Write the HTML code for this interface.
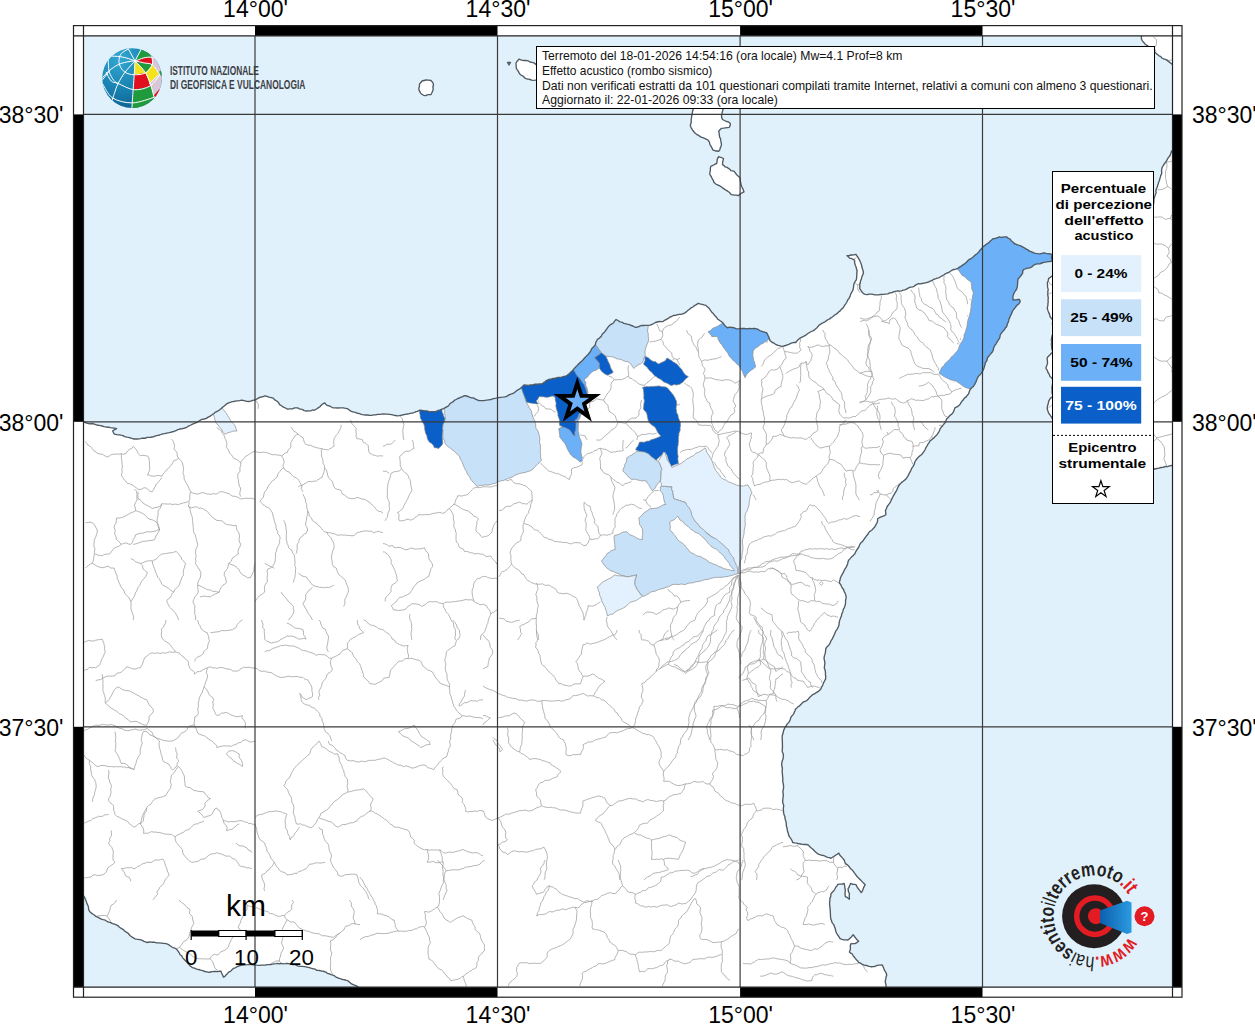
<!DOCTYPE html><html><head><meta charset="utf-8"><style>html,body{margin:0;padding:0;background:#fff;}svg{display:block;}</style></head><body>
<svg width="1255" height="1024" viewBox="0 0 1255 1024" font-family='"Liberation Sans", sans-serif'>
<defs><clipPath id="mc"><rect x="83.5" y="36" width="1089" height="951"/></clipPath><linearGradient id="gb" x1="0" y1="0" x2="0.6" y2="1"><stop offset="0" stop-color="#2fa7cf"/><stop offset="1" stop-color="#0b5d87"/></linearGradient><linearGradient id="cone" x1="0" y1="0" x2="1" y2="0"><stop offset="0" stop-color="#0c5fae"/><stop offset="1" stop-color="#2a9be0"/></linearGradient></defs>
<rect width="1255" height="1024" fill="#fff"/>
<g clip-path="url(#mc)">
<rect x="83.5" y="36" width="1089" height="951" fill="#e0f1fc"/>
<polygon points="83.5,422.0 85.0,422.4 86.5,423.0 88.1,423.3 89.6,423.8 92.0,423.5 94.4,424.1 96.6,425.0 99.0,425.4 100.6,425.7 102.2,426.0 103.8,426.6 105.4,426.8 107.0,427.2 108.7,427.2 110.3,427.6 111.9,427.8 114.3,428.2 116.7,428.6 114.6,429.6 112.7,431.0 113.4,432.6 114.3,434.2 115.6,434.3 116.9,434.6 118.3,434.8 119.6,434.8 120.9,435.1 122.2,435.3 123.5,435.9 124.6,436.6 127.0,437.2 129.5,437.6 131.8,438.4 134.2,439.0 135.8,439.0 137.4,439.0 139.0,438.9 140.6,438.6 142.2,438.2 143.8,438.2 145.5,438.2 146.9,437.4 148.5,437.4 150.2,437.3 151.8,437.0 153.4,436.8 154.9,436.1 156.5,435.6 158.1,435.3 159.7,435.0 162.0,434.0 164.4,433.6 166.8,433.1 169.2,432.6 170.4,432.3 171.7,432.0 172.9,431.6 174.2,431.5 175.3,430.8 176.5,430.4 177.5,429.7 178.8,429.4 180.0,429.0 181.4,428.9 182.6,428.5 183.9,428.4 185.1,427.9 186.4,427.5 187.5,426.8 188.5,426.1 189.7,425.5 190.9,425.0 192.0,424.4 193.2,423.9 194.4,423.4 195.5,422.8 196.8,422.5 197.9,421.8 199.8,420.5 201.8,419.3 204.1,419.0 206.3,418.4 208.2,417.1 210.2,416.1 212.1,414.8 213.9,413.5 215.6,412.1 217.6,411.1 219.5,410.0 221.2,408.5 222.9,407.1 224.6,405.7 226.2,404.2 228.2,403.1 229.5,402.5 230.9,402.1 232.3,401.6 233.7,401.5 235.1,401.2 236.5,400.9 238.0,400.9 239.4,400.7 241.8,400.2 244.2,400.7 246.5,401.3 248.9,401.5 250.5,401.2 252.1,400.6 253.7,400.2 255.3,399.9 256.4,399.2 257.6,398.6 258.7,397.9 259.8,397.3 261.1,397.0 262.4,396.8 263.6,396.3 264.9,395.9 267.0,396.4 269.0,397.2 271.1,397.6 273.2,398.2 274.8,399.9 276.8,401.0 278.5,402.6 279.6,404.6 281.5,405.8 283.4,407.1 285.5,408.0 287.5,409.1 289.9,408.9 292.4,408.9 294.6,407.9 297.1,407.8 298.3,408.2 299.4,408.8 300.7,409.1 301.9,409.4 303.1,409.9 304.2,410.6 305.4,410.8 306.7,411.0 308.7,410.8 310.7,410.8 312.6,410.0 314.6,410.2 315.9,409.3 317.2,408.5 318.5,407.6 319.9,406.7 320.9,405.5 322.1,404.4 323.5,403.5 325.0,403.0 325.7,404.1 326.6,405.1 327.8,405.5 329.1,405.9 330.3,406.3 331.3,407.0 332.5,407.6 333.7,407.8 335.7,407.8 337.7,408.0 339.7,407.8 341.7,407.8 343.2,407.9 344.7,408.2 346.2,408.3 347.6,408.9 349.0,409.6 350.0,410.7 351.5,411.3 352.9,411.8 354.5,412.2 356.0,412.7 357.6,413.3 359.2,413.5 360.7,414.2 362.3,414.7 363.9,414.9 365.6,415.0 367.6,415.0 369.6,415.4 371.6,415.3 373.6,414.9 375.6,414.9 377.6,414.3 379.6,414.4 381.6,414.2 383.6,414.0 385.6,414.1 387.6,414.1 389.6,414.4 391.6,414.7 393.5,415.2 395.5,415.5 397.5,415.8 399.1,415.7 400.7,415.3 402.3,415.0 403.9,414.6 405.4,414.3 407.0,414.0 408.7,413.9 410.2,413.4 411.5,413.2 412.7,413.1 413.9,412.5 415.1,412.0 416.3,411.6 417.5,411.3 418.7,410.7 419.8,410.2 422.2,410.3 424.6,410.8 427.1,410.9 429.4,411.8 431.2,411.6 433.1,411.6 435.0,411.6 436.8,411.2 438.4,410.3 440.3,409.9 441.9,409.2 443.7,408.6 444.8,407.9 445.9,407.4 446.9,406.6 448.1,406.1 449.0,405.1 449.7,404.0 450.6,403.2 451.7,402.5 453.3,401.6 454.5,400.2 456.2,399.5 457.8,398.5 459.5,398.0 461.1,397.1 462.8,396.6 464.4,395.7 466.3,396.0 468.2,396.5 469.9,397.3 471.8,397.8 473.8,398.0 475.4,399.1 477.2,399.8 479.0,400.6 481.5,400.6 484.0,400.5 486.4,400.2 488.9,399.8 490.1,399.6 491.4,399.5 492.5,398.8 493.7,398.6 496.2,398.2 498.6,397.7 500.6,397.3 502.7,397.2 504.7,396.9 506.7,396.3 508.5,395.2 510.3,394.3 512.3,393.6 514.2,392.8 515.4,391.8 516.6,390.7 517.9,389.9 519.3,389.2 520.5,388.2 521.7,387.2 522.9,386.1 524.0,385.0 526.2,385.1 528.4,385.4 530.6,384.9 532.8,385.0 534.9,384.2 537.2,384.2 539.4,384.0 541.6,384.0 542.8,383.3 543.9,382.4 545.1,381.8 546.0,380.8 547.3,380.2 548.6,379.6 549.9,379.2 551.3,379.1 553.0,378.5 554.7,378.3 556.4,377.8 558.1,377.5 559.9,377.4 561.6,377.2 563.3,376.7 565.0,376.2 566.2,375.8 567.3,375.3 568.2,374.4 569.2,373.7 571.0,371.9 572.8,370.3 573.7,369.3 574.4,368.2 575.5,367.4 576.2,366.3 577.3,365.4 578.1,364.4 579.2,363.6 580.0,362.5 581.8,361.1 583.3,359.5 584.8,357.8 586.4,356.1 588.1,354.5 589.5,352.8 590.7,350.9 591.7,348.8 592.5,347.7 593.6,346.9 594.4,345.9 595.3,344.8 595.6,343.5 595.9,342.2 596.6,341.0 597.2,339.8 598.1,338.9 599.2,338.2 600.2,337.2 601.2,336.4 601.7,335.2 602.4,334.0 603.4,333.1 604.4,332.2 605.7,330.5 607.0,328.7 608.2,326.9 609.7,325.3 611.5,324.1 613.4,323.0 614.6,321.1 616.1,319.5 618.0,320.5 619.8,321.8 622.0,322.2 623.9,323.4 625.4,323.7 626.9,324.1 628.5,324.4 629.9,324.9 631.4,325.5 632.9,326.0 634.2,326.8 635.7,327.3 637.3,327.0 638.9,326.6 640.3,325.9 641.9,325.4 643.5,325.5 645.2,325.4 646.8,325.4 648.4,325.4 650.3,325.2 652.1,324.4 653.8,323.5 655.4,322.5 657.3,322.0 659.2,321.5 661.1,321.6 663.0,321.5 664.6,320.3 666.4,319.3 668.3,318.4 669.8,317.1 671.7,316.5 673.3,315.5 675.2,315.4 677.0,314.8 678.9,314.3 680.9,314.4 682.7,313.8 684.5,313.2 686.2,311.9 687.8,310.6 689.4,309.3 691.0,307.9 692.9,307.0 694.5,305.6 696.4,304.6 698.1,303.4 700.0,303.9 702.0,304.3 704.0,304.9 705.9,305.4 707.6,306.9 709.3,308.5 710.5,310.4 711.8,312.2 713.5,313.8 714.8,315.6 716.4,317.2 717.7,319.1 719.1,320.0 720.4,321.0 721.8,321.9 723.0,323.0 724.0,324.3 724.9,325.7 726.3,326.7 727.4,327.9 728.6,327.4 729.8,327.2 731.1,327.3 732.4,327.5 733.6,327.7 734.8,328.1 736.0,328.6 737.2,328.8 739.7,328.7 742.1,328.4 744.5,328.5 747.0,328.8 749.4,328.5 751.8,328.6 754.3,328.3 756.7,328.8 758.0,329.3 759.0,330.0 760.2,330.8 761.4,331.2 762.7,331.7 764.0,331.8 765.2,332.4 766.5,332.7 767.3,333.9 767.9,335.2 768.5,336.5 769.1,337.8 769.6,339.2 770.0,340.6 771.2,341.5 772.3,342.5 773.6,342.9 774.7,343.7 775.8,344.4 777.0,345.0 778.2,345.4 779.6,345.7 780.8,346.1 782.1,346.4 783.8,346.0 785.6,345.5 787.2,344.9 788.9,344.3 790.5,343.4 792.2,342.9 794.0,342.4 795.8,342.5 796.7,341.2 797.7,340.1 798.9,339.1 800.0,338.1 802.0,337.1 804.0,336.2 805.9,335.1 807.6,333.7 809.5,332.5 811.4,331.5 813.4,330.6 815.2,329.2 816.3,328.3 817.3,327.4 818.2,326.3 819.0,325.2 820.2,324.4 821.3,323.7 822.6,323.0 823.8,322.4 825.0,321.8 826.1,320.9 827.2,320.1 828.4,319.5 829.7,318.9 830.7,317.9 831.9,317.3 833.0,316.5 834.7,315.0 836.7,313.9 838.3,312.3 840.1,310.9 841.5,309.1 843.3,307.7 844.4,305.6 845.7,303.8 846.9,302.0 847.7,300.0 849.1,298.4 850.0,296.4 850.6,294.4 851.6,292.5 852.7,290.7 853.3,288.6 853.6,286.3 853.9,284.0 854.9,281.9 856.3,279.9 856.6,277.7 856.8,275.4 856.8,273.1 857.1,270.8 856.7,269.5 856.3,268.3 856.1,267.0 855.5,265.8 855.1,264.5 854.7,263.2 854.6,261.9 854.6,260.6 853.6,259.6 852.3,258.8 850.9,258.4 849.5,258.1 848.4,256.7 847.0,255.6 849.3,255.5 851.5,255.0 853.7,254.8 855.9,254.3 856.6,255.4 857.3,256.4 858.1,257.5 858.7,258.6 859.3,259.7 860.0,260.8 860.3,262.0 860.9,263.2 861.3,264.4 861.7,265.7 861.9,267.0 862.3,268.2 862.7,269.5 863.1,270.7 863.2,272.0 863.5,273.3 862.6,275.1 861.8,276.9 861.4,278.9 860.6,280.7 860.3,282.7 859.7,284.6 859.9,286.6 859.7,288.6 860.6,289.9 861.4,291.2 862.4,292.5 863.5,293.6 865.3,294.3 867.2,294.7 869.1,294.1 871.1,294.2 873.0,294.4 874.9,294.8 876.8,294.8 878.7,294.9 880.9,294.4 883.2,294.3 885.5,294.1 887.8,293.9 889.8,292.8 892.1,292.5 894.3,291.7 896.5,291.1 898.2,291.0 899.9,291.1 901.5,290.8 903.1,290.2 904.8,289.9 906.4,289.2 907.8,288.4 909.3,287.5 910.9,287.2 912.6,286.9 914.2,286.3 915.5,285.1 916.9,284.3 918.5,283.6 920.2,283.8 921.9,283.5 923.3,283.4 924.5,282.9 925.9,282.8 927.2,282.3 928.5,282.0 929.7,281.4 930.9,280.9 932.2,280.4 933.3,279.5 934.6,279.1 935.9,278.7 937.1,278.2 938.4,277.8 939.7,277.3 940.8,276.5 942.0,275.9 943.7,275.0 945.3,273.9 947.0,273.0 948.8,272.4 950.4,271.3 952.0,270.2 953.8,269.5 955.7,269.1 957.7,268.3 959.5,267.2 961.3,266.1 963.0,264.8 964.8,263.7 966.4,262.3 967.8,260.7 969.4,259.3 971.5,258.3 973.4,256.8 975.0,255.1 977.0,253.8 978.6,252.1 980.0,250.2 981.7,248.6 983.0,246.6 984.4,245.9 985.6,244.8 986.9,243.9 988.3,243.2 989.4,242.1 990.4,240.9 991.6,239.9 992.8,238.8 994.5,238.5 996.2,238.1 997.9,237.5 999.5,236.8 1001.2,237.5 1003.0,237.1 1004.7,236.9 1006.5,236.8 1008.1,238.2 1010.0,239.0 1011.2,240.7 1012.8,242.1 1014.3,243.5 1016.3,244.3 1018.2,245.1 1020.2,245.6 1022.1,246.6 1024.0,247.7 1025.9,248.8 1027.8,249.9 1029.6,251.1 1031.7,251.8 1033.7,252.8 1035.8,253.4 1037.9,253.7 1039.9,253.9 1041.9,253.3 1044.0,252.8 1045.9,253.4 1048.0,253.6 1050.0,254.0 1052.0,254.4 1051.7,256.1 1051.4,257.8 1052.0,259.5 1052.0,261.2 1050.0,261.5 1047.9,261.6 1045.9,262.1 1043.8,262.3 1041.9,263.0 1039.9,263.8 1037.9,263.9 1035.8,264.2 1034.3,264.8 1033.0,265.8 1031.8,266.9 1030.4,267.6 1028.8,268.1 1027.2,268.2 1025.7,268.8 1024.1,269.1 1023.2,270.2 1022.6,271.6 1022.7,273.1 1021.8,274.4 1021.1,275.6 1020.1,276.6 1019.3,277.8 1018.2,278.8 1017.8,280.6 1017.6,282.4 1017.6,284.2 1017.3,286.0 1017.1,287.8 1016.4,289.5 1015.3,291.0 1014.3,292.5 1013.6,294.3 1013.0,296.1 1012.9,298.1 1013.0,300.0 1014.6,299.8 1016.3,299.9 1017.9,299.5 1019.5,299.5 1020.2,301.5 1019.5,302.9 1018.6,304.1 1017.2,305.0 1016.2,306.2 1015.3,307.6 1014.2,308.8 1013.2,310.1 1012.3,311.5 1011.8,313.1 1011.1,314.6 1010.3,316.0 1009.8,317.6 1008.9,319.1 1008.7,320.7 1008.2,322.3 1007.4,323.7 1007.1,325.4 1006.4,326.9 1005.2,328.1 1004.5,329.6 1003.4,330.7 1002.5,331.9 1001.4,333.1 1000.5,334.4 1000.0,335.9 999.9,337.5 999.1,338.8 998.3,340.2 997.5,341.5 996.6,342.7 995.9,344.1 994.9,345.3 994.2,346.7 993.5,348.1 993.4,349.6 992.8,351.1 992.1,352.3 991.1,353.3 990.3,354.4 989.4,355.4 988.6,356.6 987.6,357.6 987.2,359.0 986.9,360.4 986.3,361.6 985.3,362.7 985.2,364.1 984.7,365.4 984.4,366.7 984.0,368.0 983.5,369.3 983.0,370.6 982.3,371.7 981.6,372.9 980.8,373.9 979.9,374.9 978.9,375.8 978.1,376.8 977.5,378.0 977.0,379.3 976.4,380.5 976.1,381.8 975.3,382.9 974.8,384.2 974.0,385.3 973.4,386.5 972.3,387.3 971.3,388.2 970.2,389.5 969.5,391.0 969.0,392.5 968.5,394.1 967.3,395.2 966.4,396.6 965.1,397.6 963.9,398.8 963.1,400.1 961.9,401.3 961.0,402.7 960.2,404.1 959.1,405.3 957.8,406.4 956.4,407.2 954.9,407.9 954.2,410.1 953.3,412.3 951.8,414.1 949.8,415.5 948.4,417.3 946.7,418.9 945.8,421.1 944.7,423.1 943.5,424.5 942.5,426.0 941.2,427.3 940.1,428.8 939.6,430.5 938.7,432.1 937.7,433.7 936.7,435.2 935.2,436.3 934.1,437.8 932.6,438.9 931.2,440.1 929.7,441.2 929.0,442.9 927.8,444.4 927.0,446.0 925.8,447.9 924.9,450.0 923.7,451.9 922.4,453.7 920.7,455.3 918.9,456.6 917.4,458.3 916.0,460.0 914.8,462.0 914.2,464.3 913.1,466.3 911.8,468.2 910.9,470.3 909.8,472.3 908.8,474.4 907.7,476.4 906.5,478.3 904.9,479.9 903.2,481.2 901.4,482.6 899.9,484.2 898.6,486.0 897.6,488.0 896.8,490.1 895.6,492.1 894.4,494.2 893.2,496.2 892.1,498.4 891.1,500.5 890.1,502.7 888.6,504.6 887.2,506.5 886.5,508.5 885.5,510.4 885.7,512.6 885.9,514.7 883.9,515.8 881.7,516.7 879.6,517.5 877.6,518.8 877.6,520.4 877.4,522.0 876.7,523.4 875.9,524.8 875.2,526.2 874.3,527.5 873.2,528.6 872.2,529.8 870.9,530.8 869.6,531.6 868.6,532.9 867.8,534.3 866.8,535.5 865.8,536.8 864.9,538.0 864.0,539.3 863.3,540.3 862.6,541.4 861.6,542.2 860.7,543.1 860.0,544.1 859.5,545.3 859.0,546.4 858.5,547.5 857.0,549.6 855.8,551.7 855.2,552.8 854.8,554.0 853.7,554.8 853.0,555.8 851.4,557.1 850.1,558.6 848.7,560.1 848.0,562.0 847.6,564.0 846.8,565.9 845.9,567.7 844.8,569.4 843.9,571.0 843.2,572.7 842.2,574.3 841.3,575.9 840.5,577.7 840.1,579.5 839.6,581.3 839.3,583.1 840.7,584.5 841.4,586.3 842.3,588.0 843.6,589.5 844.1,591.4 845.1,593.1 845.7,594.9 846.2,596.8 845.9,598.9 845.5,601.0 845.6,603.1 845.1,605.2 844.5,607.3 843.4,609.2 842.9,611.2 842.1,613.2 841.6,614.4 841.5,615.7 841.0,616.9 840.5,618.1 840.1,619.3 839.6,620.5 839.4,621.7 839.1,623.0 839.1,624.3 838.8,625.6 838.4,626.8 837.7,627.9 837.3,629.1 836.5,630.2 835.7,631.2 835.2,632.4 834.3,634.6 833.3,636.7 832.3,638.9 830.9,640.9 830.1,643.1 828.8,645.2 827.0,646.8 825.7,648.8 825.6,651.2 825.2,653.6 824.4,655.9 824.0,658.3 824.5,660.7 824.9,663.1 824.6,665.5 824.3,667.9 824.8,669.2 825.2,670.6 825.4,671.9 825.5,673.3 825.4,674.8 825.8,676.1 825.6,677.5 825.7,678.9 824.9,680.2 824.2,681.6 823.5,682.9 823.0,684.4 822.5,685.9 821.5,687.0 821.1,688.5 820.2,689.8 818.5,691.3 816.6,692.4 814.8,693.7 812.8,694.6 811.2,696.1 809.5,697.6 808.1,699.3 806.5,700.8 804.8,701.3 803.3,702.1 802.0,703.3 800.8,704.6 799.6,705.8 798.1,706.6 796.9,707.9 795.6,709.0 795.2,710.5 794.4,711.8 793.9,713.3 793.1,714.6 792.0,715.8 791.1,717.0 790.5,718.5 790.1,720.0 789.0,722.1 787.3,723.9 786.1,725.9 784.8,727.9 783.9,729.8 783.3,731.8 782.9,733.8 782.2,735.8 782.2,738.1 782.3,740.4 782.4,742.7 782.4,745.0 782.5,747.4 782.2,749.7 782.4,752.1 783.3,754.2 783.4,756.6 783.0,758.9 782.2,761.1 781.7,763.4 781.8,765.8 782.4,768.0 782.2,770.4 782.2,772.7 782.5,774.7 782.6,776.6 782.9,778.6 782.7,780.6 783.0,782.6 783.4,784.5 783.6,786.5 783.5,788.5 783.2,790.0 782.8,791.5 783.0,793.0 783.3,794.4 783.3,795.9 783.0,797.4 782.9,798.9 782.7,800.4 782.7,801.9 782.9,803.3 783.5,804.7 783.7,806.2 783.4,807.7 783.3,809.2 783.5,810.7 783.5,812.2 784.0,814.5 784.9,816.7 785.1,819.1 785.9,821.4 786.3,823.7 786.4,826.1 787.1,828.3 787.4,830.7 787.9,832.3 788.4,833.8 788.8,835.4 789.5,836.9 790.5,838.1 791.4,839.5 792.2,841.0 792.7,842.5 794.7,842.9 796.7,843.2 798.6,843.6 800.6,844.0 802.6,844.3 804.5,844.5 806.6,844.5 808.5,845.2 809.6,846.6 810.9,847.8 812.3,848.8 813.6,850.0 814.8,851.3 816.1,852.4 817.4,853.6 819.0,854.4 820.5,854.8 822.0,855.3 823.6,855.5 825.0,856.1 826.4,856.9 827.9,857.3 829.5,857.6 830.9,858.3 832.9,857.0 834.9,855.7 836.9,854.5 838.8,853.1 839.5,854.5 840.4,855.8 841.6,856.9 842.6,858.1 843.6,859.2 844.4,860.6 844.9,862.1 845.4,863.6 847.5,864.9 849.2,866.7 850.6,868.8 852.6,870.3 854.0,872.3 855.5,874.3 856.9,876.3 858.6,878.1 860.3,879.7 861.9,881.4 863.5,883.1 865.2,884.7 864.1,886.6 863.2,888.6 862.5,890.8 861.2,892.6 859.9,890.6 858.3,888.8 857.1,886.8 855.9,884.7 854.6,884.4 853.2,884.4 851.9,884.0 850.7,883.4 850.1,884.7 849.4,886.0 849.0,887.5 848.0,888.6 848.3,890.0 848.3,891.3 848.9,892.6 849.5,893.8 849.2,895.1 849.3,896.5 849.4,897.8 849.4,899.2 847.5,897.7 845.4,896.6 845.1,895.0 845.1,893.3 845.1,891.6 845.4,889.9 844.9,888.3 844.8,886.7 844.5,885.0 844.1,883.4 842.5,884.0 840.8,884.1 839.1,884.2 837.5,884.7 837.0,886.1 835.9,887.0 835.3,888.3 834.6,889.6 833.8,890.7 832.8,891.8 831.8,892.8 830.9,893.9 830.9,895.3 830.7,896.6 830.0,897.8 829.9,899.2 830.0,900.5 829.6,901.8 829.6,903.2 829.6,904.5 829.9,906.8 830.1,909.1 830.3,911.4 830.4,913.8 830.5,916.1 830.7,918.5 831.5,920.7 832.2,922.9 833.7,924.6 834.5,926.7 835.3,928.8 835.7,931.0 836.5,933.1 837.7,935.0 839.0,936.8 840.1,938.7 842.0,939.3 844.0,939.8 846.0,939.8 848.0,940.0 849.4,938.8 850.8,937.6 852.0,936.1 853.3,934.8 854.5,936.5 855.8,938.2 857.1,939.8 858.6,941.3 856.8,942.6 855.0,943.6 852.8,943.6 850.7,944.0 850.3,946.0 850.4,948.0 850.2,950.0 849.4,951.9 850.7,953.2 852.3,954.0 853.1,955.6 854.2,957.0 855.3,958.4 856.4,959.7 857.7,960.9 858.6,962.4 859.9,962.9 861.2,963.6 862.4,964.3 863.6,964.9 865.0,965.3 866.4,965.5 867.8,965.9 869.1,966.4 870.8,966.7 872.4,966.7 874.1,966.5 875.8,966.2 877.2,965.3 878.9,965.1 880.6,965.1 882.3,965.0 883.2,967.0 884.0,969.1 885.0,971.1 886.2,973.0 886.7,975.2 886.0,977.3 885.7,979.4 885.2,981.5 885.7,983.6 886.1,985.7 886.1,987.9 886.2,990.0 360.9,990.0 359.5,988.5 358.0,987.1 356.4,985.8 354.5,985.1 352.6,984.4 350.8,983.3 349.3,981.9 347.7,980.7 346.5,980.4 345.2,980.0 344.0,979.7 342.7,979.5 341.5,979.1 340.3,978.6 339.1,978.4 337.9,977.9 336.7,977.4 335.5,976.9 334.6,975.9 333.4,975.3 332.2,974.9 331.0,974.6 329.8,974.0 328.6,973.6 327.3,973.3 326.4,972.4 325.2,971.9 324.0,971.5 322.8,971.2 321.5,971.1 320.3,970.7 319.1,970.5 317.8,970.4 316.5,970.3 315.6,969.4 314.3,968.9 313.1,968.8 311.9,968.4 310.7,968.1 309.5,967.6 307.1,967.1 304.7,966.7 302.3,966.4 299.8,966.4 297.5,965.8 295.3,964.6 292.8,964.7 290.4,964.0 288.6,963.6 286.8,963.5 285.0,963.7 283.2,963.8 281.4,963.4 279.6,963.9 277.8,963.4 276.0,963.7 274.2,963.8 272.4,964.2 270.7,964.5 268.9,964.6 267.1,964.6 265.3,965.1 263.5,965.1 261.7,965.2 259.3,965.3 256.9,965.2 254.5,965.0 252.1,964.6 249.8,964.3 247.4,964.6 245.0,964.8 242.6,965.2 241.3,965.4 240.1,965.7 238.8,966.0 237.5,966.3 236.5,967.1 235.4,967.8 234.1,968.1 233.0,968.8 231.8,969.9 230.8,971.1 229.3,971.8 228.0,972.8 227.1,974.0 225.9,975.1 224.9,976.4 223.4,977.1 222.9,975.6 222.2,974.2 221.4,972.7 221.0,971.2 219.5,971.2 218.0,971.6 216.5,971.5 215.0,971.3 213.5,971.5 212.0,971.6 210.6,972.0 209.1,972.4 207.0,971.8 204.8,971.5 202.8,970.7 200.7,970.2 198.6,969.5 196.5,969.2 194.5,968.2 192.4,967.6 191.4,966.8 190.3,966.1 189.5,965.1 188.7,964.1 187.8,963.2 187.0,962.2 186.1,961.3 185.2,960.4 183.8,959.1 182.5,957.6 181.7,955.8 180.1,954.7 179.3,952.9 178.2,951.3 177.1,949.8 175.6,948.5 174.4,948.0 173.1,947.6 171.9,947.0 170.8,946.2 169.6,945.5 168.6,944.6 167.4,944.1 166.1,943.7 163.7,943.3 161.3,943.1 158.9,942.9 156.5,942.8 154.2,942.2 151.7,942.2 149.3,942.0 146.9,942.5 145.5,941.8 144.0,941.4 142.6,940.6 141.2,939.9 139.6,939.6 138.1,939.4 136.5,939.2 135.0,938.9 133.4,937.8 131.7,936.8 130.2,935.7 128.9,934.2 127.6,932.8 125.9,931.9 124.3,930.7 123.0,929.3 121.2,928.4 119.5,927.3 118.1,925.8 116.3,924.8 114.4,924.0 112.5,923.7 110.7,922.7 108.7,922.2 106.9,921.3 105.2,920.2 103.2,919.7 101.3,919.1 99.5,918.2 97.7,917.1 95.8,916.4 94.3,915.0 93.0,914.2 91.8,913.4 90.7,912.4 89.6,911.4 88.6,909.5 88.5,907.4 87.9,905.4 86.9,903.6 86.3,901.5 85.5,899.6 84.7,897.7 83.6,895.9 80.0,895.9 80.0,422.0" fill="#fff"/>
<polygon points="1175.0,150.8 1173.3,150.7 1171.7,150.8 1171.3,152.0 1170.9,153.2 1170.5,154.4 1170.0,155.5 1169.3,156.5 1168.4,157.4 1167.8,158.5 1167.2,159.6 1166.0,161.8 1164.4,163.7 1163.1,165.8 1161.9,168.0 1161.8,169.3 1161.5,170.5 1161.7,171.8 1161.7,173.1 1161.4,174.3 1160.7,175.4 1160.5,176.7 1160.1,177.9 1159.7,179.1 1159.5,180.4 1159.0,181.5 1158.4,182.7 1158.2,183.9 1157.7,185.1 1157.5,186.3 1157.0,187.5 1156.4,188.8 1156.0,190.1 1155.9,191.5 1156.2,192.9 1155.5,194.0 1155.1,195.4 1154.7,196.6 1154.3,197.9 1153.9,199.3 1153.9,200.6 1153.8,202.0 1153.7,203.3 1153.3,204.6 1153.2,206.0 1152.7,207.3 1152.4,208.6 1152.5,209.9 1152.7,211.3 1152.4,212.6 1152.1,214.0 1151.9,215.3 1151.6,216.6 1151.2,217.9 1151.0,219.3 1151.0,220.6 1150.8,222.0 1150.9,223.3 1150.8,224.7 1150.8,226.0 1150.4,227.3 1150.3,228.7 1150.0,230.0 1148.6,231.3 1147.0,232.2 1145.2,232.9 1143.5,233.6 1141.7,234.2 1139.9,234.8 1138.5,236.2 1137.2,237.6 1135.7,238.8 1134.6,240.3 1133.1,241.4 1131.5,242.4 1130.0,243.4 1128.4,244.4 1126.7,245.3 1125.6,246.9 1124.1,248.1 1122.5,249.0 1120.9,250.1 1119.4,251.2 1117.5,251.5 1115.7,251.9 1113.9,252.5 1112.2,253.5 1110.7,254.6 1109.2,255.6 1107.6,256.6 1106.0,257.6 1104.4,258.6 1102.6,259.3 1101.8,261.1 1100.0,262.0 1098.9,262.8 1097.6,263.1 1096.5,263.8 1095.3,264.2 1093.9,264.2 1092.6,264.1 1091.4,264.6 1090.1,264.7 1088.8,265.0 1087.5,265.2 1086.3,265.6 1085.0,265.7 1083.7,266.1 1082.5,266.3 1081.2,266.5 1079.9,266.7 1078.8,267.4 1077.4,267.6 1076.1,267.5 1074.8,267.5 1073.7,268.2 1072.6,269.0 1071.3,269.2 1069.9,269.2 1068.7,269.6 1067.4,270.0 1066.3,270.6 1065.1,271.3 1063.8,271.3 1062.5,271.4 1061.2,271.6 1060.0,272.0 1058.1,273.2 1055.9,273.8 1053.8,274.6 1052.0,276.0 1050.4,277.3 1048.7,278.3 1048.4,279.7 1048.1,281.0 1047.6,282.3 1047.3,283.7 1047.6,285.2 1047.5,286.8 1047.9,288.3 1048.3,289.8 1047.8,291.3 1047.9,292.9 1047.7,294.5 1047.9,296.0 1048.3,297.5 1048.1,299.1 1048.1,300.6 1048.2,302.2 1047.9,303.7 1047.9,305.3 1047.5,306.8 1047.3,308.3 1047.9,310.4 1048.6,312.4 1049.6,314.4 1050.0,316.5 1051.4,318.4 1053.0,320.0 1052.6,322.0 1052.4,324.1 1053.1,326.0 1053.5,328.1 1053.6,330.1 1053.4,332.2 1052.8,334.1 1052.0,336.0 1051.7,338.0 1051.3,340.0 1051.7,342.0 1051.4,344.1 1051.6,346.1 1051.7,348.1 1052.2,350.1 1053.0,352.0 1051.4,353.2 1050.1,354.7 1048.7,356.1 1047.3,357.5 1047.1,358.9 1047.4,360.3 1047.4,361.7 1047.6,363.1 1047.2,364.4 1046.7,365.7 1046.2,367.0 1046.0,368.4 1047.3,370.3 1048.0,372.5 1049.3,374.4 1050.0,376.6 1051.8,378.1 1053.0,380.0 1052.9,382.0 1052.5,384.0 1052.2,386.0 1051.9,388.0 1052.2,390.0 1052.0,392.1 1052.4,394.1 1053.0,396.0 1051.9,397.3 1050.4,398.2 1049.6,399.7 1048.7,401.2 1048.3,403.2 1047.7,405.2 1047.3,407.3 1047.3,409.4 1047.9,410.8 1048.3,412.3 1049.0,413.7 1050.0,414.9 1050.8,416.1 1051.7,417.3 1052.3,418.7 1053.0,420.0 1054.7,421.3 1056.1,422.8 1057.9,424.0 1059.2,425.7 1060.4,427.6 1061.8,429.2 1063.9,430.0 1065.8,430.9 1067.6,432.1 1069.2,433.4 1071.2,434.2 1072.9,435.5 1074.8,436.5 1076.3,438.0 1078.0,439.3 1080.0,440.0 1081.3,440.5 1082.6,440.9 1083.9,441.2 1085.3,441.3 1086.4,442.1 1087.6,442.9 1088.6,443.8 1089.7,444.6 1090.9,445.2 1092.1,445.9 1093.4,446.1 1094.7,446.4 1095.8,447.2 1097.1,447.7 1098.5,447.9 1099.9,447.9 1101.2,448.1 1102.3,448.9 1103.6,449.3 1104.8,449.9 1106.0,450.6 1107.2,451.1 1108.5,451.5 1109.7,452.0 1111.0,452.4 1112.2,452.9 1113.5,453.4 1114.7,454.0 1116.0,454.3 1117.4,454.4 1118.7,454.8 1120.0,455.0 1122.3,455.7 1124.6,455.8 1126.9,456.3 1129.2,457.0 1131.5,457.6 1133.6,458.7 1135.7,459.8 1137.7,461.0 1139.7,462.3 1141.9,463.5 1144.2,464.0 1146.6,464.1 1148.7,465.3 1150.6,466.6 1152.7,467.7 1154.6,469.1 1156.7,468.5 1158.9,468.2 1161.0,467.5 1163.2,467.3 1165.3,466.5 1167.5,466.7 1169.5,465.9 1171.7,465.5 1173.3,465.6 1175.0,465.5" fill="#fff"/>
<polygon points="1140.0,33.0 1140.6,35.0 1141.5,36.9 1141.4,39.0 1142.4,40.9 1143.3,42.1 1144.3,43.1 1145.3,44.3 1146.5,45.2 1147.9,45.8 1148.8,47.0 1150.0,47.9 1151.0,49.0 1152.1,50.4 1153.5,51.6 1155.0,52.5 1156.3,53.6 1157.8,54.7 1159.1,55.8 1160.8,56.6 1161.9,58.0 1163.6,58.9 1165.5,59.4 1167.2,60.4 1168.7,61.6 1170.2,62.8 1171.7,64.0 1173.4,64.9 1175.0,66.0 1175.0,33.0" fill="#fff"/>
<polygon points="426.1,80.0 428.6,80.2 431.0,80.5 432.4,82.1 433.5,84.0 433.3,85.5 432.9,87.0 433.2,88.5 433.0,90.0 432.1,92.3 431.0,94.5 429.7,94.6 428.4,94.6 427.1,94.9 426.0,95.6 423.6,95.3 421.5,94.0 420.5,92.9 419.8,91.7 419.2,90.4 418.8,89.0 419.0,87.7 419.4,86.5 419.5,85.3 419.5,84.0 420.9,82.6 422.0,81.0 424.0,80.5" fill="#fff"/>
<polygon points="519.2,59.1 520.8,59.8 522.5,60.3 524.2,60.5 526.0,60.5 528.1,60.8 529.9,62.0 531.9,62.3 533.9,62.9 535.6,64.1 537.0,65.5 537.1,67.3 536.9,69.1 537.1,70.9 537.2,72.8 537.7,74.5 537.6,76.4 537.4,78.2 537.0,80.0 535.2,80.2 533.5,80.3 531.7,80.1 530.0,79.5 528.7,79.2 527.4,79.0 526.1,78.7 524.9,78.2 524.1,77.2 523.2,76.2 522.1,75.7 521.0,75.0 519.5,73.7 518.6,71.9 517.9,70.7 517.1,69.6 516.4,68.4 516.2,67.0 516.1,65.0 516.0,63.0 516.7,61.9 517.4,60.9 518.3,60.0" fill="#fff"/>
<polygon points="693.2,104.0 693.6,105.3 693.3,106.7 693.3,108.0 693.2,109.3 692.8,110.5 692.5,111.8 692.3,113.1 692.0,114.4 691.8,115.6 691.6,116.9 691.4,118.2 691.2,119.5 691.2,121.0 691.2,122.5 690.7,124.0 690.3,125.4 691.1,127.6 692.3,129.6 693.6,131.5 695.2,133.2 696.6,134.3 698.1,135.1 699.6,136.1 701.0,137.1 702.8,137.7 704.5,138.4 706.2,139.1 707.9,140.0 708.9,141.3 709.6,142.8 709.9,144.5 710.8,145.9 711.9,147.8 712.7,149.8 714.1,150.4 715.5,151.0 717.1,151.0 718.6,151.3 719.8,149.9 720.2,148.2 720.9,146.6 721.5,144.9 721.2,142.9 720.8,140.9 720.6,138.9 719.6,137.1 719.4,135.6 719.3,134.1 719.0,132.7 718.6,131.2 720.0,129.7 721.5,128.3 723.5,128.2 725.4,127.9 727.4,127.6 729.3,127.3 730.2,125.4 730.3,123.4 728.6,121.9 726.4,121.5 724.5,120.5 722.5,119.5 721.7,117.6 721.5,115.6 722.0,114.0 722.2,112.4 722.6,110.9 723.0,109.3 723.1,108.0 723.2,106.7 723.3,105.3 723.0,104.0 721.1,103.8 719.3,103.3 717.4,103.6 715.5,103.9 713.8,104.8 711.9,105.2 710.0,105.0 708.1,104.9 706.2,104.7 704.4,104.4 702.6,103.7 700.7,103.4 698.8,103.6 697.0,104.4 695.1,104.5" fill="#fff"/>
<polygon points="718.6,156.6 719.8,157.1 721.2,157.3 722.3,158.0 723.5,158.6 723.2,160.1 722.8,161.5 722.6,163.0 722.5,164.5 723.9,165.6 725.2,166.9 727.0,167.3 728.4,168.4 729.8,169.3 730.9,170.6 732.6,170.8 734.2,171.3 735.5,173.2 736.9,174.9 738.6,176.4 740.1,178.1 740.3,180.1 740.5,182.1 741.0,184.1 741.5,186.0 742.1,187.5 742.9,188.8 743.4,190.3 744.0,191.8 742.5,192.7 740.9,193.5 739.5,194.6 738.1,195.7 736.5,195.1 734.7,195.1 733.0,194.9 731.3,194.7 730.4,193.6 729.5,192.5 728.4,191.7 727.2,190.9 726.0,190.2 724.8,189.4 723.7,188.6 722.5,187.9 721.0,186.6 719.3,185.7 717.5,184.8 715.7,184.0 714.7,182.9 713.7,181.9 713.4,180.5 712.5,179.3 711.9,178.0 711.3,176.6 710.5,175.5 709.8,174.2 709.9,172.2 710.4,170.3 710.3,168.3 710.8,166.4 712.3,165.7 713.7,165.0 715.1,164.1 716.6,163.5 717.0,162.3 717.1,161.0 717.1,159.8 717.6,158.6" fill="#fff"/>
<polygon points="507.5,62.5 510.5,62.5 509.0,65.0" fill="#fff"/>
<polygon points="212.0,410.0 213.7,408.3 215.7,406.9 217.6,405.4 219.7,404.4 220.5,405.6 221.1,406.9 222.0,408.0 223.0,409.1 223.9,410.2 224.8,411.3 225.5,412.5 226.6,413.5 227.5,415.6 228.9,417.5 230.0,419.6 231.4,421.4 232.3,422.5 233.3,423.5 234.2,424.6 235.0,425.8 235.5,427.1 235.9,428.4 236.5,429.7 237.0,431.0 235.6,431.0 234.1,431.0 232.7,431.3 231.4,431.8 229.7,432.3 228.0,432.6 226.6,433.5 225.0,434.2 223.6,432.8 222.4,431.2 221.6,429.3 220.2,427.8 219.1,426.4 218.0,424.9 216.6,423.7 215.5,422.2 215.3,420.6 214.8,419.1 214.4,417.6 213.9,416.1 213.6,414.5 213.1,413.0 212.8,411.4" fill="#e2f1fd" stroke="#8a8a8a" stroke-width="0.7" stroke-linejoin="round"/>
<polygon points="417.5,406.7 419.0,407.0 420.5,407.1 422.0,407.3 423.5,407.4 425.0,407.5 426.4,407.4 428.0,407.4 429.4,407.8 430.9,407.6 432.4,407.1 434.0,407.0 435.5,407.2 436.9,406.5 438.3,405.9 439.7,405.3 441.3,405.1 441.6,406.9 442.0,408.7 441.9,410.5 442.3,412.3 443.2,414.0 443.5,415.8 444.4,417.4 445.3,419.0 444.8,420.6 444.5,422.2 443.6,423.6 443.0,425.1 442.9,426.8 442.6,428.4 443.0,430.0 442.9,431.7 442.6,433.1 442.5,434.5 442.3,435.9 442.3,437.3 442.4,438.7 442.6,440.1 442.6,441.5 442.9,442.9 442.3,444.5 441.2,445.9 440.0,447.1 438.9,448.4 436.5,447.9 434.1,447.6 433.8,446.3 433.2,445.2 432.3,444.2 431.5,443.2 430.3,442.8 429.2,441.9 428.5,440.8 427.8,439.7 427.2,438.1 427.0,436.5 426.6,434.9 425.6,433.5 425.3,431.9 424.9,430.3 424.6,428.7 424.6,427.0 424.2,425.7 423.9,424.4 423.2,423.2 422.6,422.0 421.8,420.9 421.3,419.7 420.6,418.5 420.2,417.2 420.2,415.8 420.0,414.5 419.6,413.2 419.6,411.8 419.3,410.4 418.7,409.2 418.1,408.0" fill="#0a60c8" stroke="#8a8a8a" stroke-width="0.7" stroke-linejoin="round"/>
<polygon points="442.2,404.9 443.3,404.3 444.4,403.7 445.4,402.9 446.5,402.3 447.5,401.6 448.5,400.7 449.3,399.7 450.2,398.8 451.5,397.5 453.0,396.5 454.8,396.1 456.6,395.6 458.3,395.0 459.8,393.8 461.2,392.7 462.9,392.0 465.0,392.3 466.9,393.4 469.0,393.4 471.1,393.6 473.1,394.3 475.2,394.9 477.1,395.8 479.0,396.6 481.3,396.4 483.5,395.9 485.8,396.0 488.1,395.6 490.3,395.2 492.5,394.6 494.8,394.4 497.1,394.0 499.0,393.4 501.0,392.7 502.6,391.3 504.7,391.1 506.8,390.7 508.6,389.7 510.6,389.4 512.7,389.1 513.9,388.2 515.2,387.3 516.5,386.4 517.5,385.1 518.6,383.9 519.9,383.1 521.2,382.3 522.5,381.3 522.4,382.7 522.5,384.2 522.8,385.6 522.4,387.1 523.1,388.3 523.7,389.6 524.1,391.0 524.3,392.5 524.7,393.9 524.8,395.3 524.9,396.7 524.9,398.1 525.3,399.5 525.8,400.9 526.5,402.1 526.9,403.5 528.1,405.3 529.0,407.3 530.2,409.0 531.3,410.9 531.7,413.0 532.4,415.0 532.8,417.2 533.8,419.1 534.9,421.2 535.6,423.4 535.7,425.8 535.9,428.2 537.3,430.1 538.4,432.1 538.9,434.4 539.6,436.7 539.7,438.2 539.9,439.7 539.5,441.1 539.5,442.6 540.0,444.0 540.5,445.5 540.4,447.0 540.6,448.5 540.4,449.9 540.3,451.4 540.5,452.9 540.7,454.4 540.5,455.9 540.7,457.4 541.0,458.8 541.6,460.2 540.4,461.4 539.3,462.7 537.8,463.7 536.6,464.9 535.5,466.3 534.3,467.5 533.2,468.9 531.8,469.9 530.2,470.8 528.5,471.4 526.8,471.9 525.1,472.4 523.4,472.9 521.6,472.9 519.9,473.6 518.1,473.8 517.0,474.5 515.7,474.9 514.4,475.4 513.5,476.4 512.3,477.0 511.1,477.4 509.9,477.9 508.7,478.5 507.4,478.8 506.1,479.2 504.9,479.8 503.8,480.5 502.4,480.5 501.1,480.8 499.9,481.2 498.6,481.6 497.4,482.3 496.1,482.8 494.9,483.5 493.4,483.6 492.1,484.1 490.8,484.5 489.4,484.7 488.1,485.1 486.7,485.0 485.3,484.9 483.9,485.0 482.6,485.5 481.1,485.3 479.7,485.4 478.5,486.1 477.1,486.5 475.7,485.1 474.5,483.4 473.0,482.0 471.7,480.6 470.4,478.9 469.8,477.0 468.4,475.5 467.3,473.8 466.5,471.5 465.2,469.5 464.2,467.3 463.2,465.1 462.5,462.8 461.3,460.7 460.2,458.6 459.5,456.2 457.9,454.7 456.2,453.2 454.6,451.6 452.8,450.3 451.1,448.8 449.3,447.4 447.4,446.1 445.9,444.5 444.9,442.7 444.5,440.6 443.4,438.8 442.9,436.7 442.7,435.4 443.0,434.2 442.8,433.0 442.9,431.7 443.0,430.0 442.6,428.4 442.9,426.8 443.0,425.1 443.6,423.6 444.5,422.2 444.8,420.6 445.3,419.0 445.2,417.2 445.0,415.4 444.7,413.6 444.7,411.7 444.3,409.9 443.3,408.4 442.7,406.7" fill="#c7e1f9" stroke="#8a8a8a" stroke-width="0.7" stroke-linejoin="round"/>
<polygon points="569.9,367.5 570.5,366.3 571.7,365.5 572.6,364.6 573.4,363.4 574.4,362.6 575.5,361.8 576.5,360.8 577.2,359.7 579.0,358.3 580.2,356.3 581.9,354.9 583.5,353.2 584.8,351.4 586.3,349.7 587.9,348.0 588.9,346.0 589.9,344.9 590.7,343.6 591.5,342.4 592.4,341.3 593.6,342.7 594.8,344.1 596.0,345.4 597.3,346.8 598.2,348.3 599.2,349.8 600.4,351.3 601.5,352.7 599.9,354.0 598.2,355.3 596.4,356.4 594.6,357.6 595.8,359.1 597.1,360.5 598.4,362.0 599.5,363.5 599.4,364.8 599.4,366.0 598.9,367.2 598.6,368.4 597.6,369.2 596.4,369.9 595.2,370.5 593.9,370.8 592.8,371.4 591.8,372.3 590.7,373.1 589.8,374.0 588.6,375.5 587.5,377.1 585.9,378.2 584.4,379.3 584.8,381.0 585.8,382.4 585.7,384.1 585.9,385.7 586.6,387.2 587.2,388.8 587.5,390.4 588.0,392.0 587.5,394.3 586.9,396.6 586.7,398.9 586.5,401.3 585.4,403.4 584.5,405.5 584.0,407.8 583.0,410.0 582.4,411.3 582.2,412.7 581.4,413.9 580.8,415.1 580.1,416.4 579.7,417.7 578.9,418.9 578.0,420.0 578.2,421.9 578.4,423.8 578.3,425.7 578.3,427.6 578.1,429.5 578.3,431.5 578.7,433.3 579.1,435.2 579.2,436.9 580.0,438.4 580.7,439.9 581.2,441.4 581.7,443.0 581.9,444.7 581.5,446.3 581.2,448.0 581.1,449.6 580.9,451.3 581.1,452.9 581.3,454.5 581.7,456.1 582.2,457.7 582.2,459.4 582.3,461.0 580.2,462.0 579.0,461.0 577.9,460.0 576.6,459.1 575.4,458.2 574.0,457.4 572.7,456.7 571.8,455.4 570.5,454.5 569.4,452.4 568.1,450.4 567.1,448.2 566.2,446.0 565.6,444.8 564.8,443.6 564.1,442.5 563.1,441.5 562.3,440.4 561.5,439.3 560.7,438.2 559.7,437.3 559.8,435.1 559.4,433.0 559.1,430.8 558.7,428.7 560.3,427.8 562.0,427.0 563.5,426.0 565.0,425.0 565.4,422.9 566.2,421.0 566.9,419.0 567.5,417.0 569.3,415.8 570.6,414.1 571.6,412.1 572.0,410.0 572.1,408.7 572.2,407.4 572.4,406.1 572.9,405.0 573.3,403.7 573.7,402.5 573.9,401.3 574.2,400.0 574.3,398.8 574.4,397.5 574.6,396.2 574.8,395.0 575.5,393.9 575.7,392.6 576.1,391.3 576.0,390.0 575.5,388.6 575.0,387.3 574.5,385.9 573.9,384.5 573.4,383.1 573.1,381.7 573.2,380.2 573.0,378.7 572.6,377.3 571.9,376.1 571.3,374.7 570.9,373.3 570.6,371.8 570.0,370.5 570.0,369.0" fill="#6cb0f7" stroke="#8a8a8a" stroke-width="0.7" stroke-linejoin="round"/>
<polygon points="520.3,382.9 522.1,382.4 524.0,381.9 525.8,381.6 527.5,380.8 529.5,380.8 531.3,380.4 533.1,379.8 535.0,379.4 536.8,379.1 538.7,378.8 540.6,378.3 542.5,378.3 544.0,377.2 545.7,376.2 547.7,376.3 549.5,375.5 550.8,374.9 552.1,374.7 553.4,374.2 554.8,373.9 556.2,373.7 557.3,372.9 558.6,372.4 559.8,371.7 561.2,371.5 562.5,371.2 563.9,371.1 565.2,370.6 566.5,370.0 567.8,369.4 568.8,368.4 569.9,367.5 570.0,367.5 571.6,368.5 573.2,369.7 574.4,371.2 575.4,372.8 576.3,374.6 577.4,376.1 578.8,377.5 580.2,378.8 581.0,380.4 582.1,381.9 583.0,383.5 584.4,384.7 584.9,386.9 585.8,389.0 586.4,391.2 587.1,393.3 586.3,395.0 586.0,396.8 586.0,398.7 586.1,400.5 585.6,402.3 584.8,403.9 584.5,405.8 583.4,407.3 582.4,408.3 581.3,409.3 580.9,410.6 580.5,412.0 579.7,413.1 578.8,414.2 578.4,415.6 578.0,416.9 576.8,419.0 574.8,420.2 575.8,422.2 576.0,424.4 575.9,426.5 575.9,428.7 575.5,430.6 574.7,432.4 575.0,434.3 574.8,436.3 574.0,435.2 572.8,434.5 572.1,433.3 571.3,432.2 570.6,431.1 569.7,430.0 568.6,429.2 567.3,428.7 565.5,427.7 563.5,427.2 561.6,426.3 559.7,425.5 559.3,423.4 559.6,421.4 559.3,419.3 558.6,417.4 557.9,415.4 557.9,413.3 557.3,411.3 556.5,409.4 556.3,407.8 555.8,406.2 556.0,404.5 556.1,402.8 555.5,401.3 555.2,399.7 555.2,398.0 554.4,396.5 552.2,396.0 550.6,396.5 549.1,397.0 547.4,397.3 545.8,397.3 544.2,396.9 542.6,396.7 540.9,396.7 539.3,396.5 538.6,397.7 538.0,398.8 537.2,400.0 536.1,400.8 537.1,402.5 538.3,404.0 536.4,403.9 534.5,403.5 532.6,403.4 530.7,403.0 528.5,402.7 526.4,401.9 525.8,399.5 524.8,397.2 523.8,394.9 522.9,392.6 522.2,390.2 521.2,388.0 520.6,385.5 519.9,383.2" fill="#0a60c8" stroke="#8a8a8a" stroke-width="0.7" stroke-linejoin="round"/>
<polygon points="594.6,357.6 596.4,356.4 598.2,355.3 599.9,354.0 601.5,352.7 603.5,354.2 605.4,355.7 606.4,356.9 606.7,358.3 607.5,359.6 607.9,361.0 608.6,362.3 609.3,363.6 609.9,365.0 610.3,366.4 610.8,368.0 611.5,369.4 612.5,370.8 613.2,372.3 611.9,373.3 610.3,373.9 608.9,374.8 607.3,375.2 606.0,374.6 604.8,374.0 603.7,373.0 602.5,372.3 601.0,370.4 599.5,368.4 599.3,365.9 599.5,363.5 598.4,362.0 597.1,360.5 595.8,359.1" fill="#0a60c8" stroke="#8a8a8a" stroke-width="0.7" stroke-linejoin="round"/>
<polygon points="592.4,341.3 594.0,340.2 595.1,338.6 596.6,337.4 597.6,335.8 598.7,334.2 599.7,332.6 600.6,331.0 601.6,329.4 603.1,327.6 605.0,326.1 606.6,324.4 608.4,322.9 610.3,321.5 612.1,319.8 613.5,318.0 614.6,315.8 616.0,316.1 617.4,316.5 618.8,316.9 620.2,317.2 621.5,317.9 622.8,318.6 624.2,318.9 625.4,319.7 626.7,320.1 628.0,320.6 629.2,321.2 630.4,321.8 631.8,322.2 633.1,322.6 634.4,322.8 635.7,323.3 637.1,323.3 638.5,323.1 639.9,323.1 641.3,322.8 642.7,322.4 644.0,322.0 645.5,321.8 646.9,321.7 647.7,324.0 648.2,326.5 647.9,328.9 647.5,331.4 648.3,333.7 648.2,336.2 648.7,338.6 648.4,341.0 647.8,342.7 647.1,344.3 646.4,345.9 645.9,347.6 645.4,349.4 645.0,351.1 645.0,352.9 645.4,354.7 644.5,356.6 643.7,358.5 643.4,360.6 642.5,362.5 641.4,363.3 640.3,364.0 639.0,364.4 637.8,365.0 636.9,366.0 635.7,366.6 634.7,367.5 633.7,368.4 632.4,366.3 631.1,364.2 630.2,363.3 629.2,362.6 628.1,362.0 626.9,361.5 625.5,361.4 624.1,361.0 622.8,360.4 621.6,359.7 620.2,359.4 618.9,359.1 617.5,358.9 616.1,358.6 615.0,357.7 613.6,357.3 612.3,356.8 610.9,356.5 609.5,356.7 608.1,356.4 606.7,356.2 605.4,355.7 603.5,354.2 601.5,352.7 600.4,351.3 599.2,349.8 598.2,348.3 597.3,346.8 596.0,345.4 594.8,344.1 593.6,342.7" fill="#c7e1f9" stroke="#8a8a8a" stroke-width="0.7" stroke-linejoin="round"/>
<polygon points="645.4,356.2 647.0,357.2 648.7,358.0 650.0,359.4 651.5,360.5 653.2,361.4 655.2,361.5 656.7,362.7 658.1,364.0 659.4,363.5 660.6,363.1 661.7,362.3 663.0,361.9 664.3,361.2 665.4,360.4 666.2,359.3 666.9,358.1 668.6,358.7 670.0,359.8 671.6,360.6 672.9,361.8 674.5,362.6 676.0,363.5 677.4,364.6 678.6,365.9 679.7,367.4 681.0,368.6 682.2,370.1 683.0,371.7 684.1,373.2 685.2,374.8 686.8,375.7 688.4,376.7 686.8,378.0 685.2,379.3 683.9,381.0 682.5,382.5 681.1,383.3 680.0,384.3 678.4,384.4 676.9,385.1 675.4,384.8 673.8,384.6 672.4,385.3 670.8,385.5 669.0,384.2 667.1,383.2 665.0,382.5 663.0,381.6 661.7,380.1 660.1,379.1 658.3,378.3 656.8,377.1 655.1,376.1 653.7,374.8 652.6,373.2 651.2,371.8 650.0,371.1 649.2,369.9 648.2,369.0 647.5,367.8 646.5,366.8 645.4,365.9 644.4,364.9 643.4,364.0 644.3,362.2 645.1,360.3 644.8,358.2" fill="#0a60c8" stroke="#8a8a8a" stroke-width="0.7" stroke-linejoin="round"/>
<polygon points="642.5,387.4 644.0,387.1 645.5,386.8 647.1,386.6 648.6,386.8 650.1,386.5 651.6,386.4 653.2,386.5 654.7,386.3 656.2,386.2 657.8,386.0 659.3,386.0 660.8,386.4 662.4,386.7 663.9,386.7 665.4,386.9 666.9,387.4 668.0,388.5 669.0,389.7 669.9,391.0 671.1,392.1 671.9,393.4 673.0,394.5 673.8,395.9 674.7,397.2 675.4,399.1 676.4,400.9 676.7,402.9 676.7,404.9 676.2,406.8 676.1,408.8 676.6,410.8 676.6,412.8 677.5,414.1 678.1,415.5 678.2,417.1 678.8,418.6 679.3,420.1 680.1,421.4 680.4,422.9 680.5,424.5 680.6,426.0 680.1,427.5 680.2,429.0 680.1,430.5 679.6,431.9 678.9,433.2 679.0,434.8 678.6,436.2 678.5,438.0 678.4,439.7 678.5,441.4 678.2,443.1 678.2,444.8 677.8,446.5 677.6,448.2 677.5,449.9 677.7,451.6 677.6,453.4 677.9,455.1 678.2,456.7 677.8,458.5 678.0,460.2 678.1,461.9 678.6,463.6 676.6,464.0 674.6,464.7 672.7,465.5 670.8,466.5 670.3,464.6 669.5,462.8 668.8,460.9 668.1,459.1 667.7,457.1 667.0,455.3 665.9,453.6 664.9,451.9 664.0,452.9 663.1,454.0 661.9,454.8 661.0,455.8 659.3,457.0 657.8,458.4 656.4,460.0 655.2,461.6 654.1,460.7 653.4,459.5 652.6,458.4 651.5,457.4 650.7,456.3 649.6,455.4 648.3,454.8 647.3,453.8 645.9,453.1 644.5,452.4 642.9,452.4 641.4,452.1 640.0,451.4 638.4,451.1 637.1,450.2 635.6,449.9 636.4,447.8 637.9,446.2 638.7,444.2 639.5,442.1 642.0,442.1 644.5,442.2 645.6,441.6 646.8,441.2 648.0,441.0 649.3,441.1 650.5,440.0 652.0,439.4 653.6,439.0 655.1,438.5 656.6,437.9 658.0,437.4 659.5,436.6 661.0,436.2 659.4,434.6 658.0,432.8 656.9,430.8 656.0,428.7 654.6,426.8 652.7,425.6 650.8,424.3 649.3,422.6 648.4,420.9 647.9,419.1 647.4,417.3 647.2,415.4 646.7,413.5 645.9,411.8 644.4,410.6 643.4,408.9 643.5,407.5 643.7,406.2 643.8,404.9 643.9,403.5 644.2,402.2 644.4,400.8 644.1,399.5 643.8,398.1 643.8,396.8 643.9,395.4 643.8,394.0 643.7,392.7 643.5,391.3 643.5,390.0 643.0,388.7" fill="#0a60c8" stroke="#8a8a8a" stroke-width="0.7" stroke-linejoin="round"/>
<polygon points="707.9,331.8 709.1,331.2 710.4,330.6 711.5,329.8 712.3,328.6 713.4,327.9 714.7,327.5 716.0,327.0 717.2,326.5 718.4,325.7 719.5,325.0 720.6,324.3 721.9,323.7 723.2,323.3 724.5,323.2 725.8,322.7 727.0,322.2 728.1,323.1 728.9,324.2 731.0,324.7 733.0,325.3 735.1,325.1 737.2,324.8 739.6,324.9 742.1,324.9 744.5,324.8 747.0,324.9 749.4,325.1 751.8,325.3 754.3,325.1 756.7,324.8 758.1,325.3 759.6,325.7 760.9,326.4 762.3,327.0 763.8,327.2 765.3,327.8 766.7,328.3 768.0,329.0 769.7,330.8 770.9,332.9 772.3,334.9 773.6,336.9 772.3,337.4 771.1,338.0 769.8,338.6 768.7,339.5 767.5,340.2 766.5,341.1 765.2,341.7 764.1,342.5 763.0,343.4 761.7,343.9 760.6,344.6 759.4,345.4 758.3,346.2 757.3,347.3 756.1,347.8 754.8,348.4 754.1,349.8 753.1,351.1 753.1,352.6 752.8,354.2 752.9,355.8 753.2,357.4 753.4,359.1 753.8,360.7 754.6,362.1 754.8,363.7 755.4,365.3 755.7,366.9 754.2,368.1 752.7,369.3 751.0,370.3 749.6,371.5 748.1,372.9 746.8,374.2 745.9,376.0 745.0,377.7 744.4,376.2 743.6,374.7 743.1,373.1 742.5,371.6 741.7,370.1 740.7,368.8 739.9,367.3 739.1,365.9 737.9,364.7 736.4,363.7 735.4,362.3 734.2,361.1 732.7,360.2 731.8,358.6 730.5,357.6 729.4,356.2 728.5,354.7 727.8,353.1 726.6,351.8 725.6,350.3 724.6,348.8 723.4,347.5 722.6,346.0 721.6,344.5 720.1,342.8 719.0,340.9 718.0,338.8 717.7,336.6 716.2,336.6 714.8,336.4 713.3,336.7 711.8,336.6 711.3,335.0 710.0,334.1 709.1,332.8" fill="#6cb0f7" stroke="#8a8a8a" stroke-width="0.7" stroke-linejoin="round"/>
<polygon points="626.9,457.6 628.2,457.0 629.3,456.1 630.6,455.5 632.0,455.1 632.9,454.0 634.3,453.3 635.3,452.4 636.6,451.7 638.1,451.3 639.5,451.5 641.0,451.6 642.5,451.7 644.1,451.9 645.6,452.4 646.9,453.1 648.4,453.7 649.5,454.8 650.5,456.0 651.7,457.0 653.1,457.8 654.3,458.8 655.5,459.8 656.8,460.6 658.1,461.5 659.6,463.1 660.4,465.2 661.1,467.3 662.0,469.3 661.3,470.6 661.1,472.1 661.1,473.6 661.0,475.1 660.9,476.6 660.9,478.1 660.6,479.6 660.1,481.0 659.2,482.3 658.2,483.5 657.0,484.5 656.1,485.9 655.7,487.4 654.7,488.7 653.6,489.8 652.3,490.8 651.5,489.6 650.8,488.4 650.1,487.1 649.4,485.9 648.7,484.6 647.7,483.6 646.9,482.4 646.4,481.0 644.4,480.7 642.4,481.0 640.5,480.6 638.6,480.2 636.7,479.7 634.8,479.1 632.8,479.4 630.8,479.1 629.8,478.2 628.8,477.2 627.9,476.1 626.9,475.2 626.0,474.1 625.0,473.2 624.1,472.1 623.0,471.2 623.1,469.5 623.8,467.8 624.6,466.2 624.8,464.4 625.8,462.9 626.6,461.2 626.6,459.4" fill="#c7e1f9" stroke="#8a8a8a" stroke-width="0.7" stroke-linejoin="round"/>
<polygon points="658.1,461.5 658.9,460.3 659.7,459.1 660.4,457.9 661.1,456.7 661.8,455.4 662.5,454.1 663.0,452.8 664.0,451.7 665.3,453.5 665.9,455.7 666.8,457.7 667.1,459.9 668.5,461.6 669.8,463.4 670.9,465.3 671.8,467.3 673.1,467.0 674.3,466.6 675.5,465.8 676.7,465.4 678.0,465.0 679.1,464.3 680.3,463.8 681.6,463.4 682.7,461.9 684.3,461.1 685.7,460.0 687.0,458.7 688.7,458.3 690.2,457.2 691.8,456.4 693.4,455.8 694.6,454.4 696.0,453.2 697.7,452.6 699.3,451.9 700.8,451.0 702.2,450.0 703.7,448.9 705.0,447.8 706.2,449.7 706.7,451.9 707.7,453.8 709.1,455.5 710.1,457.4 711.4,459.2 712.1,461.3 712.8,463.4 713.6,465.2 714.1,467.2 715.0,468.9 715.9,470.7 717.3,472.1 718.4,473.8 719.7,475.3 720.6,477.1 722.3,478.6 724.2,479.6 726.4,480.2 728.1,481.7 730.2,482.4 732.2,483.2 734.2,484.1 736.2,484.9 737.7,485.4 739.1,485.7 740.6,486.0 742.1,485.8 743.6,486.0 745.1,485.5 746.5,485.0 748.0,484.9 748.9,486.9 750.2,488.7 751.0,490.7 751.9,492.7 751.0,494.5 750.1,496.4 750.0,498.4 749.5,500.4 749.2,502.5 749.2,504.5 748.5,506.4 748.0,508.4 747.4,509.9 746.8,511.4 745.9,512.8 745.4,514.4 745.0,516.0 745.0,517.6 745.2,519.3 744.9,520.9 745.2,522.5 745.3,524.1 745.1,525.7 744.8,527.4 744.5,528.9 744.2,530.5 744.2,532.1 744.0,533.8 743.7,535.2 743.5,536.7 743.0,538.1 742.5,539.5 742.4,541.0 742.4,542.5 742.5,544.0 742.8,545.5 742.9,546.9 742.9,548.4 742.6,549.9 742.7,551.3 742.4,552.8 742.1,554.2 741.8,555.7 742.1,557.2 741.3,559.2 740.1,561.1 739.8,563.2 739.3,565.3 738.7,567.4 738.6,569.5 738.3,571.7 738.2,573.8 737.8,572.4 737.4,571.1 736.9,569.7 736.5,568.4 736.0,567.0 735.2,565.8 734.5,564.5 734.3,563.1 733.9,561.7 733.2,560.4 732.6,559.1 732.1,557.7 731.1,556.7 730.3,555.5 729.3,554.4 728.4,553.3 727.1,551.8 726.1,550.0 724.5,548.8 722.9,547.6 721.6,546.0 720.4,544.5 718.9,543.1 717.4,541.7 716.0,540.3 714.6,538.9 713.2,537.4 711.3,536.6 710.0,535.1 708.5,533.8 706.7,532.9 705.0,531.8 703.8,530.9 702.7,530.0 701.6,529.0 700.6,527.9 699.7,526.6 698.6,525.7 697.7,524.6 696.7,523.5 695.8,522.3 694.8,521.2 693.9,520.0 693.2,518.7 692.3,517.5 691.2,516.5 690.1,515.5 689.4,514.2 689.1,512.7 688.8,511.1 688.8,509.5 688.5,508.0 687.6,506.7 686.5,505.5 686.1,504.0 685.5,502.5 684.0,501.9 682.5,501.8 681.1,501.0 679.6,500.5 678.2,500.1 676.7,499.7 675.2,499.2 673.8,498.6 673.5,497.1 673.3,495.7 672.8,494.2 672.7,492.8 672.6,491.2 671.6,489.9 671.6,488.4 671.8,486.9 669.4,486.8 666.9,486.8 664.4,486.8 662.0,486.9 661.5,485.4 661.3,483.9 660.9,482.4 660.1,481.0 660.6,479.6 660.9,478.1 660.9,476.6 661.0,475.1 661.1,473.6 661.1,472.1 661.3,470.6 662.0,469.3 661.1,467.3 660.4,465.2 659.6,463.1" fill="#e2f1fd" stroke="#8a8a8a" stroke-width="0.7" stroke-linejoin="round"/>
<polygon points="660.1,486.9 661.5,486.4 663.0,486.3 664.5,486.3 666.0,486.4 667.4,486.7 668.9,486.9 670.3,487.0 671.8,486.9 671.6,488.4 671.6,489.9 672.6,491.2 672.7,492.8 672.8,494.2 673.3,495.7 673.5,497.1 673.8,498.6 675.2,499.2 676.7,499.7 678.2,500.1 679.6,500.5 681.1,501.0 682.5,501.8 684.0,501.9 685.5,502.5 686.5,504.5 687.7,506.3 689.2,507.9 690.4,509.8 691.1,511.9 691.5,514.1 692.2,516.2 693.3,518.1 694.1,519.5 694.9,520.8 695.8,522.2 697.1,523.1 698.1,524.3 698.8,525.7 699.9,526.8 701.1,527.9 702.9,529.2 704.5,530.6 705.8,532.4 707.5,533.8 709.2,535.2 711.1,536.4 712.9,537.6 715.0,538.3 716.9,539.4 718.5,540.9 720.2,542.3 721.9,543.7 723.6,545.0 724.9,546.8 726.6,548.1 728.4,549.4 728.9,551.0 729.6,552.5 730.4,553.9 731.3,555.3 732.5,556.5 733.5,557.9 734.0,559.5 734.3,561.2 735.3,562.6 735.9,564.1 736.4,565.7 737.2,567.2 737.7,568.8 737.9,570.5 737.8,572.2 738.2,573.8 736.3,574.1 734.4,574.5 732.6,575.2 730.7,575.7 728.9,576.1 727.0,576.7 725.1,576.7 723.2,577.0 721.3,577.4 719.3,577.3 717.4,577.4 715.4,577.3 713.6,577.8 711.7,578.2 709.8,578.6 708.0,579.4 706.1,579.5 704.1,579.8 702.4,580.6 700.5,581.1 698.6,581.5 696.7,581.7 694.8,582.1 693.0,582.8 691.0,583.0 689.1,583.0 687.2,583.7 685.4,584.4 683.4,584.5 681.6,583.9 679.7,584.4 677.7,584.5 675.3,584.3 672.9,584.5 670.7,585.4 668.7,586.7 666.4,587.2 664.3,588.2 662.0,588.7 659.8,589.3 657.5,590.0 655.4,591.1 653.1,591.4 650.8,592.1 649.0,593.6 646.8,594.5 644.9,595.9 642.5,596.2 641.2,595.0 640.0,593.7 639.3,592.1 638.0,590.8 637.0,589.3 636.2,587.7 635.6,586.1 634.7,584.5 634.8,582.0 635.0,579.5 635.9,577.2 636.6,574.8 634.2,575.6 631.8,576.0 629.4,576.6 626.9,576.7 624.9,576.1 622.8,575.7 620.8,575.0 619.1,573.9 617.0,573.3 615.1,572.4 613.3,571.5 611.2,570.9 609.7,570.1 608.3,569.0 606.9,568.0 605.6,566.8 604.6,565.3 603.5,564.0 602.5,562.5 601.5,561.1 603.0,559.2 604.5,557.3 606.1,555.4 607.3,553.3 609.3,552.3 611.0,550.7 613.0,550.0 615.2,549.4 615.1,547.7 614.9,546.0 614.7,544.3 614.6,542.6 614.3,540.9 614.2,539.1 614.1,537.4 614.2,535.7 615.8,535.2 617.4,534.8 619.0,534.2 620.5,533.4 621.9,532.5 623.5,532.1 625.2,531.8 626.9,531.8 628.5,533.4 630.2,534.8 632.2,535.6 634.3,536.5 636.2,537.7 638.1,538.7 640.3,539.4 642.5,539.6 642.1,537.1 642.6,534.7 642.6,532.2 642.5,529.8 642.0,528.3 641.2,527.0 640.4,525.6 639.5,524.3 639.5,522.7 639.3,521.2 639.1,519.6 638.6,518.1 640.1,516.9 641.5,515.7 642.7,514.1 644.0,512.7 645.6,511.7 647.3,510.8 648.8,509.6 650.3,508.4 652.3,508.6 654.4,508.4 656.4,508.1 658.4,507.5 660.2,506.6 661.9,505.5 663.8,504.6 665.9,504.5 664.8,502.9 664.3,501.1 663.8,499.3 663.6,497.4 663.3,495.5 662.6,493.7 661.6,492.1 660.1,490.8 660.5,488.9" fill="#c7e1f9" stroke="#8a8a8a" stroke-width="0.7" stroke-linejoin="round"/>
<polygon points="597.6,586.5 598.7,585.8 599.8,585.0 600.7,583.9 601.5,582.9 602.6,582.2 603.8,581.5 605.0,580.9 606.1,580.2 607.3,579.6 608.4,578.9 609.6,578.4 610.9,577.8 612.0,577.1 612.9,576.2 614.0,575.5 615.2,574.8 616.6,575.5 618.0,575.7 619.5,575.8 621.0,575.9 622.5,575.9 624.0,576.2 625.4,576.5 626.9,576.7 629.4,576.6 631.8,576.0 634.2,575.6 636.6,574.8 635.9,577.2 635.0,579.5 634.8,582.0 634.7,584.5 635.6,586.1 636.2,587.7 637.0,589.3 638.0,590.8 639.3,592.1 640.0,593.7 641.2,595.0 642.5,596.2 641.1,597.2 639.6,598.2 638.2,599.1 636.8,600.2 635.2,600.8 633.6,601.3 631.9,601.9 630.2,602.1 629.0,603.3 627.8,604.7 626.6,605.8 625.2,606.9 623.7,607.8 622.2,608.6 620.6,609.3 619.0,609.9 617.5,610.7 615.9,611.3 614.6,612.4 613.6,613.8 612.0,614.2 610.4,614.4 608.9,615.3 607.3,615.8 607.0,613.7 606.6,611.7 605.7,609.7 605.3,607.7 604.2,605.9 603.3,604.0 602.3,602.1 601.5,600.2 601.1,598.5 600.4,596.8 599.6,595.2 599.5,593.4 599.0,591.7 598.2,590.0 597.8,588.3" fill="#e2f1fd" stroke="#8a8a8a" stroke-width="0.7" stroke-linejoin="round"/>
<polygon points="954.2,265.4 955.6,264.1 957.0,262.8 958.6,261.6 959.7,260.1 961.5,259.2 963.3,258.5 965.0,257.5 966.6,256.5 968.7,255.5 970.5,253.9 972.4,252.5 974.1,250.9 975.6,249.1 977.1,247.3 978.9,245.7 980.2,243.8 981.4,242.5 982.6,241.1 984.1,240.3 985.6,239.3 987.0,238.2 988.2,236.9 989.8,236.1 991.3,235.1 993.4,235.2 995.5,235.1 997.6,235.1 999.7,234.7 1001.8,234.5 1003.9,234.0 1005.9,233.4 1008.0,233.1 1009.8,234.2 1011.9,234.6 1013.6,235.7 1015.1,237.1 1017.2,237.7 1018.8,239.0 1020.4,240.3 1021.7,241.9 1023.5,243.2 1025.4,244.2 1027.5,244.9 1029.6,245.6 1031.4,247.0 1033.3,248.0 1035.3,248.8 1037.3,249.7 1039.6,250.2 1041.9,250.7 1044.2,250.9 1046.5,251.2 1048.8,251.6 1051.1,252.0 1053.3,253.0 1055.7,252.9 1055.9,254.1 1056.5,255.3 1056.6,256.6 1056.7,257.8 1056.5,259.1 1056.3,260.3 1056.0,261.6 1055.7,262.8 1053.3,262.8 1051.0,263.5 1048.6,264.1 1046.4,265.1 1044.3,266.2 1042.1,267.1 1039.7,267.3 1037.3,267.9 1036.2,268.8 1035.0,269.4 1033.7,270.1 1032.3,270.5 1031.1,271.1 1029.7,271.3 1028.3,271.6 1026.9,271.9 1025.6,274.0 1024.6,276.2 1023.1,278.2 1021.9,280.3 1021.3,282.1 1020.9,283.8 1019.6,285.2 1019.0,286.9 1018.7,288.7 1018.9,290.5 1018.5,292.3 1018.0,294.0 1017.0,295.7 1015.8,297.2 1017.1,296.8 1018.5,296.6 1019.8,296.4 1021.0,295.8 1021.7,297.3 1022.6,298.6 1023.3,300.1 1024.2,301.5 1023.1,303.0 1022.3,304.8 1021.1,306.3 1019.9,307.7 1019.0,309.1 1018.2,310.5 1017.9,312.2 1017.3,313.7 1016.5,315.2 1016.0,316.7 1015.4,318.3 1014.8,319.8 1013.9,321.2 1013.1,322.6 1012.2,324.0 1011.5,325.4 1010.8,327.0 1009.6,328.1 1008.8,329.6 1008.2,331.1 1007.4,332.4 1006.7,333.8 1005.9,335.1 1005.2,336.5 1004.6,337.9 1003.5,339.0 1003.2,340.6 1002.4,341.9 1001.5,343.2 1000.5,344.4 999.5,345.5 998.5,346.7 998.0,348.2 997.5,349.7 996.9,351.1 996.5,352.6 996.2,354.0 995.6,355.2 994.8,356.4 993.9,357.4 993.6,358.8 992.8,359.9 991.9,361.1 991.8,362.5 991.2,363.7 990.6,364.9 989.9,366.1 989.5,367.4 988.7,368.6 988.0,369.7 987.5,371.0 986.7,372.1 986.0,373.3 985.1,374.5 984.5,375.7 983.6,376.9 983.1,378.3 982.4,379.5 981.4,380.5 980.3,381.5 979.6,382.8 978.8,383.9 977.9,385.0 977.4,386.4 976.5,387.5 975.7,388.6 974.9,389.8 974.1,391.0 972.0,390.1 969.9,388.9 967.7,388.2 965.5,387.5 963.4,386.4 961.6,384.9 959.7,383.5 957.7,382.3 956.7,381.4 955.4,381.0 954.1,380.7 952.8,380.2 951.5,380.0 950.2,379.7 949.1,379.0 947.9,378.4 946.7,377.9 945.5,377.5 944.5,376.8 943.4,376.3 942.4,375.4 941.3,374.8 940.3,374.1 939.1,373.6 939.6,372.0 940.3,370.6 941.0,369.1 941.6,367.6 942.8,366.5 944.1,365.5 944.7,363.9 945.9,362.8 946.9,361.8 948.0,360.9 949.0,360.0 950.0,359.1 950.7,357.9 951.5,356.7 952.7,355.9 953.8,355.0 954.7,353.9 955.5,352.7 956.5,351.7 957.5,350.6 958.3,349.4 958.8,348.0 959.2,346.6 959.6,345.2 960.6,343.6 961.6,342.1 962.6,340.4 963.4,338.8 964.1,337.0 964.0,335.1 964.8,333.3 965.5,331.6 966.0,329.6 966.7,327.7 967.1,325.7 967.3,323.7 967.6,321.7 968.0,319.7 968.7,317.8 969.4,315.9 969.9,313.5 970.6,311.1 970.8,308.6 971.3,306.2 971.1,304.4 971.5,302.7 971.7,301.0 972.2,299.3 972.4,297.6 972.6,295.9 973.0,294.2 973.3,292.5 972.8,291.3 972.3,290.2 971.9,289.0 971.5,287.8 971.5,286.5 971.6,285.2 971.4,284.0 971.3,282.7 970.3,281.5 969.0,280.6 967.7,279.7 966.5,278.8 965.4,277.6 964.3,276.5 962.9,275.8 961.6,274.9 960.8,273.6 960.0,272.4 959.2,271.1 958.2,269.9 957.1,268.8 956.3,267.6 955.3,266.4" fill="#6cb0f7" stroke="#8a8a8a" stroke-width="0.7" stroke-linejoin="round"/>
<polygon points="669.8,522.0 670.9,521.3 671.9,520.6 673.1,520.2 674.2,519.8 675.9,517.9 677.7,516.2 678.9,518.0 679.9,519.9 681.7,520.9 683.5,522.1 684.5,524.0 686.2,525.2 688.0,526.3 689.4,527.9 690.7,529.1 692.2,530.0 693.7,531.0 695.0,532.2 696.7,532.8 698.3,533.4 699.8,534.5 701.1,535.7 702.0,536.6 703.0,537.5 704.0,538.4 705.0,539.2 705.9,540.2 706.7,541.2 707.3,542.4 708.2,543.4 709.1,544.3 710.0,545.3 711.0,546.1 712.0,547.0 713.2,547.7 714.2,548.5 715.6,548.7 716.7,549.4 718.0,550.6 719.2,551.9 720.4,553.1 721.7,554.2 723.0,555.4 724.3,556.6 725.0,558.3 726.1,559.6 727.4,560.9 728.3,562.3 729.6,563.7 730.0,565.4 731.2,566.7 732.4,568.0 733.4,569.4 734.3,570.9 732.0,570.5 729.7,569.9 727.5,569.4 725.2,569.0 723.0,568.2 720.9,567.0 718.6,566.5 716.7,565.0 714.8,564.5 713.0,563.9 711.3,562.9 709.4,562.6 708.1,561.1 706.5,559.9 704.8,558.9 703.0,558.2 701.4,557.1 699.6,556.3 697.7,556.1 695.9,555.4 694.4,554.1 692.6,553.3 690.9,552.5 689.4,551.3 688.2,549.6 686.8,548.0 685.5,546.4 684.3,544.7 682.7,543.4 680.9,542.3 679.2,541.1 677.7,539.6 676.7,538.3 676.0,536.9 675.0,535.7 674.0,534.5 673.0,533.2 672.0,532.0 670.8,531.0 669.8,529.8 670.2,527.9 670.3,525.9 669.9,524.0" fill="#fff" stroke="#8a8a8a" stroke-width="0.7"/>
<path d="M258.3,408.7 L258.2,408.7 M258.2,408.7 L258.2,408.7 M798.0,844.2 L797.3,845.8 M797.3,845.8 L793.7,846.3 L790.1,845.5 L786.6,846.4 L783.0,846.8 M339.8,933.1 L337.2,934.9 L335.6,937.6 L333.2,939.6 L330.4,940.8 L330.8,943.8 L330.5,946.9 L330.4,950.1 L331.8,952.9 L331.3,955.5 L330.4,958.1 L330.6,960.8 L330.7,963.5 L330.4,966.3 L330.4,969.0 L331.2,971.7 L332.4,974.1 M339.8,933.1 L336.5,935.1 L333.4,937.4 L329.6,936.7 L325.8,935.8 L322.2,935.7 L319.0,933.8 L315.5,933.4 L311.9,932.8 L308.7,931.3 L305.2,930.7 L302.0,929.3 L298.9,927.7 L296.7,924.8 L294.2,922.0 L290.4,921.9 L287.3,919.8 M281.5,963.6 L279.5,961.3 M279.5,961.3 L279.5,958.6 L280.6,956.1 L280.9,953.4 L282.2,951.0 L283.6,948.4 L282.7,945.7 L281.5,943.1 L282.2,940.3 L282.9,937.6 L282.1,934.9 L283.1,932.2 L282.3,929.5 L283.3,926.9 L284.6,924.5 L285.8,922.1 L287.3,919.8 M279.5,961.3 L277.0,960.7 L274.6,961.8 L272.4,962.8 L270.3,964.0 M218.0,970.7 L215.1,968.4 L213.8,964.9 L212.7,961.4 L210.0,958.8 M210.0,958.8 L205.8,959.0 L201.6,958.8 L197.3,958.6 L193.3,956.9 L190.2,954.1 L186.4,952.1 L182.8,950.0 L179.5,947.4 M176.6,948.5 L179.5,947.4 M339.8,933.1 L341.6,931.5 L343.7,930.1 L344.7,927.9 L346.1,925.9 L348.8,926.0 L350.6,923.9 L353.0,923.6 L355.4,924.0 M355.4,924.0 L357.7,924.5 L360.0,924.7 M355.4,924.0 L354.3,920.9 L353.1,917.9 L353.8,914.7 L354.3,911.5 L353.1,908.6 L351.3,906.0 L351.3,902.7 L349.3,900.0 M643.0,615.3 L644.6,613.4 L646.7,612.1 L649.1,612.1 L651.5,612.4 L654.0,613.0 L656.0,614.5 L658.3,613.3 L660.5,612.3 L662.1,610.5 L664.2,609.5 L666.5,609.1 L668.5,607.9 L670.9,608.5 L673.2,609.2 L675.4,608.2 L677.6,607.2 M664.9,640.0 L668.8,638.9 L671.8,636.2 M677.6,607.2 L677.2,611.0 L676.1,614.6 L673.3,617.4 L672.5,621.2 L670.6,624.7 L670.4,628.6 L671.1,632.4 L671.8,636.2 M681.0,602.3 L680.0,600.0 L678.7,597.9 L676.9,595.7 L674.1,596.1 L673.1,593.9 L671.4,592.3 L669.3,591.2 L668.0,589.1 M681.0,602.3 L678.8,604.4 L677.6,607.2 M674.4,640.0 L672.6,638.4 L671.8,636.2 M681.0,602.3 L683.1,601.3 L685.4,600.8 L687.7,600.6 L690.0,600.3 M797.3,845.8 L800.8,848.5 L803.6,852.0 L803.0,854.2 L803.3,856.5 L804.6,858.4 L805.2,860.6 M805.2,860.6 L803.1,862.9 L803.1,866.0 L803.5,868.9 L804.1,871.8 L802.2,874.0 L801.1,876.7 L799.1,878.8 L796.4,880.0 M106.9,916.0 L108.2,914.0 L109.1,911.8 L110.0,909.6 L110.4,907.2 L111.5,905.0 L113.7,903.9 L115.4,902.2 L116.4,900.0 M106.9,916.0 L104.6,915.4 L102.1,915.5 L99.8,915.7 L97.4,915.6 M179.5,947.4 L181.7,944.6 L183.7,941.6 L186.9,939.8 L189.0,936.8 L189.7,933.3 L190.8,929.9 L192.0,926.5 L193.9,923.5 L192.8,920.0 L192.2,916.4 L189.5,913.4 L190.1,909.4 L186.9,907.5 L184.6,904.6 L181.6,902.5 L178.9,900.0 M110.9,922.4 L109.3,919.0 L106.9,916.0 M258.2,408.7 L258.3,404.2 L255.9,400.5 M400.0,416.1 L402.2,418.5 L402.9,421.7 L404.0,424.7 L403.1,427.9 L402.8,430.9 L403.1,434.0 L403.1,437.0 L403.9,440.0 M645.7,500.2 L643.0,499.8 M645.7,500.2 L647.4,504.2 L650.9,506.9 M658.8,490.4 L654.3,490.7 L650.9,493.5 L648.1,496.7 L645.7,500.2 M679.9,441.6 L680.0,441.6 M292.0,900.0 L293.5,902.4 L291.8,904.7 L291.7,907.0 L291.7,909.3 L290.0,911.0 L287.9,912.0 L286.1,913.6 L284.5,915.3 M284.5,915.3 L282.0,915.6 L279.6,916.4 L277.1,916.0 L274.7,914.8 L272.5,913.7 L270.0,913.6 L268.1,911.8 L265.7,911.1 L263.3,910.6 L261.1,909.4 L258.8,908.8 L256.7,907.5 L254.1,908.0 L251.9,906.5 L249.5,906.3 L247.2,905.3 M247.2,905.3 L246.0,902.4 L244.1,900.0 M287.3,919.8 L285.1,918.0 L284.5,915.3 M210.0,958.8 L211.2,956.7 L212.9,955.0 L215.4,954.3 L217.8,955.1 L220.7,951.8 L224.9,950.3 L228.2,947.3 L229.6,943.1 L231.6,939.3 L233.6,935.5 L234.3,933.2 L235.8,931.2 L238.1,930.5 L240.3,929.5 L238.0,927.6 L239.1,924.9 L240.4,922.9 L240.8,920.6 L242.8,916.9 L244.5,913.1 L246.9,909.5 L247.2,905.3 M1171.7,60.1 L1168.8,60.4 L1166.1,59.6 M1171.7,161.2 L1169.2,161.8 L1166.6,162.0 M1166.6,162.0 L1166.3,161.8 M1167.7,186.5 L1169.9,187.7 L1171.7,189.4 M1167.7,186.5 L1166.7,183.5 L1166.1,180.5 L1165.5,177.4 L1165.5,174.3 L1165.6,171.2 L1166.8,168.3 L1166.9,165.1 L1166.6,162.0 M1157.4,189.8 L1160.2,189.7 L1162.9,189.2 L1165.3,187.9 L1167.7,186.5 M656.6,433.1 L654.3,433.9 L651.8,434.0 L649.4,433.5 L647.0,434.1 L644.5,434.7 L642.0,434.3 L639.9,435.6 L637.5,436.4 M637.5,436.4 L636.9,440.0 M580.4,434.8 L582.7,435.4 L585.1,435.8 L585.9,438.1 L587.4,440.0 M834.1,857.1 L833.5,859.7 L833.4,862.3 M846.8,866.3 L844.3,866.2 L842.3,867.8 L839.9,867.1 L837.6,867.8 M833.4,862.3 L835.0,865.4 L837.6,867.8 M805.2,860.6 L808.8,860.1 L812.3,860.5 L815.9,860.4 L819.4,861.1 L822.9,860.6 L826.5,860.6 L829.8,862.3 L833.4,862.3 M836.7,880.0 L837.7,876.9 L836.7,873.8 L837.5,870.9 L837.6,867.8 M1171.7,214.8 L1170.4,218.2 M1152.9,217.2 L1157.3,217.1 L1161.7,216.9 L1163.7,218.3 L1165.8,219.4 L1168.1,218.6 L1170.4,218.2 M1171.7,220.2 L1170.4,218.2 M1171.7,244.1 L1169.8,246.1 L1168.6,248.5 M1136.3,239.7 L1138.6,240.2 L1140.9,240.6 L1142.5,242.4 L1143.8,244.4 L1148.2,243.8 L1152.6,243.4 L1156.9,244.1 L1161.2,244.0 L1165.3,245.6 L1168.6,248.5 M1171.7,262.6 L1171.4,262.4 M1171.4,262.4 L1170.0,258.7 L1167.0,256.1 L1169.2,252.6 L1168.6,248.5 M870.0,521.5 L872.0,518.3 L874.0,515.2 L874.4,511.4 L875.4,507.7 L875.8,504.0 L877.2,500.5 L878.9,497.2 L880.4,493.8 M880.4,493.8 L883.3,494.8 L886.3,494.9 M886.3,494.9 L888.4,497.1 L890.6,499.2 M886.3,494.9 L888.6,493.8 L891.1,493.3 L892.8,491.4 L893.2,488.8 L894.8,487.1 L896.8,485.8 L898.5,484.3 L900.9,483.7 M1171.7,372.3 L1172.4,369.0 L1170.5,366.2 L1168.7,363.7 L1166.8,361.2 M1166.8,361.2 L1169.5,359.0 L1171.7,356.4 M555.7,412.3 L553.3,411.2 L551.3,409.4 L548.6,408.9 L545.9,409.0 L544.3,406.8 L542.0,405.6 L540.1,403.8 L538.4,401.8 M579.6,419.6 L580.0,416.7 L581.0,413.9 L583.8,413.0 L586.4,411.7 L587.6,409.1 L589.8,407.4 L589.6,404.7 L590.1,402.0 M590.1,402.0 L587.3,399.2 M538.1,400.4 L538.3,401.7 M534.1,416.6 L535.9,413.9 L538.1,411.6 L538.6,408.3 L537.4,405.2 M614.3,379.9 L618.1,379.7 L621.8,379.6 L625.3,378.0 L628.4,375.9 M614.3,379.9 L612.0,381.9 L610.9,384.7 L611.2,387.7 L610.1,390.6 L608.0,392.6 L606.5,395.1 L604.9,397.5 L603.7,400.1 M603.7,400.1 L605.3,403.1 L608.0,405.3 L608.4,408.7 L609.7,411.9 L612.7,413.6 L615.3,415.9 L616.3,419.2 L618.0,422.3 M628.4,375.9 L629.5,378.2 L632.1,378.7 L633.8,380.4 L635.9,381.3 L637.7,383.0 L639.7,384.4 L642.0,385.0 L644.4,385.2 M618.0,422.3 L621.9,422.7 L625.9,423.2 M625.9,423.2 L628.4,420.3 L631.7,418.1 L636.0,418.1 L639.0,415.1 L638.9,411.1 L640.9,407.7 L640.5,403.7 L641.7,400.0 M644.4,385.2 L644.7,386.1 M608.6,376.0 L612.0,377.2 L614.3,379.9 M590.1,402.0 L593.8,401.2 L596.6,398.8 L600.1,399.6 L603.7,400.1 M596.4,440.0 L600.2,440.1 L603.3,437.8 L605.7,435.1 L608.8,433.1 L611.0,430.1 L614.4,428.5 L616.7,425.7 L618.0,422.3 M637.5,436.4 L635.2,432.6 L632.1,429.5 L628.8,426.6 L625.9,423.2 M901.3,432.7 L898.4,429.8 L894.3,429.5 L891.4,432.0 L888.4,434.3 M901.3,432.7 L903.0,434.4 L903.5,436.7 L905.5,438.0 L906.8,440.0 L909.3,440.8 L912.0,441.4 L913.1,443.9 L913.0,446.7 M913.0,446.7 L913.1,449.6 L912.0,452.3 L911.8,455.2 L910.1,457.6 M910.1,457.6 L906.5,457.4 L903.0,458.1 L900.8,455.0 L897.0,454.4 L893.5,454.1 L890.1,453.1 L886.7,454.0 L883.5,455.3 M888.4,434.3 L886.2,435.3 L884.2,436.8 L882.4,438.9 L883.4,441.6 L882.1,445.8 L880.0,449.7 M880.0,450.0 L881.1,453.1 L883.5,455.3 M880.4,493.8 L878.4,492.2 M878.4,492.2 L878.2,491.7 M878.2,491.7 L878.4,490.0 M880.0,479.1 L878.3,476.2 L879.0,472.9 L880.6,470.1 L881.9,467.3 L883.0,464.4 L882.9,461.3 L883.5,458.4 L883.5,455.3 M912.9,464.4 L911.5,461.0 L910.1,457.6 M901.5,432.0 L901.3,432.7 M888.4,434.3 L886.9,432.0 M677.0,405.3 L680.0,404.0 M680.0,365.2 L678.3,362.5 L677.2,359.5 M644.4,385.2 L646.9,383.0 L649.6,380.9 L652.1,378.6 L654.5,376.2 M672.3,360.2 L674.0,358.7 M674.0,358.7 L677.2,359.5 M954.3,382.7 L954.2,382.3 M878.4,492.2 L876.2,492.7 L873.9,492.6 L872.4,494.5 L870.0,494.9 M878.2,491.7 L876.2,490.0 M942.0,425.3 L939.0,425.4 M913.0,446.7 L915.7,445.7 L918.6,446.0 L919.6,442.7 L923.0,442.6 L925.4,441.3 L928.0,440.4 L930.2,438.7 L931.7,436.2 M932.4,437.7 L931.7,436.2 M931.7,436.2 L932.9,434.2 L933.7,431.9 L934.8,429.7 L935.1,427.2 M1156.0,52.1 L1154.5,47.9 L1156.5,44.0 L1156.5,39.5 L1153.0,36.8 M1125.7,456.5 L1125.9,455.0 M1125.9,455.0 L1126.9,452.8 L1128.8,451.4 L1131.3,451.6 L1133.5,450.6 L1137.7,449.5 L1141.7,447.6 L1143.8,446.3 L1144.6,444.1 L1147.3,444.9 L1148.9,442.5 L1151.1,441.9 L1153.4,441.8 L1155.2,440.3 L1156.6,438.4 M1156.6,438.4 L1159.7,440.7 L1162.2,443.7 L1164.2,447.1 L1164.6,451.0 L1164.9,454.9 L1163.9,458.6 L1165.3,462.2 L1166.7,465.7 M1171.4,262.4 L1168.9,264.3 L1167.6,267.1 L1165.6,269.4 L1163.2,271.2 L1160.3,272.5 L1158.7,275.2 L1156.1,276.8 L1153.6,278.4 M1153.6,278.4 L1151.1,277.0 L1148.8,275.3 L1146.7,273.4 L1145.5,270.7 L1144.7,267.7 L1141.9,266.2 L1139.3,265.1 L1136.7,263.8 L1134.3,262.3 L1131.4,261.6 L1129.2,259.9 L1127.4,257.6 L1125.3,255.7 L1122.7,254.7 L1120.6,252.7 L1118.2,251.3 M1171.7,298.9 L1169.3,297.6 L1167.0,296.0 L1164.4,295.0 L1162.2,293.3 L1158.9,292.8 L1158.1,289.6 L1155.8,287.9 L1153.5,286.5 M1153.6,278.4 L1153.7,282.5 L1153.5,286.5 M1171.7,315.7 L1169.3,316.4 L1166.8,316.9 L1164.9,318.7 L1163.7,321.0 L1161.3,320.8 L1158.9,320.4 L1156.8,318.9 L1154.3,319.0 L1152.7,321.0 L1150.7,322.4 L1148.2,321.8 L1145.7,321.8 L1144.0,323.3 L1142.4,324.8 L1140.3,325.7 L1138.4,327.0 M1153.5,286.5 L1151.6,288.5 L1149.5,290.2 L1147.3,292.9 L1144.2,291.5 L1141.9,293.1 L1140.3,295.3 L1138.7,297.4 L1137.7,299.9 L1134.5,301.4 L1131.5,299.7 L1129.2,301.8 L1127.4,304.4 L1126.7,307.2 L1124.9,309.4 L1124.2,312.1 L1123.1,314.7 M1123.1,314.7 L1124.4,317.0 L1126.6,318.4 L1127.8,320.7 L1129.2,322.8 L1131.8,323.0 L1134.4,323.7 L1136.5,325.2 L1138.4,327.0 M1166.8,361.2 L1164.4,361.0 L1162.1,361.3 L1159.8,360.7 L1157.7,359.7 L1155.9,358.3 L1154.0,357.0 L1151.9,355.9 L1149.5,355.5 M1149.5,355.5 L1150.4,351.2 L1152.1,347.2 L1150.8,343.1 L1150.4,338.7 L1147.5,335.7 L1144.4,332.9 L1141.0,330.4 L1138.4,327.0 M680.0,316.9 L678.1,319.1 L676.3,321.4 L673.7,322.7 L671.8,325.0 L668.7,325.3 L666.0,326.7 L663.5,328.7 L662.4,331.6 M680.0,358.2 L677.2,359.5 M674.0,358.7 L672.1,356.2 L671.8,353.1 L669.5,351.2 L667.3,349.2 L665.5,346.8 L663.5,344.7 L663.0,341.7 L661.0,339.4 M661.0,339.4 L662.8,335.7 L662.4,331.6 M628.4,375.9 L628.8,373.2 L628.1,370.6 L627.9,367.9 L628.9,365.3 M661.0,339.4 L658.2,340.2 L655.4,341.2 L652.5,341.6 L649.6,341.8 M1171.7,434.1 L1168.0,435.1 L1164.3,435.9 L1160.6,436.9 L1156.9,437.9 M1156.9,437.9 L1155.2,436.3 L1153.9,434.4 L1153.3,432.1 L1151.8,430.2 L1149.2,430.1 L1146.5,430.3 L1145.4,427.9 L1143.9,425.7 L1143.3,421.3 L1143.4,416.8 L1143.2,412.3 L1143.7,407.9 M1143.7,407.9 L1147.8,406.1 L1152.1,405.8 L1154.5,402.1 L1157.9,399.4 L1161.4,397.2 L1165.2,395.5 L1168.6,393.1 L1171.7,390.4 M1156.6,438.4 L1156.9,437.9 M1125.9,455.0 L1123.3,451.3 L1121.4,447.3 L1119.2,443.4 L1116.6,439.7 L1114.9,438.1 L1114.0,435.9 L1111.7,435.3 L1109.5,434.3 L1105.7,432.1 L1101.8,429.8 M1101.8,429.8 L1103.7,428.3 L1105.3,426.5 L1107.8,426.2 L1109.5,424.3 L1111.1,422.4 L1112.3,420.2 L1114.5,419.0 L1116.9,418.3 L1119.0,416.3 L1120.7,413.9 L1123.2,412.6 L1125.8,411.4 L1125.1,408.6 L1124.7,405.8 L1123.9,403.1 L1123.1,400.4 M1123.1,400.4 L1125.1,402.8 L1127.2,405.1 L1130.3,404.7 L1133.4,404.3 L1135.8,405.7 L1138.6,405.9 L1141.4,406.3 L1143.7,407.9 M1149.5,355.5 L1146.8,353.9 L1143.6,353.5 L1140.4,354.5 L1138.6,357.3 L1137.1,359.6 L1135.5,361.9 L1134.2,364.6 L1131.5,365.8 L1129.2,367.5 L1128.3,370.1 L1126.1,371.6 L1123.7,372.8 L1121.4,374.1 L1120.0,376.4 L1118.0,378.3 L1117.0,380.8 M1123.1,400.4 L1122.7,397.7 L1121.4,395.3 L1122.2,392.7 L1122.0,390.0 L1120.5,387.7 L1118.6,385.9 L1118.3,383.2 L1117.0,380.8 M970.9,299.8 L969.6,299.2 M859.8,292.6 L857.6,289.0 L857.9,284.8 M857.9,284.8 L855.2,283.6 M854.0,259.4 L856.6,257.2 M860.3,282.7 L857.9,284.8 M1123.1,314.7 L1119.1,313.4 L1115.0,313.2 M1115.0,313.2 L1114.2,309.6 L1113.8,305.8 L1114.9,302.2 L1115.4,298.5 L1118.2,295.8 L1119.4,292.1 L1119.0,288.2 L1119.8,284.5 L1116.4,282.7 L1114.5,279.4 L1111.4,277.0 L1110.7,273.1 L1107.5,271.1 L1104.3,269.1 L1102.0,266.1 L1100.4,262.7 M1048.8,281.2 L1049.6,283.7 L1052.1,284.9 L1054.6,285.4 L1057.1,284.9 M1048.1,294.4 L1052.0,292.5 L1056.2,291.1 M1057.1,284.9 L1056.8,288.0 L1056.2,291.1 M1057.1,284.9 L1057.8,282.4 L1059.3,280.3 L1059.9,277.8 L1061.3,275.5 L1064.0,275.2 L1065.9,273.2 L1068.6,272.6 L1070.1,270.3 M662.4,331.6 L659.8,330.9 L658.8,328.4 L657.9,326.1 L656.6,324.0 M1101.8,429.8 L1098.2,431.9 L1094.0,431.5 L1090.1,432.4 L1086.1,431.9 M1081.2,439.6 L1082.3,437.6 L1083.3,435.6 L1084.9,433.8 L1086.1,431.9 M968.1,315.5 L967.0,316.3 M960.3,338.2 L960.5,339.9 M957.0,343.7 L958.8,343.7 M1086.1,431.9 L1084.3,429.0 L1086.6,426.6 L1085.0,424.3 L1083.0,422.6 L1082.2,420.3 L1081.4,417.9 L1079.5,416.2 L1078.3,414.0 L1075.7,413.2 L1074.6,410.8 L1073.0,408.8 L1071.6,406.8 L1069.2,405.8 L1066.7,405.5 L1064.7,403.9 L1062.8,402.2 M1062.8,402.2 L1059.0,403.3 L1055.8,405.7 L1051.7,405.3 L1048.4,407.9 M1115.0,313.2 L1111.7,314.8 L1108.4,315.8 L1104.9,317.1 L1102.8,320.2 L1100.4,322.9 L1097.4,324.8 L1095.0,327.3 L1092.8,330.1 M1056.2,291.1 L1056.2,293.8 L1057.1,296.3 L1057.4,298.9 L1057.5,301.6 L1059.5,303.6 L1059.6,306.5 L1061.6,308.3 L1062.6,310.8 M1062.6,310.8 L1064.3,312.4 L1065.4,314.4 L1066.9,316.2 L1069.1,317.2 L1071.2,318.1 L1073.3,319.1 L1075.2,320.5 L1076.3,322.6 L1078.2,323.9 L1080.1,325.3 L1081.9,326.7 L1083.9,327.7 L1086.2,328.3 L1088.5,328.4 L1090.6,329.4 L1092.8,330.1 M1062.6,310.8 L1059.6,311.9 L1057.2,314.0 L1055.4,316.7 L1053.0,318.8 M1117.0,380.8 L1115.0,379.5 L1112.9,378.7 L1111.1,377.0 L1108.7,376.6 L1106.5,375.5 L1104.1,375.3 L1101.7,375.7 L1099.5,374.4 L1097.5,373.0 L1095.4,371.9 L1093.1,370.9 L1090.6,370.7 L1088.8,369.0 L1087.9,366.6 L1086.0,365.0 L1085.1,362.7 M1092.8,330.1 L1090.8,334.0 L1090.9,338.4 L1089.6,340.3 L1087.4,341.3 L1087.3,343.6 L1087.0,345.9 L1087.3,350.2 L1088.2,354.5 L1087.2,358.8 L1085.1,362.7 M1051.8,377.4 L1056.1,377.4 L1060.3,378.0 L1064.5,379.1 L1068.4,380.6 M1053.8,351.0 L1057.1,352.8 L1060.0,355.3 L1063.2,357.4 L1065.6,360.3 L1067.9,363.8 L1071.7,365.5 L1075.7,365.1 L1079.7,365.5 M1068.4,380.6 L1069.5,378.5 L1071.0,376.6 L1072.3,374.7 L1073.7,372.8 L1074.3,370.4 L1075.8,368.4 L1077.6,366.7 L1079.7,365.5 M1062.8,402.2 L1064.6,399.8 L1064.5,396.7 L1065.0,393.8 L1064.0,391.0 L1064.3,388.1 L1064.9,385.3 L1067.2,383.3 L1068.4,380.6 M1085.1,362.7 L1082.3,363.8 L1079.7,365.5 M881.4,295.1 L881.3,296.8 L881.4,298.5 L880.6,300.0 L880.1,301.6 L880.0,303.2 L880.0,304.9 L879.7,306.5 L879.5,308.1 L879.7,309.9 L878.7,311.3 L877.1,312.0 L876.3,313.6 L875.1,314.6 L873.9,315.6 L872.5,316.4 L871.7,317.9 L870.4,318.8 L869.1,319.6 L867.6,320.2 L866.2,320.8 L864.6,320.6 L863.0,320.6 L861.4,321.0 L860.0,321.8 M895.2,292.5 L896.1,294.3 L896.7,296.2 L896.3,298.2 L896.3,300.3 L897.1,302.2 L897.3,304.2 L897.1,306.1 L897.1,308.1 L896.3,309.6 L894.9,310.4 L894.0,311.7 L892.7,312.6 L891.8,314.0 L891.4,315.5 L890.4,316.8 L889.3,317.9 L887.5,319.2 L885.7,320.5 L883.6,321.0 L881.5,321.8 M899.1,292.5 L900.2,293.8 L901.1,295.3 L901.2,297.0 L901.0,298.7 L901.2,300.4 L901.7,301.9 L901.3,303.7 L902.5,305.1 L903.1,306.7 L904.4,307.9 L904.8,309.6 L905.5,311.2 L905.6,312.9 L905.8,314.6 L905.3,316.2 L904.9,317.9 L905.7,319.3 L906.1,320.9 L907.0,322.2 L907.6,323.7 L907.8,325.4 L908.5,326.9 L909.7,328.0 L911.0,329.1 L912.3,330.1 L913.2,331.5 L914.2,332.8 L914.6,334.4 L915.8,335.5 L916.9,336.6 L917.8,338.0 L918.6,339.4 L920.3,341.4 L922.7,342.7 L924.2,344.8 L926.0,346.7 L928.2,348.3 L930.4,349.9 L931.2,352.5 L932.3,355.0 L932.4,357.1 L933.2,359.1 L934.0,361.0 L935.0,362.9 L936.2,364.6 L937.0,366.6 L938.5,368.3 L938.1,370.6 M910.8,289.6 L912.0,291.8 L913.8,293.6 L914.9,295.9 L915.0,298.4 L914.6,300.9 L915.3,303.4 L916.1,305.7 L916.6,308.1 L918.0,309.1 L919.2,310.1 L920.9,310.1 L922.3,311.0 L923.3,312.4 L924.8,313.1 L925.5,314.6 L926.4,315.9 L928.1,318.2 L929.2,320.8 L932.2,321.0 L934.4,322.9 L936.6,324.5 L939.2,325.3 L941.6,326.4 L944.0,327.7 L945.3,329.7 L946.9,331.5 L947.9,333.8 L947.5,336.3 L948.7,338.4 L950.6,339.8 L952.3,341.4 L953.8,343.3 M918.6,287.6 L918.9,289.8 L919.1,292.1 L919.6,294.3 L919.8,296.5 L921.4,298.3 L921.5,300.8 L922.8,302.6 L924.5,304.2 L927.1,305.3 L929.4,307.1 L932.0,308.2 L934.2,310.1 L935.1,312.0 L936.1,313.9 L938.1,314.9 L939.1,316.9 L940.9,318.0 L942.5,319.4 L944.2,320.7 L945.9,321.8 M932.3,280.8 L933.5,282.8 L934.2,285.1 L935.4,287.1 L936.7,289.1 L936.8,291.5 L937.7,293.7 L938.0,296.0 L938.1,298.4 L939.3,300.1 L940.3,302.0 L940.7,304.1 L941.4,306.0 L941.8,308.1 L942.1,310.2 L942.7,312.3 L944.0,314.0 L945.7,315.7 L947.0,317.8 L948.4,319.9 L949.6,322.0 L950.5,324.3 L951.1,326.7 L950.7,329.2 L951.8,331.6 L953.3,332.4 L954.4,333.8 L955.2,335.3 L956.2,336.7 L956.8,338.3 L957.7,339.8 L958.5,341.2 L959.2,342.7 M944.1,275.7 L944.0,277.4 L943.8,279.0 L944.2,280.7 L943.8,282.3 L944.5,283.9 L945.3,285.3 L945.8,286.9 L945.9,288.6 L945.6,291.4 L946.0,294.1 L946.2,296.9 L946.7,299.6 L948.5,301.8 L949.4,304.5 L951.3,306.6 L953.8,308.1 L954.8,310.7 L956.4,312.8 L956.6,315.5 L956.8,318.3 L958.6,320.3 L959.3,322.9 L960.4,325.3 L961.6,327.7 M949.8,273.0 L951.3,274.6 L952.7,276.4 L953.7,278.3 L954.6,280.4 L955.4,282.4 L956.1,284.5 L956.7,286.6 L957.7,288.6 L959.5,290.2 L961.5,291.5 L963.0,293.4 L964.8,295.0 L966.3,297.0 L966.8,299.4 L967.4,301.8 L967.4,304.2 M865.9,323.8 L867.3,325.4 L868.0,327.4 L868.5,329.5 L868.9,331.5 L869.5,333.5 L869.8,335.6 L871.1,337.3 L871.7,339.4 L870.5,341.1 L870.4,343.2 L869.5,345.0 L869.1,347.0 L869.3,349.1 L868.3,351.0 L868.1,353.0 L867.8,355.0 L868.3,357.7 L869.7,360.2 L869.8,362.9 L870.2,365.7 L870.3,368.5 L871.6,371.0 L872.3,373.7 L871.7,376.5 L871.0,377.8 L870.2,379.2 L869.1,380.3 L868.6,381.8 L868.0,383.3 L867.4,384.8 L867.7,386.3 L867.7,387.9 L867.1,389.4 L867.4,391.0 L867.2,392.5 L866.5,393.9 L865.9,395.4 L865.1,396.8 L866.0,398.2 L865.9,399.9 M893.2,317.9 L894.6,318.5 L895.9,319.5 L896.7,320.8 L897.4,322.2 L897.8,323.7 L898.8,324.9 L899.5,326.2 L900.2,327.5 L900.0,330.5 L899.4,333.4 L898.9,336.4 L899.1,339.4 L900.3,341.1 L901.1,343.1 L902.0,345.1 L903.9,346.2 L905.8,347.2 L907.9,347.9 L909.5,349.4 L910.8,351.1 L911.1,353.3 L911.8,355.4 L912.6,357.5 L913.3,359.6 L914.1,361.7 L915.0,363.8 L916.5,365.7 L918.6,366.7 L920.7,367.3 L922.6,368.3 L924.7,368.6 L926.9,368.5 L929.0,368.7 L931.0,369.7 L932.8,370.9 L934.2,372.6 M899.1,378.4 L900.4,377.8 L901.8,377.1 L903.2,376.5 L904.6,375.8 L906.0,375.2 L907.4,374.5 L908.9,374.2 L910.5,374.4 L912.0,374.0 L913.5,374.1 L914.9,373.5 L916.5,373.4 L918.1,373.6 L919.6,374.0 L921.2,373.5 L922.5,372.6 L924.5,372.8 L926.5,372.6 L928.5,372.8 L930.5,372.4 L932.2,373.5 L934.0,374.4 L936.1,374.3 L938.1,374.5 M918.6,386.2 L921.2,385.8 L923.8,385.2 L926.2,383.9 L928.4,382.3 L930.4,383.8 L932.3,385.4 L933.6,387.5 L935.0,389.5 L936.2,391.8 L936.8,394.2 L938.1,396.4 L940.1,398.0 L941.8,400.2 L941.9,403.0 L941.8,405.7 L941.7,408.4 L942.8,410.9 L943.6,413.6 L945.0,416.1 L947.7,417.1 M860.0,401.9 L861.9,401.8 L863.7,401.4 L865.6,401.1 L867.5,401.4 L869.3,401.9 L871.2,402.2 L873.1,401.7 L875.0,402.3 L876.3,400.9 L878.1,400.0 L880.0,399.5 L881.9,399.2 L883.8,399.1 L885.6,398.9 L887.5,398.4 L889.3,398.0 L890.9,398.8 L892.6,399.3 L894.2,398.8 L896.0,398.7 L897.2,400.0 L898.6,401.0 L900.1,402.0 L901.7,402.5 L903.5,403.0 L905.2,402.4 L906.8,401.6 L908.0,400.4 L909.7,399.7 L911.3,398.8 L913.0,399.2 L914.7,399.9 L916.2,400.4 L917.7,400.1 L919.2,400.3 L920.7,400.4 L922.3,400.5 L923.8,400.5 L925.2,399.8 L926.6,399.1 L928.2,399.1 L929.6,398.4 L930.6,397.2 L932.1,396.6 L933.6,396.8 L935.1,396.4 L936.7,396.4 L938.1,396.0 L939.9,395.7 L941.6,395.1 L943.4,395.5 L945.2,394.9 L947.0,394.4 L948.8,394.3 L950.6,393.6 L951.8,392.1 M877.6,405.8 L877.6,407.4 L877.5,408.9 L877.1,410.4 L876.8,412.0 L876.7,413.6 L877.0,415.1 L877.5,416.6 L877.7,418.2 L878.8,419.4 L879.4,420.9 L879.8,422.5 L879.7,424.1 L880.1,425.6 L880.8,427.0 L880.7,428.6 L881.5,430.0 M891.2,401.9 L892.2,403.5 L892.9,405.3 L894.2,406.7 L894.9,408.6 L895.1,410.5 L895.3,412.4 L894.8,414.3 L894.4,416.2 L895.7,417.5 L896.4,419.3 L897.3,421.0 L898.3,422.5 L898.1,424.4 L898.1,426.3 L899.3,428.0 L899.1,430.0 M906.9,399.9 L907.8,401.7 L908.3,403.6 L909.2,405.3 L910.2,407.0 L911.3,408.7 L911.7,410.7 L912.0,412.6 L912.2,414.6 L913.2,416.4 L913.8,418.3 L913.4,420.3 L913.1,422.4 L913.1,424.3 L913.7,426.2 L914.1,428.1 L914.7,430.0 M920.5,421.4 L922.4,423.7 L923.9,426.2 L926.1,428.2 L928.4,430.0 M860.0,317.9 L862.2,318.8 L864.4,319.2 L866.8,319.0 L868.9,318.1 L871.1,317.5 L873.2,316.7 L875.4,316.3 L877.6,315.9 L879.1,316.9 L880.6,318.0 L881.8,319.4 L882.6,321.1 L884.2,322.1 L885.9,322.5 L887.8,322.6 L889.3,323.8 L889.5,321.8 L889.9,320.0 L891.5,318.8 L893.2,317.9 M860.0,372.6 L861.2,373.7 L862.7,374.1 L864.1,374.9 L865.6,375.4 L867.0,376.0 L868.6,376.4 L870.1,376.6 L871.7,376.5 M938.1,374.5 L940.2,376.5 L941.4,379.1 L943.5,381.0 L945.7,382.7 L947.9,384.8 L948.4,387.6 L950.2,389.8 L951.8,392.1 L953.9,390.5 L956.5,389.6 L959.0,388.8 L961.6,388.2 M171.5,439.1 L173.2,441.1 L174.0,443.6 L174.7,446.2 L173.8,448.7 L175.6,450.8 L177.2,453.0 L177.2,455.8 L178.6,458.3 L180.5,460.3 L182.2,462.4 L182.9,465.1 L183.4,467.8 L183.7,469.7 L183.2,471.5 L183.0,473.4 L183.8,475.1 L184.2,477.0 L184.0,478.9 L184.9,480.5 L185.8,482.2 L187.2,484.4 L188.3,486.9 L189.5,489.3 L190.6,491.7 L190.0,493.5 L189.8,495.3 L189.7,497.2 L190.0,499.0 L189.2,500.7 L188.9,502.5 L189.0,504.4 L188.2,506.1 L190.0,508.0 L190.2,510.6 L190.8,513.0 L191.6,515.4 L192.4,517.7 L192.4,520.3 L192.8,522.7 L193.0,525.2 L193.3,527.7 L193.4,530.2 L193.8,532.7 L195.3,534.8 L195.8,537.2 L196.5,539.6 L196.9,542.0 L197.8,544.3 L197.1,546.7 L196.1,548.9 L195.6,551.3 L195.6,553.8 L196.3,556.2 L195.3,558.6 L196.1,561.0 L195.4,563.4 L196.8,565.7 L198.3,567.8 L199.6,570.1 L200.9,572.5 L200.7,575.1 L200.3,577.8 L198.9,580.1 L197.8,582.6 L197.7,585.1 L197.7,587.7 L198.2,590.2 L198.1,592.8 L196.6,594.9 L194.9,596.9 L193.8,599.3 L193.0,601.7 L193.8,603.9 L195.0,606.0 L194.6,608.4 L194.8,610.8 L194.7,613.2 L195.2,615.4 L195.8,617.8 L195.4,620.1 M85.4,441.5 L86.7,443.3 L87.8,445.1 L89.8,446.0 L91.4,447.4 L92.6,449.2 L93.9,450.9 L95.9,451.8 L97.3,453.5 L99.9,453.9 L102.5,454.3 L104.7,455.7 L106.9,457.1 L109.2,456.1 L111.3,454.6 L113.7,454.2 L116.2,454.0 L118.7,454.2 L121.1,453.7 L123.6,454.3 L126.0,453.5 L127.3,451.3 L129.3,449.5 L131.7,448.5 L133.2,446.3 L134.2,447.4 L135.3,448.4 L136.2,449.7 L137.0,450.9 L137.6,452.3 L138.3,453.6 L139.4,454.7 L140.4,455.9 L142.1,455.3 L144.0,455.4 L145.7,455.8 L147.5,455.9 L148.9,458.0 L149.2,460.5 L149.6,462.9 L149.4,465.4 L149.7,467.9 L149.6,470.4 L148.5,472.7 L147.5,475.0 L149.4,475.2 L151.1,476.0 L152.9,476.1 L154.7,476.2 L156.5,475.7 L158.3,475.4 L160.1,475.7 L161.9,476.2 L163.1,474.0 L164.8,472.2 L166.2,470.2 L168.2,468.6 L169.7,466.7 L171.4,464.9 L172.7,462.8 L173.8,460.6 L176.4,459.9 L178.6,458.3 M121.3,453.5 L121.3,456.2 L121.5,458.9 L121.9,461.5 L122.0,464.2 L122.4,466.9 L121.8,469.6 L122.2,472.4 L121.3,475.0 L122.1,476.5 L123.0,477.9 L124.0,479.4 L125.2,480.6 L126.1,482.1 L127.4,483.4 L129.3,483.5 L130.8,484.5 L132.9,485.2 L134.7,486.6 L136.3,487.9 L138.0,489.3 L140.0,489.5 L141.9,489.0 L143.6,487.9 L145.6,487.8 L147.4,488.8 L148.7,490.3 L150.3,491.4 L152.3,491.7 L153.5,489.9 L154.3,487.9 L155.4,486.0 L156.3,484.0 L158.0,482.6 L159.3,480.9 L160.7,479.2 L161.9,477.4 M134.4,489.3 L135.7,490.1 L136.7,491.3 L136.6,492.8 L137.0,494.3 L136.8,497.1 L137.0,500.0 L135.6,502.5 L134.4,505.2 L135.3,507.9 L135.6,510.8 L133.2,512.0 L130.7,513.0 L128.3,514.3 L126.0,515.6 L123.8,516.8 L121.4,517.6 L119.0,518.1 L116.5,518.0 L116.3,520.5 L116.1,523.0 L114.6,525.1 L114.1,527.6 L114.8,529.0 L115.2,530.6 L115.1,532.2 L114.5,533.7 L115.2,535.1 L115.9,536.5 L116.2,538.0 L116.5,539.5 L117.8,540.6 L118.9,541.8 L120.2,543.0 L121.3,544.3 L123.6,543.4 L126.0,542.9 L128.3,544.0 L130.8,544.3 L132.5,542.2 L133.2,539.5 L134.8,537.3 L135.6,534.8 L137.9,534.0 L140.3,533.3 L142.8,533.2 L145.2,532.4 L146.9,531.7 L148.8,531.9 L150.6,531.8 L152.4,531.7 L154.2,531.3 L156.0,530.9 L157.6,530.0 L159.5,530.0 M135.6,510.8 L137.4,511.1 L139.0,511.8 L140.7,512.5 L142.2,513.3 L143.8,514.2 L145.2,515.3 L146.5,516.5 L147.5,518.0 L149.9,519.4 L152.6,519.9 L155.0,521.1 L157.1,522.8 L157.7,524.6 L158.3,526.4 L158.8,528.2 L159.5,530.0 L158.3,532.3 L156.8,534.6 L155.5,537.0 L154.7,539.5 L152.1,540.4 L149.3,540.5 L146.6,541.2 L143.8,541.2 L141.2,542.0 L138.6,542.9 L135.9,543.9 L133.2,544.3 M138.0,491.7 L138.2,493.5 L137.8,495.3 L138.2,497.1 L138.0,498.9 L140.0,499.7 L141.6,501.2 L142.9,503.0 L144.8,504.2 L146.7,505.3 L148.7,506.1 L150.5,507.3 L152.3,508.5 L155.0,507.6 L157.7,507.2 L160.4,506.1 L161.9,503.7 L163.5,503.9 L165.2,503.9 L166.9,504.0 L168.5,504.1 L170.2,503.8 L171.9,504.5 L173.5,504.4 L175.2,504.1 L176.9,504.3 L178.6,504.7 L180.1,503.8 L181.9,503.5 L183.5,502.9 L185.1,502.7 L186.7,502.1 L188.2,501.3 M161.9,503.7 L161.0,505.8 L160.5,507.9 L159.0,509.6 L157.9,511.6 L158.2,513.8 L157.9,516.0 L157.2,518.2 L157.1,520.4 L157.4,522.9 L158.2,525.2 L159.1,527.5 L159.5,530.0 M188.2,506.1 L189.8,507.1 L191.7,507.7 L193.5,507.2 L195.4,506.8 L197.3,507.1 L198.8,508.3 L200.7,508.0 L202.5,508.5 L204.5,509.8 L206.6,510.9 L208.3,512.5 L209.7,514.4 L211.3,516.1 L213.0,517.8 L214.9,519.1 L216.9,520.4 L219.5,520.6 L222.1,520.9 L223.9,522.8 L226.1,524.2 L228.5,524.9 L231.0,524.9 L233.5,525.7 L236.0,525.2 L236.5,527.6 L236.9,530.1 L238.5,532.1 L239.3,534.5 L239.5,537.1 L239.0,539.6 L239.5,542.1 L240.8,544.3 L239.9,546.7 L238.6,548.9 L238.0,551.3 L238.4,553.9 L236.9,554.8 L235.6,555.8 L234.2,556.9 L232.6,557.7 L231.9,559.3 L231.4,561.0 L230.0,562.1 L228.8,563.4 L228.2,565.9 L227.5,568.4 L225.9,570.5 L224.4,572.6 L224.2,575.3 L225.5,577.6 L226.0,580.1 L226.4,582.6 L225.4,583.7 L224.1,584.5 L222.9,585.4 L221.8,586.6 L220.9,587.8 L220.2,589.2 L219.4,590.6 L219.3,592.1 L217.0,593.3 L214.6,594.2 L212.4,595.4 L210.3,596.8 L207.7,596.6 L205.2,596.2 L202.6,596.3 L200.1,596.9 M190.6,491.7 L192.4,493.0 L194.5,493.4 L196.6,494.0 L198.8,493.9 L200.9,493.0 L203.1,492.6 L205.2,493.3 L207.3,494.1 L209.2,494.1 L211.0,494.4 L212.8,493.6 L214.7,494.1 L216.6,493.9 L218.2,493.0 L219.7,491.9 L221.7,491.7 L223.6,491.9 L225.3,492.6 L227.1,493.2 L229.0,493.7 L230.5,494.9 L232.1,496.1 L234.1,496.2 L236.0,496.5 L238.4,497.6 L240.8,498.9 L242.6,498.7 L244.4,498.4 L246.1,498.2 L248.0,498.3 L249.8,498.4 L251.6,498.3 L253.3,498.9 L255.1,498.9 M216.9,427.2 L217.9,428.6 L219.4,429.4 L220.9,430.5 L221.7,432.1 L222.4,433.7 L223.9,434.8 L224.4,436.4 L224.9,438.1 L225.7,439.6 L226.2,441.2 L226.7,442.9 L226.9,444.6 L226.2,446.4 L227.0,448.1 L228.1,449.4 L228.8,451.1 L229.7,453.1 L231.2,454.7 L232.6,456.4 L233.6,458.3 L235.6,459.0 L237.6,460.1 L239.2,461.5 L240.8,463.0 L240.8,465.2 L240.0,467.2 L239.9,469.3 L240.1,471.5 L238.2,473.0 L237.8,475.3 L237.7,477.6 L238.4,479.8 L238.5,481.9 L239.0,484.0 L239.3,486.2 L240.6,488.0 L240.4,490.1 L239.9,492.3 L239.8,494.5 L240.8,496.5 M240.8,463.0 L241.1,461.3 L242.3,459.9 L243.7,458.8 L244.6,457.3 L245.9,456.1 L247.6,455.5 L248.9,454.4 L250.3,453.5 L252.6,452.1 L255.1,451.1 M85.4,522.8 L87.2,522.5 L89.0,522.2 L90.8,522.3 L92.6,522.8 L94.0,524.4 L95.2,526.2 L96.2,528.1 L97.3,530.0 L97.2,532.5 L96.4,534.8 L95.7,537.2 L94.4,539.3 L94.3,541.8 L93.8,544.3 L94.1,546.7 L95.0,549.1 L94.5,550.9 L94.4,552.7 L94.2,554.5 L94.1,556.3 L93.6,558.1 L93.5,559.9 L92.9,561.6 L92.6,563.4 L90.4,564.0 L88.6,565.3 L86.9,566.6 L85.4,568.2 M95.0,553.9 L96.8,554.5 L98.4,555.4 L100.3,555.4 L102.1,555.9 L103.7,554.8 L105.5,554.2 L107.4,554.1 L109.3,553.9 L110.9,552.7 L111.9,551.0 L113.1,549.5 L114.4,548.0 L116.2,547.1 L118.1,546.6 L119.7,545.6 L121.3,544.3 M92.6,563.4 L95.0,564.8 L97.4,566.4 L100.1,567.3 L102.9,567.8 L105.7,566.8 L108.6,566.2 L109.7,567.2 L111.0,568.1 L112.5,568.0 L114.1,568.2 L114.7,570.0 L115.5,571.7 L116.0,573.6 L117.0,575.2 L117.2,577.1 L117.3,579.0 L118.5,580.6 L118.9,582.6 L120.0,584.5 L120.7,586.5 L121.9,588.4 L123.6,589.7 L124.3,591.9 L125.2,593.9 L126.7,595.5 L128.4,596.9 L129.8,599.2 L130.8,601.7 L131.2,604.0 L130.9,606.3 L130.9,608.7 L131.7,610.9 L132.4,613.2 L133.3,615.4 L133.7,617.7 L133.2,620.1 M130.8,558.7 L133.3,559.7 L135.3,561.6 L137.8,562.5 L140.4,563.4 L141.9,563.0 L143.4,562.6 L144.7,561.9 L146.2,561.3 L147.7,561.0 L149.2,560.8 L150.8,560.7 L152.3,561.0 L153.6,560.2 L155.1,559.8 L156.5,559.1 L157.4,557.8 L158.4,556.7 L159.4,555.6 L160.8,554.9 L161.9,553.9 L163.7,553.9 L165.5,553.5 L167.3,553.3 L169.1,552.9 L170.9,552.8 L172.7,552.5 L174.4,551.9 L176.2,551.5 L177.6,552.8 L179.0,554.2 L179.9,555.9 L181.2,557.3 L181.7,559.2 L183.1,560.7 L184.3,562.2 L185.8,563.4 L185.0,564.8 L184.7,566.3 L184.4,567.9 L183.6,569.2 L183.6,570.8 L183.2,572.3 L183.3,573.8 L183.4,575.4 L181.8,577.3 L181.1,579.7 L180.2,581.9 L179.6,584.3 L178.2,586.4 L176.5,588.1 L174.6,589.7 L173.8,592.1 L172.6,593.0 L171.7,594.3 L171.5,595.8 L170.4,597.0 L169.4,598.2 L168.1,599.0 L167.1,600.2 L166.7,601.7 L167.5,603.0 L168.2,604.3 L168.9,605.6 L169.5,607.1 L170.6,608.1 L171.6,609.2 L172.8,610.1 L173.8,611.3 L175.5,613.1 L176.7,615.4 L177.8,617.7 L178.6,620.1 M140.4,563.4 L141.5,564.6 L142.5,565.8 L142.8,567.3 L143.0,568.9 L144.2,569.9 L145.3,570.9 L146.6,571.8 L147.5,573.0 L146.3,574.8 L145.5,576.8 L144.1,578.4 L142.6,580.1 L141.3,581.8 L140.5,583.8 L139.5,585.8 L138.0,587.3 L137.4,589.3 L136.6,591.1 L135.5,592.8 L134.9,594.8 L134.2,596.7 L133.0,598.3 L131.9,600.0 L130.8,601.7 M152.3,561.0 L152.5,562.9 L153.0,564.8 L153.6,566.6 L154.4,568.3 L155.0,570.1 L155.5,572.0 L156.4,573.6 L157.1,575.4 L157.8,577.3 L159.2,578.7 L160.1,580.4 L161.0,582.1 L161.7,584.0 L163.1,585.5 L165.1,586.1 L166.7,587.3 L168.6,588.4 L170.2,589.8 L172.0,591.0 L173.8,592.1 M228.8,563.4 L230.6,564.3 L232.5,564.9 L234.3,565.7 L236.0,566.7 L237.5,568.0 L238.9,569.5 L239.6,571.3 L240.8,573.0 L242.7,575.0 L245.2,576.2 L247.5,577.7 L250.3,577.8 L251.1,576.0 L252.4,574.5 L252.9,572.6 L254.0,571.0 L253.8,569.1 L254.1,567.2 L254.5,565.3 L255.1,563.4 M197.8,585.0 L200.2,586.0 L202.6,587.3 L205.0,588.3 L207.3,589.7 L208.9,589.8 L210.5,590.0 L211.8,590.8 L213.1,591.7 L214.7,591.1 L216.2,591.7 L217.7,592.0 L219.3,592.1 M255.1,451.1 L256.8,452.0 L258.6,452.4 L260.5,452.6 L262.3,452.2 L264.1,452.3 L266.0,452.3 L267.7,453.1 L269.5,453.5 L270.9,454.2 L272.4,454.7 L273.9,454.7 L275.5,454.5 L276.9,455.1 L278.5,455.1 L280.0,455.2 L281.4,455.9 L283.0,455.0 L284.2,453.6 L285.8,452.9 L287.5,452.4 L287.9,450.6 L288.9,449.2 L290.3,448.0 L291.0,446.3 L290.7,444.4 L290.9,442.5 L291.9,440.9 L292.8,439.3 L293.8,437.7 L294.9,436.1 L296.3,434.9 L298.2,434.3 L299.4,435.2 L300.7,436.2 L302.0,437.1 L303.3,438.0 L303.5,439.5 L304.0,441.0 L304.5,442.6 L305.3,443.9 L307.0,444.8 L308.9,445.3 L310.8,445.3 L312.5,446.3 L314.8,447.1 L317.2,447.9 L319.6,448.3 L322.1,448.7 L323.6,449.3 L325.2,449.5 L326.9,449.7 L328.5,449.8 L329.7,448.7 L331.3,448.1 L332.6,447.1 L334.0,446.3 M281.4,455.9 L282.4,457.1 L283.2,458.5 L283.5,460.1 L284.1,461.5 L283.9,463.2 L283.1,464.6 L283.1,466.3 L283.8,467.8 L282.1,468.8 L280.7,470.2 L279.7,471.8 L278.3,473.2 L277.7,475.1 L277.1,477.0 L275.5,478.2 L274.3,479.8 L272.5,480.6 L271.2,482.2 L270.1,483.7 L268.8,485.2 L267.7,486.9 L267.2,488.7 L266.2,490.4 L264.7,491.7 L263.9,494.3 L263.4,497.1 L261.6,499.1 L259.9,501.3 M283.8,467.8 L285.0,469.9 L286.9,471.3 L289.3,472.0 L290.7,474.1 L292.6,475.6 L294.4,477.0 L296.5,478.0 L298.2,479.8 L299.4,480.9 L299.9,482.5 L300.7,484.0 L301.8,485.2 L301.9,487.0 L301.3,488.7 L302.1,490.2 L302.9,491.7 M291.0,427.2 L292.5,429.3 L294.0,431.4 L296.4,432.4 L298.2,434.3 M334.0,446.3 L333.9,444.3 L333.6,442.3 L333.9,440.4 L334.2,438.4 L335.2,436.7 L336.3,435.1 L337.8,433.7 L338.8,432.0 L339.4,430.1 L340.6,428.6 L341.0,426.7 L341.2,424.8 M322.1,448.7 L321.3,451.1 L321.5,453.6 L321.4,456.1 L322.5,458.3 L322.9,460.7 L323.0,463.2 L324.4,465.3 L324.5,467.8 L326.3,469.8 L327.2,472.5 L327.6,475.2 L328.7,477.7 L330.4,479.8 L332.5,481.6 L333.1,484.3 L334.0,486.9 L335.3,488.5 L337.2,489.4 L339.2,489.7 L341.1,490.4 L341.6,492.4 L342.8,494.1 L344.6,495.0 L346.0,496.5 L347.4,497.1 L348.4,498.3 L349.9,498.3 L351.4,498.8 L354.3,498.6 L357.1,497.4 L359.7,498.2 L362.4,499.1 L365.2,499.5 L367.5,501.3 L369.8,502.3 L371.3,504.3 L373.3,505.8 L374.9,507.7 L376.5,509.7 L378.4,511.2 L381.0,511.7 L383.0,513.2 M298.2,486.9 L299.5,486.0 L301.1,485.6 L302.6,485.0 L304.0,484.1 L305.4,483.4 L306.8,482.5 L308.2,481.5 L309.9,481.5 L311.5,481.6 L313.2,481.3 L314.8,481.1 L316.5,481.0 L317.7,479.9 L319.3,479.2 L320.4,477.9 L322.1,477.4 L322.8,475.0 L323.9,472.7 L324.3,470.3 L324.5,467.8 M302.9,494.1 L303.9,496.1 L304.9,498.0 L305.5,500.2 L305.6,502.4 L306.8,504.3 L306.7,506.6 L307.0,508.8 L307.7,510.8 L308.9,513.3 L309.3,516.0 L311.4,517.9 L312.5,520.4 L314.4,521.8 L316.4,523.0 L317.7,525.0 L319.7,526.3 L321.2,528.2 L322.7,530.0 L324.5,531.7 L326.8,532.4 L327.6,534.0 L328.5,535.5 L329.9,536.6 L331.1,537.9 L331.7,539.6 L332.7,541.1 L333.4,542.7 L334.0,544.3 L334.0,546.2 L334.0,548.0 L333.3,549.7 L332.6,551.4 L332.2,553.2 L331.7,555.0 L331.3,556.8 L331.6,558.7 L332.2,561.4 L332.3,564.3 L333.8,566.8 L336.4,568.2 M326.8,532.4 L328.6,532.7 L330.5,532.7 L332.1,533.6 L334.0,533.6 L335.7,534.5 L337.4,535.2 L339.3,535.1 L341.2,534.8 L343.3,535.2 L345.5,535.0 L347.6,535.5 L349.8,535.4 L352.1,535.9 L354.4,535.3 L355.9,533.5 L357.9,532.4 L359.5,532.1 L361.0,531.6 L362.6,531.5 L364.1,531.0 L365.7,530.9 L367.3,531.0 L368.9,531.3 L370.5,531.1 L372.1,531.7 L373.5,532.8 L375.1,532.2 L376.7,531.8 L378.3,531.3 L379.9,531.7 L381.4,532.4 L383.0,532.4 M259.9,501.3 L260.9,502.4 L262.0,503.5 L262.9,504.7 L264.4,505.3 L265.7,506.1 L266.6,507.3 L268.2,507.5 L269.5,508.5 L270.4,509.8 L271.2,511.2 L272.2,512.5 L272.7,514.1 L273.0,515.7 L273.3,517.3 L273.9,518.8 L274.3,520.4 L274.8,522.8 L275.9,525.1 L276.1,527.5 L276.6,530.0 L277.8,531.7 L277.5,533.7 L279.0,535.0 L279.9,536.8 L280.1,538.7 L279.5,540.6 L279.7,542.5 L279.0,544.3 L277.8,546.5 L276.8,548.8 L276.4,551.3 L275.4,553.6 L275.6,556.1 L275.3,558.6 L275.2,561.1 L274.3,563.4 L273.2,565.4 L271.7,567.1 L269.8,568.4 L267.7,569.1 L267.1,571.3 L267.5,573.5 L267.3,575.6 L267.1,577.8 L267.2,579.8 L267.6,581.7 L266.1,583.0 L265.2,584.8 L264.5,586.6 L264.4,588.4 L264.6,590.3 L264.7,592.1 L263.3,593.1 L262.0,594.3 L260.5,595.0 L259.1,596.1 L258.0,597.4 L256.9,598.7 L255.9,600.1 L255.1,601.7 M283.8,520.4 L284.8,522.6 L285.6,525.0 L286.0,527.4 L286.1,529.8 L286.6,532.2 L286.3,534.7 L286.3,537.1 L286.2,539.5 L286.9,541.5 L287.1,543.5 L288.2,545.3 L288.4,547.4 L289.8,549.0 L291.7,550.0 L292.3,552.1 L293.4,553.9 L294.4,555.5 L294.5,557.4 L294.8,559.2 L294.9,561.0 L295.2,562.9 L294.5,564.7 L295.4,566.4 L295.8,568.2 L295.5,570.0 L295.5,571.9 L295.3,573.7 L295.1,575.5 L295.0,577.4 L294.0,579.0 L293.8,580.8 L293.4,582.6 M307.7,510.8 L307.6,513.3 L307.1,515.6 L306.7,518.0 L306.4,520.4 L305.7,522.9 L305.6,525.4 L307.1,527.5 L307.7,530.0 L306.9,531.6 L306.2,533.3 L304.5,533.9 L303.1,535.0 L302.2,536.6 L300.5,537.4 L299.5,538.9 L299.1,540.6 L298.7,542.3 L297.6,543.7 L297.0,545.4 L297.1,547.2 L297.4,548.9 L296.7,550.6 L296.8,552.4 L295.8,553.9 M264.7,563.4 L267.1,564.6 L269.4,565.9 L271.8,567.1 L274.3,568.2 M336.4,568.2 L336.9,570.4 L337.7,572.4 L338.6,574.5 L340.5,575.9 L342.1,577.3 L343.7,578.8 L345.4,580.3 L346.0,582.6 L346.9,584.9 L348.0,587.1 L348.3,589.6 L348.4,592.1 L347.3,593.7 L346.8,595.6 L345.9,597.3 L345.0,599.0 L344.8,600.9 L345.0,602.9 L344.4,604.7 L343.6,606.5 M298.2,573.0 L300.1,574.5 L302.0,576.0 L304.4,576.5 L306.8,577.3 L307.9,579.4 L309.5,581.2 L310.9,583.2 L312.5,585.0 L314.7,586.1 L317.2,586.6 L319.6,587.4 L322.1,587.3 L323.6,587.9 L325.2,587.5 L326.8,587.3 L328.3,587.6 L329.9,587.3 L331.3,586.5 L332.7,585.9 L334.0,585.0 M350.8,420.0 L351.1,422.6 L352.8,424.7 L354.6,426.5 L356.1,428.6 L355.9,431.2 L356.3,433.7 L356.0,436.3 L356.8,438.7 L359.6,438.9 L362.3,439.7 L362.8,441.1 L363.4,442.4 L364.9,442.8 L366.2,443.6 L368.2,445.6 L368.5,448.3 L368.6,451.1 L369.9,453.5 L371.5,454.1 L372.9,455.0 L374.6,455.3 L376.2,455.9 L377.9,456.1 L379.6,455.8 L381.3,455.9 L383.0,455.9 M281.4,592.1 L282.4,594.3 L284.0,596.0 L285.7,597.7 L287.1,599.5 L288.4,601.6 L290.3,602.9 L291.7,604.8 L293.4,606.5 L293.3,608.4 L293.9,610.3 L293.6,612.2 L293.0,614.0 L292.0,615.6 L291.1,617.3 L289.5,618.4 L288.6,620.1 M312.5,587.3 L310.7,589.1 L308.6,590.5 L307.3,592.6 L305.7,594.5 L305.8,597.1 L305.5,599.7 L304.1,601.8 L302.9,604.1 L304.2,606.0 L305.4,608.1 L306.7,610.0 L307.5,612.2 L308.8,614.2 L310.3,616.0 L311.4,618.0 L312.5,620.1 M84.3,642.1 L86.5,641.3 L88.7,640.4 L91.0,640.9 L93.3,641.1 L95.4,640.3 L97.6,639.8 L99.9,639.6 L102.1,639.1 L102.8,640.6 L103.3,642.2 L104.0,643.7 L104.2,645.4 L104.9,647.0 L104.5,648.7 L104.8,650.3 L105.3,651.9 L104.2,653.9 L103.5,656.2 L102.3,658.2 L101.4,660.3 L100.6,662.6 L99.7,664.9 L97.7,666.3 L95.7,667.8 L94.2,667.4 L92.6,667.8 L91.0,667.6 L89.5,667.2 L88.4,668.3 L87.3,669.6 L85.6,669.6 L84.3,670.7 M95.7,680.6 L98.2,679.9 L100.6,679.5 L102.8,678.2 L105.0,677.1 L107.4,676.1 L109.9,676.1 L112.4,676.0 L114.9,675.8 L115.9,674.2 L117.5,673.1 L119.3,672.8 L121.1,672.2 L122.6,671.1 L123.9,669.9 L125.2,668.6 L126.1,667.1 L128.0,667.0 L129.7,667.7 L131.4,668.5 L133.2,668.9 L135.0,669.1 L136.8,668.5 L138.5,667.9 L140.4,667.8 L141.5,665.9 L142.4,663.9 L143.2,661.9 L143.9,659.8 L144.7,657.6 L146.6,656.3 L148.4,655.0 L149.9,653.5 L151.5,653.1 L153.1,653.1 L154.7,653.3 L156.3,653.1 L158.0,652.7 L159.6,653.5 L161.2,653.2 L162.7,652.6 L164.2,653.3 L165.9,652.9 L167.6,652.6 L169.0,651.8 L170.6,652.1 L172.2,652.2 L173.9,652.3 L175.4,651.9 L177.4,652.5 L179.4,653.0 L180.6,654.7 L182.2,656.1 L184.0,657.2 L185.1,658.9 L186.8,660.0 L188.2,661.4 L188.4,663.2 L188.7,665.1 L189.3,666.8 L189.9,668.5 L191.3,669.9 L192.9,670.8 L194.3,672.2 L194.6,674.2 L195.8,672.8 L197.3,671.7 L199.2,671.7 L201.0,671.2 L202.5,670.2 L204.0,669.3 L205.6,668.4 L207.3,667.8 L209.2,667.1 L211.3,667.1 L213.2,668.0 L215.3,667.8 L217.3,668.4 L219.3,667.5 L221.3,667.5 L223.2,667.8 L225.6,668.6 L228.1,669.1 L230.7,669.4 L232.8,671.0 L234.3,670.9 L235.8,671.2 L237.3,670.9 L238.8,670.8 L239.7,669.5 L241.1,668.8 L242.4,668.1 L243.6,667.2 L246.5,667.5 L249.4,667.2 L252.2,668.1 L255.1,667.8 M165.9,620.0 L165.7,622.6 L164.5,625.0 L163.2,627.2 L161.4,629.1 L161.7,631.6 L161.3,634.2 L161.5,636.8 L162.7,639.1 L164.4,640.7 L166.3,641.9 L168.3,643.0 L170.1,644.5 L171.3,646.4 L172.7,648.2 L174.3,649.9 L175.4,651.9 M197.7,620.0 L198.2,622.0 L198.6,624.1 L200.0,625.7 L200.7,627.7 L201.8,629.6 L203.5,630.9 L205.3,632.0 L207.3,632.7 L207.9,634.7 L208.7,636.6 L208.8,638.7 L209.4,640.7 L208.7,642.7 L207.9,644.6 L207.7,646.7 L207.3,648.7 L205.4,650.0 L203.8,651.6 L203.0,653.8 L201.3,655.5 L199.2,656.4 L197.0,657.4 L195.4,659.2 L194.6,661.4 M210.5,632.7 L213.3,632.4 L216.1,631.9 L219.0,631.8 L221.6,630.5 L224.4,630.7 L227.2,630.5 L230.0,630.1 L232.8,629.6 L234.2,628.5 L235.8,627.7 L236.7,626.1 L237.2,624.4 L238.4,623.2 L239.7,622.1 L240.8,620.7 L242.4,620.0 M207.3,667.8 L206.8,670.3 L206.2,672.8 L207.5,675.0 L207.4,677.7 L206.5,679.9 L205.6,682.2 L204.9,684.6 L204.1,686.9 L203.0,689.7 L202.2,692.5 L200.7,695.0 L199.4,697.7 L198.9,700.6 L198.2,703.4 L198.5,706.4 L197.7,709.2 L198.2,711.5 L198.2,713.8 L196.9,715.8 L194.8,716.9 L194.6,719.0 L194.6,721.1 L194.0,723.1 L194.6,725.2 M204.1,686.9 L205.5,688.4 L206.9,689.8 L207.9,691.6 L208.6,693.6 L209.6,695.3 L211.3,696.5 L212.9,697.8 L213.7,699.7 L212.8,701.7 L213.2,703.9 L213.2,706.1 L212.7,708.2 L213.9,709.9 L214.7,711.9 L215.6,713.9 L216.9,715.6 L219.3,714.8 L221.4,713.2 L223.9,713.0 L226.4,712.4 L228.3,713.3 L230.1,714.5 L232.0,715.3 L234.0,715.9 L236.0,716.8 L238.2,716.5 L240.4,716.4 L242.4,715.6 L241.9,717.4 L242.8,719.0 L244.0,720.3 L244.9,721.8 L245.5,723.4 L245.3,725.1 L245.0,726.7 L245.5,728.4 M102.1,674.2 L102.5,676.0 L102.5,677.8 L102.8,679.6 L103.1,681.4 L102.8,683.2 L102.9,685.0 L103.1,686.8 L102.9,688.6 L102.8,690.5 L103.6,692.2 L104.0,694.0 L104.7,695.6 L105.1,697.4 L105.3,699.2 L105.2,701.0 L105.3,702.9 M105.3,702.9 L106.6,704.4 L108.2,705.6 L109.8,706.8 L111.3,708.2 L113.1,709.1 L114.7,710.2 L116.5,711.2 L118.1,712.4 L119.5,713.9 L121.5,714.4 L123.2,715.5 L124.7,716.9 L126.0,718.4 L127.9,719.3 L129.2,720.8 L130.8,722.0 L132.9,721.6 L135.0,721.3 L137.2,721.5 L138.9,722.9 L141.0,723.4 L142.7,724.6 L144.7,725.1 L146.7,725.2 L147.7,723.2 L148.6,721.2 L149.2,719.0 L149.0,716.8 L150.3,715.0 L152.1,713.6 L153.2,711.6 L153.1,709.2 L151.2,707.1 L149.2,705.0 L148.0,702.3 L146.7,699.7 L145.0,699.3 L143.4,698.5 L141.8,697.6 L140.1,697.1 L138.9,695.7 L137.2,695.0 L135.5,694.3 L134.0,693.3 L131.7,692.2 L129.5,690.8 L126.9,690.7 L124.4,690.1 L122.7,689.7 L121.1,688.8 L119.7,687.6 L118.1,686.9 L115.8,688.3 L114.0,690.2 L112.9,692.6 L111.7,694.9 L110.5,697.2 L109.3,699.5 L107.4,701.3 L105.3,702.9 M84.3,730.9 L85.6,729.8 L87.2,729.5 L88.5,728.6 L89.9,727.8 L91.4,727.2 L92.8,726.4 L94.3,725.8 L95.7,725.2 L97.4,725.2 L99.1,725.5 L100.7,725.0 L102.2,724.2 L103.8,724.7 L105.5,724.7 L107.1,725.2 L108.7,724.9 L110.4,724.5 L112.0,724.8 L113.6,725.3 L115.2,725.7 L116.5,726.9 L118.0,727.6 L119.6,728.3 L121.2,728.4 L122.8,729.0 L124.2,730.0 L125.8,730.5 L127.5,730.6 L129.2,730.5 L130.7,729.9 L132.4,729.8 L134.0,729.3 L135.7,729.1 L137.2,729.9 L138.8,730.1 L140.5,730.1 L142.1,729.9 L143.8,729.9 L145.3,729.3 L146.7,728.4 L148.3,729.2 L149.5,730.4 L150.9,731.4 L152.2,732.5 L152.7,734.2 L153.7,735.6 L154.9,736.9 L156.3,737.9 L158.2,738.6 L160.2,739.2 L162.1,739.9 L164.1,740.6 L166.1,740.7 L168.1,741.3 L170.2,741.1 L172.2,741.1 L174.0,740.2 L175.7,739.2 L177.4,738.1 L179.0,736.8 L179.9,734.9 L181.2,733.3 L183.1,732.4 L185.0,731.6 L186.1,730.6 L187.1,729.4 L187.7,728.0 L188.7,726.8 L190.0,725.8 L191.5,725.5 L193.0,725.2 L194.6,725.2 L195.3,727.2 L196.3,729.1 L197.0,731.1 L197.8,733.1 L199.6,734.3 L201.6,735.0 L203.7,735.6 L205.6,736.4 L207.0,737.9 L208.6,739.2 L210.3,740.2 L212.2,741.0 L213.5,742.6 L215.0,743.9 L216.6,745.3 L216.9,747.5 L219.2,746.8 L221.6,746.3 L224.0,745.8 L226.4,746.0 L228.9,745.9 L231.4,746.2 L233.6,745.1 L236.0,744.3 L238.2,742.9 L240.7,742.4 L242.7,740.8 L245.1,739.7 L247.6,740.6 L249.9,742.0 L252.5,741.8 L255.1,741.1 M114.9,731.6 L115.5,733.9 L115.7,736.3 L115.7,738.7 L115.2,741.1 L115.9,743.5 L115.7,745.9 L115.7,748.4 L114.9,750.7 L116.0,752.1 L116.8,753.7 L117.9,755.1 L118.6,756.8 L119.4,758.4 L120.1,760.0 L120.4,761.8 L121.2,763.4 L123.1,763.3 L125.0,763.5 L126.5,764.6 L128.1,765.7 L129.0,767.4 L131.0,767.9 L132.5,768.7 L134.0,769.8 L134.5,767.7 L135.0,765.6 L135.9,763.6 L136.4,761.5 L137.0,759.4 L138.1,757.5 L139.1,755.6 L140.4,753.9 L140.1,751.0 L140.5,748.2 L141.4,745.5 L142.4,742.8 L141.6,741.5 L141.1,740.0 L141.5,738.5 L141.8,737.0 L142.2,734.1 L143.6,731.6 M143.6,731.6 L146.1,731.3 L148.2,732.7 L149.6,734.8 L152.0,735.5 L154.0,736.8 L156.2,737.7 L157.7,739.6 L159.5,741.1 L159.1,743.6 L159.1,746.0 L159.6,748.5 L160.5,750.8 L160.8,753.2 L161.7,755.5 L162.3,757.8 L162.7,760.2 L163.7,761.8 L165.4,762.4 L166.9,763.3 L168.5,763.9 L169.4,765.5 L170.7,766.6 L171.0,768.5 L172.2,769.8 L173.7,769.2 L174.8,768.1 L175.7,766.8 L177.2,766.2 L177.0,764.6 L177.4,763.1 L178.2,761.7 L178.6,760.2 L177.4,759.0 L176.6,757.3 L176.9,755.6 L177.1,753.8 L176.5,752.3 L175.8,750.8 L175.9,749.1 L175.4,747.5 M84.3,755.2 L85.1,756.8 L86.2,758.3 L87.8,759.3 L89.4,760.2 L91.5,761.8 L93.6,763.5 L95.4,765.5 L97.9,766.7 L100.4,765.6 L103.2,765.4 L105.9,765.9 L108.5,766.6 L110.1,766.6 L111.7,766.5 L113.3,766.9 L114.9,766.9 L116.5,766.5 L118.1,766.8 L119.7,766.7 L121.2,766.6 L122.9,767.2 L124.6,766.8 L126.1,767.9 L127.8,767.4 L129.4,767.9 L130.9,768.6 L132.6,768.7 L134.0,769.8 M89.4,760.2 L89.4,761.8 L89.3,763.3 L89.7,764.8 L90.8,765.9 L90.5,768.9 L91.2,771.8 L91.5,774.8 L92.8,777.5 L93.9,778.4 L94.8,779.7 L95.1,781.2 L95.7,782.5 L96.1,785.0 L96.1,787.5 L95.5,789.9 L94.7,792.2 L94.5,794.7 L93.3,796.9 L92.7,799.2 L92.6,801.7 M108.5,769.8 L108.9,771.9 L108.8,774.0 L108.5,776.0 L108.4,778.1 L109.4,780.0 L109.7,782.1 L110.6,784.0 L111.7,785.7 L111.0,787.3 L110.7,789.0 L110.9,790.7 L111.1,792.4 L110.6,794.0 L110.4,795.7 L109.6,797.2 L108.5,798.5 L108.7,800.8 L110.1,802.7 L112.0,804.1 L113.6,805.7 L113.6,807.9 L113.6,810.2 L114.6,812.2 L114.9,814.4 L117.0,816.5 L119.8,817.4 L122.2,819.0 L124.9,820.1 L127.6,821.4 L129.4,823.7 L131.7,825.4 L134.0,827.2 L136.5,825.7 L138.7,823.8 L141.4,822.8 L143.6,820.8 L143.4,819.1 L143.7,817.5 L144.1,815.8 L144.0,814.1 L145.1,812.7 L146.3,811.5 L146.5,809.8 L146.7,808.0 L147.3,806.6 L148.5,805.5 L149.9,804.9 L151.1,804.0 L151.8,802.6 L152.6,801.4 L153.5,800.2 L154.6,799.2 L157.4,798.0 L160.3,797.4 L163.2,796.7 L165.9,795.3 L166.9,793.5 L168.0,791.7 L169.1,789.9 L170.6,788.5 L170.8,786.3 L171.3,784.3 L170.3,782.3 L170.4,780.1 L171.2,778.2 L171.1,776.1 L172.4,774.4 L173.8,772.9 L174.9,771.3 L176.0,769.6 L177.1,768.0 L178.6,766.6 M178.6,766.6 L180.3,768.6 L181.8,770.7 L182.9,773.1 L184.1,775.4 L184.6,778.0 L184.5,780.6 L185.1,783.1 L185.0,785.7 L187.2,787.3 L189.8,787.5 L191.9,789.0 L194.0,790.5 L196.6,790.8 L199.1,791.5 L201.6,791.5 L204.1,792.1 L205.3,794.1 L206.9,795.7 L208.2,797.7 L210.5,798.5 L208.5,799.8 L206.6,801.3 L204.8,803.3 L205.2,806.0 L203.8,807.9 L202.3,809.7 L200.0,810.4 L197.7,811.2 L199.6,812.6 L201.4,814.0 L202.7,815.9 L204.1,817.6 L206.0,816.8 L207.9,816.0 L210.0,815.7 L211.8,814.5 L212.8,812.7 L213.8,810.9 L214.8,808.9 L216.9,808.0 L217.8,809.7 L219.5,810.6 L220.3,812.2 L221.1,813.9 L221.5,815.7 L221.7,817.5 L223.1,818.9 L223.2,820.8 L224.1,823.3 L225.9,825.2 L227.3,827.7 L226.4,830.4 L228.3,830.3 L230.0,829.6 L231.8,829.3 L233.4,828.4 L234.6,826.9 L236.1,826.0 L237.4,824.6 L239.2,824.0 M146.7,808.0 L145.5,809.8 L144.4,811.7 L143.5,813.6 L142.6,815.6 L141.9,817.7 L141.5,819.8 L141.0,821.9 L140.4,824.0 L141.9,826.1 L143.3,828.3 L143.8,830.9 L143.6,833.5 L145.6,833.1 L147.7,833.4 L149.6,832.4 L151.6,831.7 L153.6,832.1 L155.7,832.0 L157.7,832.5 L159.8,832.4 L161.7,833.1 L163.6,833.7 L165.7,834.1 L167.7,834.2 L169.8,834.4 L171.9,834.4 L173.4,835.9 L175.4,836.7 L177.1,835.1 L179.4,834.3 L181.4,833.1 L183.5,832.2 L185.3,830.6 L187.6,829.9 L189.7,828.8 L191.4,827.2 L192.5,825.7 L194.0,824.5 L195.8,824.0 L197.7,823.8 L199.2,822.8 L200.9,822.3 L202.6,821.8 L204.1,820.8 M84.3,823.3 L85.6,822.4 L87.2,821.9 L88.5,821.0 L90.2,820.8 L91.5,819.8 L92.7,818.7 L94.2,818.2 L95.7,817.6 L97.3,817.0 L98.8,816.2 L100.5,816.6 L102.2,816.3 L103.7,815.6 L105.1,814.6 L106.8,814.8 L108.5,814.4 M111.7,830.4 L111.2,832.0 L111.6,833.7 L111.5,835.4 L110.8,836.9 L109.6,838.3 L109.9,840.1 L109.4,841.7 L108.5,843.1 L109.9,845.3 L111.7,847.2 L112.7,849.6 L113.5,852.1 L113.0,854.7 L112.9,857.3 L113.1,860.1 L114.9,862.2 L113.4,864.0 L111.4,865.2 L109.6,866.5 L107.7,867.8 L107.1,870.1 L106.0,872.2 L104.3,874.0 L102.1,875.0 L99.8,875.3 L97.5,875.6 L95.3,874.8 L93.0,874.9 L91.4,876.9 L88.9,877.3 L86.6,877.7 L84.3,878.0 M130.8,881.4 L130.3,879.2 L129.3,877.3 L127.2,876.6 L125.3,875.5 L124.8,873.5 L123.8,871.7 L122.7,870.0 L121.2,868.6 L123.0,868.6 L124.6,868.2 L126.3,867.8 L128.0,867.6 L129.8,867.9 L131.5,867.2 L132.9,868.5 L134.8,868.5 L136.3,867.7 L137.5,866.5 L139.2,866.0 L140.7,865.2 L141.9,864.0 L143.6,863.5 L145.3,863.2 L146.7,862.2 L148.9,862.4 L151.0,862.5 L152.9,861.4 L154.6,860.2 L156.7,859.8 L158.7,860.2 L160.7,859.6 L162.7,859.0 L164.0,860.8 L164.8,862.8 L165.2,864.9 L166.1,866.9 L166.9,868.9 L167.3,871.0 L168.3,873.0 L169.1,875.0 L168.0,876.7 L166.5,878.0 L165.3,879.6 L164.4,881.5 L163.7,883.4 L162.5,885.0 L160.9,886.2 L159.5,887.7 L158.9,889.6 L157.3,890.7 L157.1,892.6 L157.6,894.5 L156.3,895.6 L155.3,897.1 L154.1,898.4 L153.1,899.8 M175.4,836.7 L175.1,838.7 L175.5,840.7 L176.4,842.5 L177.7,844.1 L178.7,845.7 L180.3,846.9 L181.3,848.6 L182.7,849.9 L182.6,852.0 L183.1,853.9 L184.4,855.5 L185.6,857.1 L186.9,858.5 L188.3,859.9 L189.7,861.2 L191.4,862.2 L193.0,862.3 L194.6,861.8 L196.3,861.6 L197.9,861.3 L199.4,860.4 L200.7,859.3 L202.4,859.1 L204.1,859.0 L205.7,858.1 L207.0,856.8 L208.3,855.6 L209.9,854.7 L211.6,853.9 L213.4,853.8 L215.2,853.5 L216.9,852.7 L218.4,853.3 L220.0,853.7 L221.6,854.1 L223.1,854.8 L224.7,855.4 L226.2,856.1 L227.9,856.2 L229.6,855.9 L230.8,857.1 L232.1,858.3 L233.8,858.9 L235.3,859.7 L236.5,861.0 L237.7,862.3 L238.5,863.8 L239.2,865.4 L240.6,866.3 L242.3,866.3 L243.9,866.9 L245.5,867.3 L247.0,867.9 L248.7,867.8 L250.3,868.2 L251.9,868.6 M223.2,820.8 L225.3,820.8 L227.2,821.6 L229.2,822.0 L231.2,821.3 L233.2,821.8 L235.2,821.4 L237.2,821.2 L239.2,820.8 L241.2,820.6 L243.2,821.1 L245.1,822.1 L247.2,822.2 L248.9,823.6 L251.1,823.5 L253.0,824.4 L255.1,824.0 M236.0,843.1 L237.8,844.7 L239.9,845.9 L242.3,845.9 L244.6,846.8 L246.9,847.8 L248.1,849.9 L250.5,850.7 L251.9,852.7 M226.4,753.9 L227.8,755.6 L229.5,757.2 L231.4,758.4 L232.8,760.2 L235.1,761.9 L237.6,763.5 L240.2,764.6 L242.4,766.6 L242.6,764.9 L242.4,763.3 L242.0,761.6 L241.4,760.1 L240.2,758.8 L239.2,757.3 L239.3,755.6 L239.2,753.9 L237.5,753.2 L236.1,752.0 L234.5,751.3 L232.8,750.7 L230.9,750.8 L229.0,751.0 L227.7,752.5 L226.4,753.9 M255.1,667.8 L257.5,669.0 L259.5,670.7 L262.0,671.4 L264.7,671.0 L266.6,672.0 L268.8,672.3 L271.0,672.5 L272.9,673.6 L274.7,674.8 L276.5,675.9 L278.6,676.7 L280.6,677.4 L283.4,677.4 L286.2,676.7 L289.0,676.2 L291.8,676.9 L294.6,676.5 L297.4,676.5 L300.1,677.3 L302.9,677.4 L304.0,678.5 L305.2,679.3 L306.7,679.7 L308.1,680.2 L309.4,682.8 L311.1,685.3 L312.0,688.0 L311.9,690.9 L312.6,693.6 L312.5,696.5 L311.0,697.4 L309.3,698.1 L307.7,698.9 L306.1,699.7 L304.2,698.4 L302.2,697.2 L301.2,695.1 L299.7,693.3 L300.4,695.7 L301.1,698.2 L301.3,700.8 L302.9,702.9 L304.4,703.9 L306.0,704.9 L307.8,705.1 L309.7,705.3 L310.8,706.8 L312.4,707.6 L314.3,708.0 L315.7,709.2 L317.6,711.4 L319.7,713.5 L319.8,715.0 L320.0,716.5 L321.4,717.4 L322.0,718.8 L322.1,720.5 L322.6,722.0 L323.5,723.5 L323.4,725.2 L324.3,726.7 L324.0,728.5 L324.9,729.9 L325.2,731.6 L326.4,732.6 L327.7,733.2 L328.6,734.4 L329.7,735.5 L330.7,738.3 L331.6,741.1 M261.5,620.0 L262.3,622.3 L263.0,624.7 L262.6,627.4 L264.4,629.3 L264.2,631.8 L264.5,634.2 L264.7,636.7 L264.7,639.1 L266.5,641.0 L269.0,642.1 L271.6,643.0 L274.2,642.3 L276.0,642.0 L277.8,641.4 L279.5,640.7 L280.7,639.2 L282.4,638.8 L283.9,637.8 L285.6,637.0 L287.0,635.9 L289.4,636.3 L291.9,636.0 L294.2,636.9 L296.5,637.8 L298.7,639.1 L301.2,639.0 L303.7,638.3 L306.1,639.1 L305.0,636.8 L303.4,634.7 L303.6,632.1 L302.9,629.6 L300.8,628.9 L298.7,628.4 L296.5,628.3 L294.4,627.8 L292.7,626.4 L291.0,625.0 L289.1,623.9 L287.0,623.2 M264.7,651.9 L266.6,650.8 L268.8,650.7 L270.9,649.9 L272.5,648.4 L274.6,648.0 L276.6,647.0 L278.8,646.7 L280.6,645.5 L283.1,645.6 L285.5,645.0 L287.9,645.6 L290.4,646.0 L292.9,645.8 L295.2,646.7 L297.6,647.5 L299.7,648.7 L301.5,650.0 L303.6,650.5 L305.8,650.9 L307.9,651.4 L309.8,652.4 L312.0,652.8 L314.0,653.7 L315.7,655.1 L317.8,654.8 L319.8,654.2 L321.9,654.9 L324.1,654.6 L326.0,655.5 L327.7,656.6 L329.3,658.2 L331.6,658.2 L331.1,659.8 L330.4,661.3 L330.4,663.0 L330.7,664.6 L331.1,666.2 L331.9,667.7 L332.3,669.4 L331.6,671.0 L330.1,672.5 L328.1,673.3 L326.9,675.0 L326.4,677.0 L325.5,678.8 L324.2,680.4 L322.7,681.8 L322.0,683.7 L321.6,685.8 L320.8,687.7 L319.8,689.5 L318.9,691.4 L319.4,693.5 L319.7,695.6 L318.5,697.5 L318.9,699.7 M318.9,620.0 L320.4,621.8 L320.9,624.2 L321.9,626.3 L323.1,628.3 L325.5,629.3 L326.2,631.8 L327.1,634.0 L328.4,635.9 L328.5,637.9 L328.2,639.9 L327.8,641.9 L327.7,643.9 L327.1,645.9 L326.7,648.0 L327.4,650.0 L328.4,651.9 M331.6,658.2 L333.7,657.1 L335.8,656.3 L337.8,655.0 L340.0,654.1 L341.1,652.0 L343.0,650.3 L345.2,649.4 L347.5,648.7 L348.9,650.3 L350.8,651.2 L352.1,652.7 L353.0,654.5 L353.6,656.5 L355.1,658.0 L356.4,659.5 L357.1,661.4 L358.4,662.7 L359.8,664.0 L360.4,665.7 L361.1,667.4 L361.5,669.2 L362.3,670.8 L362.7,672.5 L363.5,674.2 L363.4,675.8 L363.8,677.3 L365.0,678.2 L366.2,679.3 L368.4,681.2 L369.9,683.7 L372.5,683.9 L375.1,684.3 L377.5,683.0 L379.9,682.0 L382.2,680.5 L383.7,678.3 L386.3,677.7 L389.0,677.4 L389.9,675.1 L390.0,672.7 L390.5,670.3 L392.1,668.4 L393.7,666.7 L395.3,664.9 L397.0,663.2 L398.5,661.4 L400.3,661.0 L402.0,661.2 L403.4,660.1 L404.7,658.9 L406.3,658.5 L408.0,658.7 L409.7,658.5 L411.3,658.2 L413.7,658.9 L416.1,659.8 L418.7,660.1 L420.8,661.4 M357.1,620.0 L357.6,621.8 L357.5,623.7 L358.2,625.4 L359.4,626.8 L359.7,628.7 L361.0,630.1 L362.4,631.3 L363.5,632.7 L361.8,633.4 L360.1,634.0 L358.4,634.5 L357.0,635.8 L355.5,636.8 L353.9,637.5 L352.3,638.4 L350.7,639.1 L349.1,641.3 L347.4,643.3 L347.6,646.0 L347.5,648.7 M363.5,620.0 L365.7,620.6 L367.1,622.4 L368.8,623.8 L370.5,625.1 L372.7,625.4 L374.8,626.2 L376.8,627.1 L378.5,628.6 L380.7,629.1 L382.8,629.7 L384.7,631.0 L386.3,632.6 L388.4,633.5 L389.9,635.3 L391.5,636.9 L392.2,639.1 L394.4,640.0 L395.4,642.1 L397.3,643.4 L399.3,644.3 L401.4,645.2 L403.6,646.0 L405.8,645.7 L408.1,645.5 L407.6,647.1 L407.3,648.6 L407.6,650.2 L407.6,651.9 L407.9,653.5 L408.5,655.0 L408.5,656.6 L408.1,658.2 M420.8,661.4 L421.8,663.6 L422.6,665.8 L424.6,667.1 L426.2,668.8 L428.1,670.2 L430.3,670.9 L432.5,672.0 L433.6,674.2 L434.8,676.5 L436.4,678.7 L438.3,680.6 L439.7,682.8 L442.1,684.1 L444.6,684.9 L447.1,685.8 L449.5,686.9 L449.3,689.0 L449.9,691.0 L449.7,693.1 L450.4,695.0 L451.3,696.9 L451.6,698.9 L452.4,700.9 L452.7,702.9 L453.4,704.8 L454.1,706.7 L455.4,708.3 L456.3,710.1 L457.7,711.6 L459.0,713.2 L460.7,714.4 L462.3,715.6 L464.9,716.1 L467.5,716.3 L470.1,716.0 L472.7,716.9 L475.3,717.4 L477.9,717.6 L480.6,717.7 L483.0,718.8 M452.7,620.0 L453.8,621.2 L454.9,622.3 L455.6,623.7 L456.6,624.9 L456.8,626.5 L457.5,628.0 L458.6,629.2 L459.6,630.4 L459.5,632.0 L459.8,633.7 L460.0,635.3 L459.6,636.9 L458.8,638.5 L457.4,639.4 L456.4,640.7 L455.9,642.3 L455.5,644.1 L454.9,645.9 L453.2,646.6 L451.6,647.6 L450.3,648.7 L448.9,649.6 L447.5,650.6 L446.3,651.9 L446.2,654.1 L446.0,656.4 L445.1,658.5 L444.8,660.7 L445.6,662.8 L445.9,665.1 L445.2,667.3 L445.4,669.6 L446.0,671.8 L446.9,673.9 L447.1,676.1 L447.0,678.4 L447.7,680.5 L448.7,682.5 L449.7,684.6 L449.5,686.9 M465.5,690.1 L464.8,692.2 L464.6,694.4 L464.2,696.6 L462.7,698.3 L461.9,700.2 L461.1,702.2 L459.3,703.7 L459.1,706.1 L460.6,705.6 L461.9,704.6 L463.2,703.6 L464.5,702.7 L466.1,702.8 L467.6,702.2 L469.1,701.6 L470.5,700.7 L472.1,700.7 L473.6,701.1 L475.3,700.7 L476.8,701.4 L478.3,700.7 L479.7,699.8 L481.4,700.0 L483.0,699.7 M328.4,741.1 L328.8,742.9 L329.7,744.6 L331.5,745.0 L333.1,746.0 L334.3,747.2 L335.4,748.5 L336.1,750.1 L337.8,750.8 L339.3,751.8 L340.4,753.1 L342.2,753.5 L343.4,754.8 L345.1,755.7 L345.4,757.6 L346.2,759.2 L347.5,760.2 L350.4,760.9 L353.2,760.6 L355.9,761.6 L358.7,762.1 L361.5,761.1 L364.4,761.8 L367.1,761.0 L369.9,760.2 L371.5,760.5 L373.2,760.2 L375.0,760.4 L376.6,759.8 L378.2,759.3 L379.9,759.0 L381.6,758.9 L383.1,758.0 L384.8,758.1 L386.4,758.7 L387.9,759.5 L389.4,760.3 L390.8,761.2 L392.4,761.9 L393.7,763.0 L395.4,763.4 L397.8,765.0 L400.7,765.2 L403.5,766.5 L406.4,765.9 L409.2,766.8 L411.9,768.1 L414.9,767.6 L417.7,766.6 L419.6,765.6 L421.8,765.2 L424.0,765.0 L426.1,765.7 L427.5,767.5 L429.6,768.2 L431.8,768.6 L433.6,769.8 L434.8,767.9 L436.3,766.2 L437.9,764.5 L439.2,762.6 L440.7,760.9 L442.3,759.3 L444.2,757.8 L446.3,757.1 L447.2,755.2 L447.6,753.2 L448.4,751.3 L448.4,749.2 L449.7,747.4 L450.3,745.3 L450.0,743.2 L449.5,741.1 L450.6,739.3 L450.8,737.2 L450.6,735.2 L451.1,733.2 L451.6,731.1 L451.5,729.1 L452.6,727.3 L452.7,725.2 L453.9,723.9 L455.0,722.5 L455.5,720.7 L456.2,719.1 L458.0,718.7 L459.7,718.2 L461.3,717.2 L462.3,715.6 M398.5,731.6 L400.6,731.0 L402.5,729.8 L404.4,728.8 L406.6,728.6 L408.8,728.2 L410.7,727.3 L412.4,726.0 L414.5,725.2 L415.1,726.7 L416.1,727.9 L417.0,729.2 L418.1,730.4 L418.5,731.9 L419.3,733.3 L420.3,734.5 L421.0,735.9 L422.2,737.0 L423.7,737.7 L424.9,738.6 L426.3,739.5 L427.6,740.5 L429.0,741.3 L429.6,742.9 L430.4,744.3 L427.9,744.7 L425.4,745.2 L423.2,746.5 L420.8,747.5 L419.4,746.2 L417.8,744.9 L416.0,743.9 L414.5,742.7 L412.7,741.8 L410.9,740.8 L409.8,739.1 L408.1,737.9 L405.4,736.9 L402.6,735.8 L400.5,733.7 L398.5,731.6 M318.9,741.1 L320.0,742.2 L320.5,743.7 L321.2,745.1 L321.7,746.6 L323.1,747.1 L324.5,747.8 L325.9,748.5 L327.0,749.5 L328.2,750.5 L329.3,751.5 L330.8,752.0 L332.2,752.5 L333.4,753.5 L334.9,754.2 L336.4,754.0 L338.0,753.9 L338.0,755.6 L338.9,757.2 L339.3,758.9 L339.3,760.6 L340.0,762.2 L340.7,763.7 L341.8,765.1 L342.1,766.9 L342.5,768.6 L343.6,770.0 L343.9,771.7 L344.2,773.4 L344.8,775.0 L345.3,776.7 L346.5,778.0 L347.5,779.4 L347.5,781.0 L347.7,782.6 L347.6,784.2 L347.1,785.7 L347.3,787.3 L347.7,788.9 L348.1,790.5 L347.5,792.1 L345.3,793.4 L342.9,794.5 L341.0,796.2 L339.2,798.0 L337.2,799.7 L335.0,801.0 L333.1,802.7 L331.6,804.9 L329.9,806.4 L328.7,808.3 L326.9,809.8 L325.0,811.0 L323.0,812.2 L320.9,813.3 L320.2,815.6 L318.9,817.6 L317.2,820.0 L316.1,822.7 L314.2,824.8 L312.5,827.2 L310.4,827.7 L308.4,826.8 L306.4,826.2 L304.6,825.2 L302.5,825.0 L300.7,823.8 L298.6,824.1 L296.5,824.0 L295.7,821.7 L295.1,819.3 L294.9,816.9 L293.9,814.6 L293.2,812.2 L293.8,809.7 L293.9,807.3 L293.4,804.9 L292.0,802.5 L291.6,799.8 L291.2,797.0 L289.5,794.8 L288.4,792.3 L287.7,789.7 L285.8,787.6 L283.8,785.7 L285.2,783.8 L285.8,781.4 L287.2,779.5 L289.2,778.1 L290.4,776.1 L291.1,773.9 L292.2,771.8 L293.4,769.8 L294.5,767.8 L296.3,766.3 L297.8,764.7 L299.3,763.0 L301.1,761.7 L302.6,759.9 L304.4,758.5 L306.1,757.1 L308.0,755.2 L310.0,753.5 L310.5,750.8 L311.7,748.4 L313.6,746.7 L315.5,745.0 L317.2,743.1 L318.9,741.1 M347.5,792.1 L349.6,791.8 L351.5,791.3 L353.5,790.7 L355.4,790.2 L357.5,790.0 L359.5,789.8 L361.5,789.3 L363.5,788.9 L364.9,789.9 L366.3,790.9 L367.2,792.4 L368.3,793.7 L369.4,795.0 L370.4,796.4 L371.7,797.5 L373.0,798.5 L372.8,800.2 L371.9,801.6 L371.1,803.1 L370.6,804.6 L370.7,806.4 L371.3,808.1 L370.7,809.7 L369.9,811.2 L368.2,812.3 L366.5,813.3 L365.1,814.8 L363.4,815.9 L361.4,816.4 L359.6,817.6 L358.3,819.1 L357.1,820.8 L354.8,821.8 L352.5,822.8 L349.9,822.9 L347.5,823.8 L345.0,824.7 L342.4,824.5 L340.2,825.9 L338.0,827.2 L335.4,826.1 L333.7,823.9 L331.6,822.2 L328.9,821.4 L326.3,820.6 L323.9,819.3 L321.3,818.9 L318.9,817.6 M369.9,811.2 L371.9,811.0 L373.6,811.9 L375.1,813.2 L377.0,813.8 L378.6,814.8 L380.2,815.9 L381.8,816.9 L383.2,818.2 L384.7,819.4 L386.5,820.1 L387.7,821.6 L389.1,822.9 L390.5,824.2 L392.3,824.9 L393.5,826.6 L395.4,827.2 L397.0,827.2 L398.7,827.3 L400.2,827.9 L401.8,828.4 L403.4,828.9 L405.0,829.4 L406.6,829.7 L408.1,830.4 L409.5,832.3 L410.1,834.6 L410.6,837.1 L412.7,838.4 L414.4,840.5 L414.0,843.1 L415.7,844.8 L417.7,846.3 L419.8,847.7 L422.1,848.9 L424.6,849.9 L427.2,849.5 L429.2,850.2 L431.3,849.8 L433.4,850.1 L435.4,849.9 L437.6,850.1 L439.8,850.0 L441.6,851.1 L443.2,852.7 L445.7,853.2 L448.0,852.2 L450.5,852.2 L452.9,852.4 L455.3,851.7 L457.7,851.1 L460.1,850.6 L462.3,849.5 L464.9,850.3 L467.3,851.5 L470.0,852.2 L472.6,852.9 L475.4,852.6 L478.2,853.0 L480.4,854.7 L483.0,855.9 M443.2,766.6 L442.5,768.9 L442.9,771.2 L442.6,773.6 L443.2,775.8 L444.6,777.6 L446.2,779.3 L447.9,780.9 L449.5,782.5 L451.3,784.5 L452.7,786.7 L454.5,788.8 L457.1,789.6 L457.8,792.2 L458.3,794.8 L460.6,796.4 L462.3,798.5 L462.6,800.3 L462.0,802.1 L463.1,803.5 L464.4,804.7 L464.8,806.4 L465.7,807.9 L465.8,809.6 L465.5,811.2 L467.6,812.0 L469.9,811.5 L472.1,811.6 L474.2,811.0 L476.5,811.4 L478.6,810.8 L480.9,810.4 L483.0,811.2 M255.1,817.6 L256.9,815.7 L259.3,814.6 L261.9,814.4 L264.3,813.4 L266.7,812.4 L269.1,811.7 L271.7,811.6 L274.2,811.2 L275.9,811.0 L277.6,811.2 L279.2,811.6 L280.9,811.7 L282.4,812.5 L283.9,813.2 L285.6,813.4 L287.0,814.4 L286.0,815.9 L285.9,817.6 L285.4,819.2 L285.1,820.9 L285.3,822.5 L285.3,824.2 L285.8,825.9 L285.3,827.6 L286.2,829.0 L287.3,830.3 L287.5,832.0 L287.9,833.7 L288.6,835.3 L289.7,836.6 L289.6,838.3 L290.2,839.9 L290.9,837.9 L292.8,836.9 L294.0,835.3 L294.8,833.4 L296.1,831.9 L297.4,830.4 L298.3,828.6 L299.7,827.2 M255.1,824.0 L255.8,826.6 L256.8,829.2 L256.9,831.9 L257.9,834.5 L258.7,837.3 L260.1,839.7 L262.5,841.4 L264.7,843.1 L265.3,845.7 L266.7,848.1 L266.8,850.9 L268.6,853.1 L269.9,855.5 L270.8,858.0 L272.5,860.2 L274.2,862.2 L273.3,864.4 L272.0,866.2 L270.3,867.9 L269.0,869.8 L267.0,870.9 L265.6,872.9 L263.6,874.0 L261.5,875.0 L261.8,877.0 L262.4,879.0 L263.1,880.9 L264.1,882.7 L264.6,884.8 L264.5,886.8 L263.9,888.9 L264.7,890.9 M318.9,827.2 L320.2,829.1 L322.4,829.8 L322.5,832.0 L322.5,834.2 L323.6,835.8 L323.8,837.8 L324.7,839.6 L325.6,841.4 L327.0,842.8 L328.3,844.4 L328.9,846.4 L328.9,848.5 L329.4,850.4 L330.1,852.2 L331.0,854.0 L331.6,855.9 L330.8,858.5 L330.5,861.2 L331.7,863.6 L332.7,866.1 L334.2,868.3 L335.9,870.2 L337.4,872.4 L338.0,875.0 L340.3,876.2 L342.8,876.0 L345.0,874.8 L347.5,874.5 L350.0,874.3 L352.4,874.1 L354.8,874.3 L357.1,875.0 L357.4,876.8 L358.0,878.4 L358.5,880.2 L358.6,882.0 L359.5,883.6 L360.2,885.2 L361.4,886.6 L362.8,887.8 L364.0,889.0 L364.9,890.5 L366.0,891.9 L366.7,893.6 L367.7,895.1 L368.1,896.8 L368.6,898.5 L369.9,899.8 M427.2,849.5 L427.6,851.1 L427.7,852.7 L428.4,854.2 L428.5,855.9 L428.7,857.5 L428.5,859.2 L427.8,860.7 L427.2,862.2 L429.2,862.2 L431.2,861.9 L433.4,861.4 L435.2,862.6 L437.2,862.7 L439.2,862.6 L441.1,861.9 L443.2,862.2 L442.5,860.7 L442.1,859.1 L442.4,857.4 L441.6,855.8 L441.4,854.2 L440.7,852.7 L440.0,851.2 L440.0,849.5 M443.2,862.2 L443.1,864.6 L442.4,866.9 L442.8,869.3 L443.1,871.7 L442.9,874.1 L443.3,876.4 L443.8,878.7 L444.4,881.0 L445.5,883.3 L446.2,885.7 L446.1,888.2 L447.0,890.6 L445.8,892.9 L444.8,895.2 L443.9,897.5 L443.2,899.8 M274.2,862.2 L275.4,864.2 L276.4,866.3 L278.2,867.8 L279.3,869.9 L281.1,871.5 L283.3,872.2 L285.6,873.0 L287.0,875.0 L289.5,874.6 L292.1,874.4 L294.5,873.3 L297.1,873.4 L298.9,871.4 L301.5,870.9 L303.8,869.7 L306.1,868.6 L307.9,866.5 L309.5,864.2 L312.3,864.0 L314.9,863.1 L317.5,862.7 L320.1,863.1 L322.7,862.8 L325.2,862.2 M383.0,446.2 L385.2,445.6 L386.9,444.1 L389.1,444.3 L391.3,444.1 L393.3,442.1 L395.4,440.0 M412.0,440.0 L413.2,441.9 L413.2,444.1 L413.6,446.2 L414.1,448.3 L411.6,449.6 L409.3,451.3 L406.3,451.1 L403.7,452.4 L401.9,454.7 L399.6,456.6 L399.8,458.1 L399.9,459.7 L400.2,461.3 L400.3,462.8 L400.2,464.4 L400.4,466.1 L401.1,467.5 L401.6,469.0 L402.9,470.2 L403.9,471.5 L405.1,472.8 L406.7,473.5 L407.5,474.9 L408.5,476.3 L408.7,478.1 L409.9,479.4 L410.6,481.9 L410.7,484.6 L411.2,487.2 L412.0,489.7 L411.4,491.4 L410.6,492.9 L409.5,494.3 L408.9,496.0 L408.2,497.5 L407.7,499.2 L406.6,500.6 L405.8,502.2 L405.0,503.7 L404.2,505.2 L403.4,506.7 L403.0,508.4 L401.7,509.5 L400.3,510.5 L399.1,511.8 L397.5,512.5 L398.9,514.3 L399.0,516.5 L398.6,518.8 L399.6,520.8 M401.6,469.0 L399.4,470.8 L396.7,471.5 L393.8,471.8 L391.3,473.1 L390.6,475.2 L390.2,477.3 L389.5,479.3 L388.6,481.3 L388.0,483.3 L387.7,485.5 L387.7,487.6 L387.1,489.7 L387.6,491.5 L387.3,493.4 L387.4,495.3 L387.2,497.1 L387.8,498.9 L388.6,500.6 L389.4,502.3 L389.2,504.2 L389.2,506.4 L389.6,508.6 L389.1,510.8 L388.1,512.8 L387.7,514.9 L387.5,517.1 L386.0,518.8 L385.1,520.8 M383.0,471.1 L384.7,471.4 L386.4,471.1 L387.7,472.3 L389.2,473.1 M399.6,520.8 L401.4,520.8 L403.3,520.7 L405.1,520.1 L406.8,519.3 L408.8,519.3 L410.5,520.2 L412.3,519.5 L414.1,518.7 L415.0,517.4 L416.4,516.8 L417.7,516.0 L418.4,514.6 L419.9,514.7 L421.4,514.9 L423.0,514.9 L424.4,514.6 L427.1,514.7 L429.7,514.6 L432.2,513.6 L434.8,513.2 L437.4,512.8 L439.9,512.3 L442.5,513.4 L445.2,512.5 L447.0,510.2 L449.3,508.4 L450.7,507.1 L452.2,505.9 L453.6,504.6 L455.0,503.2 L455.3,501.3 L456.0,499.4 L457.1,497.8 L457.6,495.9 L459.7,495.7 L461.8,496.1 L463.7,495.4 L465.8,495.1 L467.8,494.4 L469.2,492.7 L470.7,491.3 L472.1,489.7 L473.3,488.4 L474.8,487.7 L476.6,487.5 L478.3,487.6 L480.7,487.5 L482.9,486.8 L485.3,486.7 L487.6,486.9 L490.0,487.0 L492.4,486.7 L494.6,485.8 L496.9,485.6 M449.3,508.4 L451.0,510.7 L452.4,513.1 L453.4,515.8 L453.4,518.7 L453.6,520.3 L454.0,521.9 L454.2,523.5 L453.7,525.1 L454.0,526.6 L454.2,528.2 L455.5,529.4 L455.5,531.2 L456.3,533.3 L456.0,535.5 L456.0,537.7 L456.0,539.8 L456.5,542.0 L458.0,543.7 L458.7,545.8 L459.7,547.7 L461.5,548.4 L463.4,549.2 L464.3,551.3 L466.6,551.5 L468.6,551.9 L470.4,552.8 L472.4,552.8 L474.2,553.9 L476.3,553.7 L478.4,553.6 L480.4,554.1 L482.5,554.2 L484.5,555.3 L486.3,556.7 L488.5,556.3 L490.7,556.0 L492.0,558.3 L493.9,560.1 L495.7,562.0 L496.9,564.3 M453.4,504.2 L455.7,504.8 L457.7,506.0 L459.7,507.2 L461.6,508.6 L463.7,509.5 L465.9,510.4 L468.2,510.9 L470.0,512.5 L472.2,514.0 L473.7,516.2 L476.3,517.0 L478.3,518.7 L477.8,520.3 L476.8,521.6 L477.0,523.2 L476.6,524.8 L476.3,526.4 L476.2,528.0 L475.9,529.6 L476.2,531.2 L477.8,532.7 L479.6,534.0 L480.6,536.0 L482.4,537.4 L484.0,536.7 L485.6,536.4 L487.2,536.0 L488.7,535.3 L490.2,533.7 L491.9,532.3 L492.2,530.1 L492.8,528.0 L493.5,526.1 L494.4,524.1 L495.7,522.5 L496.9,520.8 M383.0,543.6 L384.7,543.8 L386.3,544.4 L387.7,545.2 L389.0,546.3 L390.8,545.8 L392.6,545.5 L393.6,547.1 L395.4,547.7 L398.1,547.4 L400.8,547.6 L403.2,548.9 L405.8,549.8 L408.2,549.4 L410.4,548.1 L412.8,548.3 L415.2,549.2 L417.5,548.9 L419.9,548.8 L422.2,548.6 L424.4,547.7 L425.2,549.9 L426.7,551.8 L428.4,553.5 L428.6,556.0 L428.9,558.9 L430.5,561.2 L432.2,563.6 L432.7,566.4 L431.0,568.6 L430.2,571.4 L429.4,574.1 L428.6,576.7 L426.3,577.5 L424.6,579.2 L422.5,580.2 L420.3,580.9 L418.6,582.1 L416.8,583.1 L415.7,584.9 L414.1,586.2 L413.0,588.0 L412.3,589.9 L410.8,591.4 L409.9,593.3 L407.5,594.7 L404.9,595.8 L402.4,597.0 L399.6,597.4 L397.5,599.6 L395.9,602.1 L393.5,603.8 L391.3,605.7 L392.6,607.7 L393.4,609.9 L396.0,610.0 L398.5,610.6 L401.1,610.2 L403.7,609.9 M383.0,551.9 L384.6,552.0 L385.8,553.0 L387.1,553.9 L388.2,554.9 L389.0,556.3 L389.8,557.5 L390.5,558.8 L391.3,560.2 L391.0,561.9 L391.3,563.6 L392.2,565.0 L393.0,566.5 L393.7,568.0 L394.4,569.4 L395.1,571.0 L395.4,572.6 L396.3,574.6 L396.8,576.7 L396.8,578.8 L397.5,580.9 L396.3,582.0 L395.1,583.2 L393.7,584.0 L392.2,584.8 L391.5,586.3 L391.0,587.9 L390.9,589.6 L391.3,591.2 L390.3,592.4 L389.6,593.8 L388.3,594.7 L387.3,595.9 L386.1,597.0 L385.3,598.4 L385.4,600.0 L385.1,601.6 M403.7,609.9 L406.2,608.7 L407.7,606.5 L410.0,605.3 L412.0,603.7 L414.6,603.8 L417.1,604.1 L419.7,604.8 L421.8,606.4 L424.0,605.3 L426.1,603.9 L428.1,602.2 L430.6,601.6 L432.2,601.9 L433.8,601.7 L435.4,601.6 L437.0,601.7 L438.4,602.6 L439.8,603.3 L441.5,603.2 L443.1,603.7 L444.4,602.8 L446.0,602.2 L447.6,602.0 L449.2,602.2 L450.8,602.2 L452.3,601.6 L453.9,601.7 L455.5,601.6 L458.1,601.0 L460.7,600.8 L463.3,600.2 L465.9,599.5 L468.0,599.9 L470.2,599.8 L472.5,599.9 L474.2,601.6 M474.2,601.6 L473.3,599.1 L472.7,596.5 L472.2,593.9 L472.1,591.2 L472.4,589.1 L473.4,587.2 L473.5,585.0 L474.2,582.9 L475.6,580.7 L477.5,578.7 L480.1,578.1 L482.4,576.7 L484.3,576.5 L486.2,576.3 L487.7,577.6 L489.7,577.9 L491.4,578.6 L493.3,578.4 L495.2,578.1 L496.9,578.8 M409.9,614.0 L409.7,615.7 L409.5,617.3 L409.9,618.9 L410.3,620.5 L411.3,621.9 L411.3,623.7 L411.8,625.3 L411.4,626.9 L411.9,628.6 L411.6,630.2 L411.2,631.8 L411.1,633.5 L411.1,635.1 L411.5,636.7 L411.4,638.4 L412.0,639.9 M443.1,603.7 L443.3,605.4 L443.6,607.2 L444.6,608.7 L445.3,610.3 L446.0,611.9 L447.3,613.2 L448.7,614.4 L449.3,616.1 L450.2,617.9 L451.0,619.7 L451.9,621.6 L453.6,622.8 L453.7,624.9 L453.7,626.9 L455.0,628.6 L455.5,630.6 L455.4,632.9 L455.5,635.3 L454.8,637.6 L455.5,639.9 M474.2,601.6 L475.5,602.6 L477.1,603.1 L478.6,603.9 L480.0,604.7 L481.8,604.5 L483.5,604.3 L485.0,605.1 L486.6,605.7 L487.5,607.9 L489.1,609.6 L490.2,611.7 L490.7,614.0 L492.2,612.8 L494.0,612.2 L495.3,610.9 L496.9,609.9 M490.7,614.0 L490.2,615.6 L489.4,617.0 L488.8,618.6 L488.5,620.2 L488.0,621.7 L487.8,623.4 L486.8,624.8 L486.6,626.5 L485.9,628.2 L485.2,629.9 L484.7,631.7 L483.4,633.2 L481.8,634.3 L480.8,636.0 L480.5,638.0 L480.4,639.9 M505.6,480.2 L507.1,480.4 L508.6,480.6 L509.9,479.7 L511.4,479.4 L512.2,481.1 L513.5,482.4 L515.2,483.3 L517.0,483.8 L518.8,483.7 L520.5,484.2 L522.3,484.6 L523.9,485.6 L525.8,485.9 L527.2,487.3 L528.6,488.6 L530.1,489.7 L531.8,491.9 L532.0,494.7 L532.1,497.4 L532.2,500.1 L531.8,502.2 L530.7,504.1 L530.7,506.3 L530.1,508.4 L528.9,510.4 L528.7,512.9 L527.1,514.6 L525.9,516.7 L525.1,518.1 L524.8,519.7 L524.1,521.2 L523.9,522.9 L525.8,524.2 L528.1,524.7 L530.2,525.8 L532.2,527.0 L533.0,528.6 L534.4,529.7 L536.1,530.0 L537.8,530.6 L539.1,531.6 L540.2,532.9 L541.5,534.0 L542.5,535.3 L543.5,536.8 L545.2,537.7 L547.0,537.8 L548.4,539.1 L550.1,539.6 L551.9,539.8 L553.4,540.7 L554.9,541.5 L556.8,541.5 L558.6,541.9 L560.4,542.0 L562.2,542.3 L564.1,542.7 L566.0,542.3 L567.7,543.0 L569.5,543.6 L571.7,543.8 L573.7,542.7 L575.8,542.7 L578.0,542.7 L580.2,542.9 L581.9,544.5 L583.8,545.5 L586.0,545.7 L586.9,543.9 L588.3,542.7 L588.5,540.7 L590.2,539.4 L593.1,539.3 L595.9,538.8 L597.5,538.8 L598.8,537.8 L599.7,536.6 L600.5,535.3 L602.1,535.0 L603.7,534.8 L605.4,534.9 L606.9,535.4 L608.4,534.7 L610.1,534.7 L611.3,533.5 L613.0,533.2 M523.9,522.9 L523.0,525.6 L523.0,528.6 L523.5,531.5 L522.3,534.3 L521.5,535.6 L520.9,537.1 L521.0,538.8 L520.9,540.4 L519.6,541.1 L518.3,542.1 L516.9,542.7 L515.6,543.6 L514.0,545.9 L511.9,547.9 L510.7,550.5 L510.0,553.2 L511.1,555.9 L510.7,558.8 L511.1,561.5 L511.4,564.3 L510.4,565.6 L509.3,566.9 L508.2,568.2 L507.1,569.5 L505.6,570.3 L504.2,571.2 L502.5,571.5 L501.1,572.6 L500.3,574.8 L499.0,576.7 M511.4,564.3 L513.0,565.6 L514.4,567.1 L515.8,568.6 L517.7,569.4 L519.4,570.5 L520.7,572.2 L521.8,574.0 L523.9,574.7 L524.6,576.0 L525.3,577.3 L526.0,578.7 L527.1,579.8 L528.1,580.9 L529.7,581.2 L530.8,582.2 L532.2,582.9 L534.1,583.7 L536.2,584.1 L538.3,584.2 L540.4,584.2 L542.7,583.8 L544.5,585.2 L546.6,585.3 L548.7,585.0 L550.4,585.9 L551.9,587.0 L553.6,587.8 L555.3,588.6 L556.4,590.3 L557.3,592.2 L559.1,593.2 L561.2,593.3 L563.1,593.9 L565.0,593.4 L567.0,593.3 L568.8,593.9 L570.6,594.7 L572.2,595.9 L573.8,596.8 L575.7,597.4 L576.6,598.7 L577.5,599.9 L577.9,601.5 L578.2,603.0 L578.9,604.4 L579.0,606.0 L580.2,607.0 L580.9,608.5 L581.5,609.9 L582.3,611.2 L582.9,612.6 L583.1,614.2 L583.5,615.7 L583.9,617.2 L583.7,618.7 L584.0,620.2 L584.6,618.5 L585.1,616.6 L586.0,614.9 L585.9,613.0 L586.9,611.3 L587.4,609.5 L588.1,607.7 L588.1,605.7 L589.8,606.0 L591.5,606.1 L593.3,606.0 L594.8,605.1 L596.5,604.7 L597.7,603.4 L599.2,602.7 L600.5,601.6 M613.0,533.2 L612.9,531.3 L613.3,529.4 L614.6,527.9 L615.4,526.2 L614.9,524.4 L615.1,522.5 L614.9,520.6 L615.0,518.7 L615.7,517.4 L616.4,516.0 L616.5,514.4 L617.5,513.2 L618.6,512.0 L619.2,510.6 L620.3,509.6 L621.2,508.4 L623.8,507.0 L626.0,505.2 L628.9,505.1 L631.6,504.2 L634.3,505.0 L636.7,506.5 L639.1,508.1 L642.0,508.4 M584.0,502.2 L585.4,503.4 L586.8,504.7 L588.4,505.7 L590.2,506.3 L590.5,508.4 L590.9,510.5 L592.0,512.4 L592.5,514.5 L593.4,516.5 L594.2,518.5 L594.9,520.7 L594.3,522.9 L595.9,524.7 L597.8,526.3 L598.2,528.7 L598.5,531.2 L599.2,533.4 L600.5,535.3 M584.0,502.2 L584.1,503.8 L583.9,505.4 L584.1,506.9 L584.2,508.6 L584.7,510.1 L585.2,511.6 L585.8,513.1 L586.7,514.4 L586.8,516.1 L586.0,517.6 L585.3,519.0 L585.1,520.7 L585.8,522.2 L586.2,523.7 L586.2,525.4 L586.0,527.0 L585.8,528.7 L585.9,530.4 L586.7,531.9 L587.7,533.4 L588.4,534.8 L589.2,536.3 L589.6,537.9 L590.2,539.4 M532.2,500.1 L530.7,501.0 L529.2,502.0 L528.0,503.3 L526.5,504.2 L524.7,503.6 L522.9,503.8 L521.3,503.0 L519.7,502.2 L518.1,502.4 L516.6,503.2 L515.0,503.5 L513.5,504.1 L512.1,505.1 L510.8,506.2 L509.0,506.4 L507.3,506.3 L504.9,507.1 L503.5,509.1 L501.5,510.4 L499.0,510.4 M540.6,463.0 L542.5,465.2 L544.7,467.0 L546.6,469.2 L548.7,471.1 L550.4,471.4 L551.9,472.0 L553.4,472.6 L555.0,473.1 L556.6,473.7 L558.3,473.5 L559.7,474.5 L561.2,475.2 L563.3,476.1 L565.5,476.9 L567.3,478.5 L569.5,479.4 L570.1,476.7 L571.4,474.4 L571.5,471.7 L571.5,469.0 L574.0,467.7 L576.8,467.1 L579.4,466.1 L581.9,464.9 M581.9,464.9 L582.5,462.3 M583.4,458.7 L584.0,456.6 L585.7,454.9 L587.6,453.5 L589.9,453.0 L592.3,452.5 L594.0,450.8 L596.3,450.3 L598.2,448.9 L600.5,448.3 L603.3,449.1 L606.1,449.4 L608.5,450.9 L610.9,452.4 L612.4,452.2 L614.0,451.8 L615.6,452.0 L617.1,451.2 L618.7,451.2 L620.2,451.0 L621.8,451.0 L623.3,450.4 L622.7,447.8 L622.9,445.2 L622.9,442.6 L623.3,440.0 M600.5,448.3 L601.1,451.0 L602.1,453.6 L600.7,456.0 L599.7,458.6 L600.3,461.2 L600.4,463.8 L600.5,466.4 L600.5,469.0 L602.1,469.9 L602.8,471.5 L603.8,472.8 L605.3,473.6 L606.9,474.3 L608.7,474.6 L609.9,475.9 L610.9,477.3 L611.3,480.1 L612.5,482.6 L613.8,485.1 L615.0,487.6 L614.3,490.2 L613.5,492.7 L613.0,495.3 L613.0,498.0 L613.7,500.0 L614.0,502.1 L614.3,504.2 L614.6,506.3 L614.6,508.4 L614.4,510.6 L613.4,512.5 L613.0,514.6 M610.9,477.3 L612.3,478.5 L613.7,479.8 L615.3,480.8 L616.6,482.2 L618.5,482.5 L620.1,483.7 L621.5,484.9 L623.3,485.6 L624.8,483.6 L627.3,483.2 L629.5,482.4 L631.6,481.4 M633.7,440.0 L631.6,442.0 L629.6,444.2 L627.8,446.6 L625.4,448.3 M536.3,582.9 L537.1,584.3 L537.5,585.8 L537.6,587.3 L538.1,588.8 L537.6,590.3 L536.7,591.5 L536.4,593.0 L535.8,594.5 L536.9,597.2 L536.8,600.2 L537.4,603.0 L538.4,605.7 L537.9,607.2 L537.6,608.8 L537.4,610.4 L537.2,611.9 L537.1,613.5 L536.3,615.0 L536.4,616.6 L536.3,618.2 L533.9,618.7 L531.5,619.0 L529.8,620.7 L528.0,622.3 L525.9,623.2 L523.9,624.4 L521.7,625.2 L519.7,626.5 L520.2,628.3 L520.6,630.1 L520.5,632.1 L521.7,633.7 L520.6,635.2 L519.8,636.9 L518.6,638.3 L517.7,639.9 M499.0,618.2 L500.7,618.3 L502.3,618.6 L504.0,618.9 L505.3,619.9 L506.4,621.5 L508.2,621.5 L509.8,622.1 L511.4,622.3 L513.6,621.9 L515.5,620.9 L517.6,620.6 L519.7,620.2 M536.3,618.2 L536.2,620.9 L536.2,623.7 L536.5,626.4 L536.3,629.1 L536.7,632.0 L538.3,634.3 L538.4,637.1 L538.4,639.9 M607.0,617.1 L606.8,618.9 L606.2,620.7 L607.0,622.5 L607.0,624.4 L607.6,626.2 L608.5,627.8 L609.5,629.3 L610.9,630.6 L612.1,633.1 L613.5,635.6 L615.1,637.9 L617.1,639.9 M536.7,630.0 L536.5,632.2 L536.6,634.4 L536.8,636.7 L537.8,638.7 L537.2,640.9 L535.8,642.6 L536.1,644.9 L535.5,647.1 L537.0,648.9 L538.2,650.9 L538.6,653.2 L539.9,655.1 L540.2,657.4 L540.6,659.7 L541.0,661.9 L541.6,664.2 L542.9,665.3 L544.3,666.3 L545.4,667.7 L546.7,668.8 L547.7,670.2 L548.7,671.7 L550.1,672.6 L551.3,673.9 L552.6,674.9 L553.6,676.1 L554.6,677.2 L555.4,678.5 L555.9,680.0 L557.0,681.2 L558.0,682.3 L558.7,683.7 L561.3,683.7 L563.5,685.0 L566.0,685.3 L568.4,686.1 L570.0,685.7 L571.7,685.9 L572.9,684.8 L574.4,684.0 L575.9,683.9 L577.5,683.9 L579.1,683.9 L580.6,683.7 L581.2,681.8 L581.8,680.0 L582.4,678.2 L583.1,676.4 L585.6,676.1 L588.2,676.1 L590.5,675.0 L592.8,673.9 L594.4,674.8 L595.8,676.0 L597.2,677.0 L598.6,678.2 L600.3,678.7 L602.0,679.4 L603.4,680.5 L605.0,681.3 L602.9,682.8 L601.1,684.6 L599.1,686.3 L597.7,688.6 L596.7,690.5 L595.4,692.3 L594.4,694.3 L592.8,695.9 L594.5,696.3 L595.9,697.1 L597.6,697.6 L599.2,697.6 L600.4,698.8 L601.7,700.0 L603.5,700.0 L605.0,700.8 L606.4,702.5 L608.1,703.8 L609.6,705.4 L611.3,706.7 L612.8,708.3 L614.4,709.7 L615.2,711.9 L617.2,713.0 L618.2,715.0 L619.7,716.7 L621.1,718.4 L622.0,720.4 L623.5,722.1 L625.6,723.0 L627.5,724.1 L629.4,725.2 L630.3,726.8 L631.9,727.6 M483.0,634.9 L484.6,636.8 L486.1,638.8 L488.2,640.3 L489.4,642.5 L490.0,645.0 L490.3,647.5 L492.2,649.4 L492.8,652.0 L492.3,653.9 L491.4,655.7 L490.0,657.1 L489.1,658.9 L488.9,660.8 L488.3,662.7 L488.1,664.7 L487.9,666.6 L485.3,667.5 L483.0,669.1 M483.0,686.1 L484.7,687.2 L486.6,688.2 L488.5,688.9 L490.3,689.9 L492.4,690.1 L494.2,691.2 L496.0,692.1 L497.6,693.5 L499.5,694.0 L501.3,694.7 L503.1,695.5 L505.0,695.8 L506.6,696.9 L508.5,697.4 L510.4,697.8 L512.3,698.3 L513.9,698.4 L515.4,698.6 L517.0,699.1 L518.3,700.0 L519.9,700.2 L521.5,700.0 L523.0,700.3 L524.5,700.8 L526.7,701.1 L528.8,700.4 L530.9,700.0 L533.0,699.9 L535.2,700.3 L537.2,701.3 L539.4,701.2 L541.6,700.8 L541.9,702.3 L542.0,703.9 L542.4,705.4 L542.4,707.0 L542.9,708.4 L543.1,710.0 L543.7,711.5 L544.0,713.0 L544.8,715.4 L544.9,718.0 L546.6,719.9 L548.2,722.0 L549.5,724.2 L550.0,726.7 L551.8,728.5 L553.8,730.1 L555.0,731.3 L556.0,732.8 L557.2,734.0 L558.1,735.6 L559.0,737.1 L560.2,738.4 L561.9,739.2 L563.5,739.8 L564.0,741.7 L565.2,743.2 L565.5,745.1 L566.0,747.0 L566.3,748.8 L566.1,750.7 L565.8,752.6 L566.0,754.5 L567.7,755.5 L569.6,755.7 L571.5,755.3 L573.3,754.5 L575.1,754.8 L577.0,754.7 L578.8,754.2 L580.6,754.5 L581.4,752.0 L582.7,749.8 L583.6,747.3 L583.1,744.7 L584.5,743.9 L586.0,743.2 L587.4,742.4 L589.0,741.8 L590.7,741.9 L592.4,741.7 L593.9,740.9 L595.3,739.9 L596.9,739.4 L598.5,738.9 L600.1,738.7 L601.7,738.2 L603.3,737.7 L605.0,737.3 L606.5,736.4 L607.5,735.0 L608.6,733.7 L610.0,732.7 L611.7,732.7 L613.4,732.5 L615.1,732.6 L616.7,732.9 L618.3,732.5 L619.8,731.7 L621.4,731.4 L622.9,730.9 L624.3,730.0 L625.8,729.4 L627.2,728.8 L628.8,728.5 L630.5,728.5 L631.9,727.6 M541.6,700.8 L544.3,700.4 L547.1,700.8 L549.8,701.1 L552.6,701.0 L555.3,700.9 L558.0,700.4 L560.8,701.1 L563.5,700.8 L566.0,699.7 L568.7,699.3 L571.1,697.9 L572.8,695.7 L575.4,695.6 L578.0,695.1 L580.6,694.3 L583.1,693.5 L585.4,694.7 L587.6,696.0 L590.2,695.7 L592.8,695.9 M583.1,676.4 L581.8,674.7 L581.2,672.7 L579.5,671.4 L578.6,669.5 L578.1,667.4 L577.7,665.4 L577.3,663.3 L575.8,661.7 L577.3,659.9 L578.6,657.9 L579.9,655.9 L581.5,654.1 L581.4,651.7 L582.0,649.3 L582.5,647.0 L583.1,644.6 L585.1,644.5 L586.7,643.1 L588.7,643.4 L590.5,644.2 L592.3,643.5 L594.1,643.2 L595.9,642.8 L597.7,642.2 L599.8,641.3 L602.1,640.5 L604.2,639.7 L606.3,638.6 L608.3,637.4 L610.4,636.3 L612.5,635.3 L614.8,634.9 L616.3,632.6 L617.2,630.0 M631.9,727.6 L634.0,725.8 L635.1,723.3 L635.5,720.6 L635.9,718.0 L637.0,715.6 L637.6,713.1 L638.6,710.7 L639.2,708.1 L640.0,706.3 L641.4,704.8 L642.1,703.0 L643.0,701.2 L642.7,699.1 L641.3,697.5 L641.5,695.5 L641.7,693.5 L642.9,691.2 L642.8,688.6 L642.3,686.1 L641.7,683.7 L643.5,683.0 L645.3,682.1 L646.3,680.3 L648.1,679.2 L649.8,678.2 L650.8,676.4 L652.4,675.3 L653.9,673.9 L655.3,672.3 L656.8,670.6 L658.7,669.3 L660.7,668.3 L662.5,667.0 L664.6,666.2 L666.4,664.9 L668.5,664.2 L670.4,665.6 L672.5,666.6 L674.9,666.8 L676.9,668.1 L679.0,669.3 L680.9,670.6 L683.3,671.1 L685.6,671.5 L687.0,670.5 L688.7,669.8 L690.1,668.7 L690.9,667.1 L692.6,666.2 L693.3,664.5 L694.3,663.1 L695.4,661.7 L696.9,661.9 L698.4,662.4 L699.9,662.3 L701.5,662.4 L703.0,662.2 L704.5,662.1 L706.0,661.9 L707.6,661.7 L707.8,664.6 L707.5,667.5 L707.9,670.4 L709.0,673.0 L707.5,675.5 L705.8,677.9 L705.6,680.8 L705.1,683.7 L703.6,684.7 L702.7,686.3 L702.0,687.8 L701.4,689.5 L701.5,691.3 L700.5,692.8 L699.5,694.2 L698.9,695.9 L698.2,697.4 L697.2,698.9 L696.9,700.5 L696.3,702.2 L695.3,703.6 L694.2,704.9 L693.6,706.5 L692.9,708.1 L691.8,710.4 L690.3,712.5 L689.6,715.0 L688.8,717.4 L688.8,720.0 L689.0,722.6 L688.4,725.1 L688.0,727.6 L687.3,729.3 L686.5,730.9 L685.3,732.2 L684.2,733.6 L683.0,735.1 L682.7,736.9 L681.1,737.9 L680.7,739.8 L680.5,742.1 L680.1,744.3 L678.7,746.1 L678.2,748.4 L677.4,750.5 L677.5,752.8 L676.1,754.6 L675.8,756.9 L674.3,758.8 L672.5,760.3 L671.4,762.5 L669.9,764.4 L668.5,766.4 L666.5,767.8 L665.1,769.7 L663.6,771.6 L663.2,774.0 L663.7,776.4 L664.2,778.9 L663.6,781.3 L666.5,781.3 L669.5,781.3 L671.8,783.1 L674.4,784.5 L677.2,785.4 L680.1,785.5 L682.9,784.8 L685.6,783.8 L687.8,783.8 L690.0,783.4 L692.1,782.5 L694.0,781.3 L696.1,781.9 L698.3,782.1 L700.6,782.1 L702.7,781.3 L704.3,782.6 L706.0,783.7 L708.0,784.1 L710.0,783.8 L711.1,785.8 L713.2,786.9 L714.1,789.0 L714.9,791.1 L716.5,792.2 L718.3,793.1 L719.5,794.7 L720.7,796.3 L722.6,797.2 L723.7,798.8 L725.3,800.0 L727.1,800.9 L729.0,801.4 L730.6,802.4 L732.5,803.2 L734.5,803.2 L736.2,804.1 L737.9,805.0 L739.8,805.4 L741.7,805.7 L743.2,805.1 L744.6,804.4 L746.2,804.2 L747.8,804.4 L749.4,804.4 L751.0,804.4 L752.4,803.8 L753.9,803.3 L754.5,805.2 L755.5,806.8 L756.2,808.7 L756.4,810.6 L758.1,810.9 L759.9,810.4 L761.7,810.0 L762.8,808.5 L764.5,808.2 L766.2,808.2 L767.8,808.2 L769.5,808.2 L771.4,808.5 L772.7,809.8 L774.4,809.4 L776.2,809.1 L777.8,809.3 L779.5,809.7 L781.1,810.3 L782.7,810.6 M631.9,727.6 L633.4,728.0 L634.8,728.6 L636.0,729.6 L637.5,730.0 L638.5,731.1 L639.9,731.7 L641.3,732.4 L642.6,733.2 L644.0,733.7 L645.5,734.0 L647.0,734.7 L648.5,734.4 L650.0,735.0 L651.3,735.7 L652.8,736.2 L653.9,737.4 L654.6,739.4 L655.9,740.9 L656.5,742.9 L657.8,744.6 L658.8,746.4 L659.9,748.1 L660.3,750.1 L661.2,752.0 L661.1,754.7 L661.3,757.4 L659.8,759.7 L659.0,762.2 L659.3,764.9 L660.8,767.1 L662.5,769.2 L663.6,771.6 M639.2,630.0 L639.3,632.7 L641.1,634.7 L641.1,637.3 L641.7,639.8 L643.3,640.0 L645.0,639.9 L646.6,640.6 L648.2,641.0 L649.6,642.3 L650.3,644.0 L652.0,644.9 L653.9,644.6 L654.5,647.1 L655.4,649.4 L655.8,651.9 L656.3,654.4 L657.7,656.3 L659.0,658.3 L659.4,660.6 L659.0,663.0 L658.9,665.2 L658.4,667.5 L656.6,669.1 L656.3,671.5 M653.9,644.6 L655.8,642.8 L658.0,641.2 L660.5,640.1 L663.0,639.1 L663.7,636.4 L664.6,633.9 L666.7,632.1 L668.5,630.0 M668.5,664.2 L669.1,662.2 L669.8,660.3 L670.6,658.4 L671.4,656.5 L673.2,654.9 L673.0,652.6 L674.2,650.8 L675.8,649.5 L677.7,648.4 L679.8,647.6 L681.5,646.1 L683.6,645.3 L684.7,643.3 L686.8,642.2 L688.8,641.3 L690.5,639.8 L691.9,638.2 L693.5,636.9 L695.5,636.5 L697.6,636.1 L698.8,634.6 L700.2,633.1 L701.7,631.8 L702.7,630.0 M685.6,671.5 L687.1,670.1 L688.9,669.1 L690.2,667.5 L691.3,665.8 L693.1,664.7 L694.6,663.2 L695.4,661.3 L696.1,659.3 L697.1,657.6 L698.3,655.9 L698.9,654.0 L699.7,652.1 L700.7,650.3 L702.0,648.7 L702.4,646.7 L702.7,644.6 L704.3,642.5 L706.0,640.4 L706.7,637.8 L708.2,635.5 L710.7,634.6 L712.9,633.0 L715.1,631.5 L717.3,630.0 M707.6,661.7 L708.1,660.3 L708.9,659.0 L710.0,657.8 L710.6,656.4 L711.5,655.1 L712.8,654.3 L714.0,653.2 L714.9,652.0 L716.3,651.3 L717.8,650.9 L719.2,650.1 L720.1,648.8 L721.1,647.5 L722.3,646.7 L723.4,645.6 L724.6,644.6 L725.4,642.5 L726.0,640.4 L727.6,638.8 L728.8,636.9 L729.8,634.8 L731.3,633.2 L732.5,631.3 L734.4,630.0 M497.6,717.9 L499.9,717.5 L502.1,717.3 L504.1,716.3 L506.3,715.9 L508.6,715.8 L510.7,714.9 L512.6,713.8 L514.7,713.0 L516.2,713.9 L517.6,715.0 L518.9,716.1 L519.8,717.7 L521.0,718.9 L522.3,720.1 L523.8,721.1 L524.5,722.8 L523.6,724.9 L522.3,726.7 L522.6,728.9 L522.6,731.2 L522.2,733.3 L522.1,735.5 L522.3,737.7 L522.1,739.8 L521.9,741.4 L521.9,743.0 L521.6,744.6 L520.8,745.9 L520.3,747.4 L520.2,749.0 L519.9,750.5 L519.6,752.0 L520.7,753.1 L522.1,753.9 L523.6,754.3 L524.8,755.3 L526.1,756.1 L527.3,757.1 L528.6,758.0 L529.4,759.4 L531.6,759.0 L533.7,758.6 L536.0,758.6 L538.1,759.2 L540.4,759.4 L542.2,760.7 L544.4,760.9 L546.5,761.8 L548.2,762.3 L550.0,762.8 L550.9,764.5 L552.6,765.4 L554.1,766.3 L555.6,767.3 L557.1,768.3 L558.7,769.1 L559.7,770.5 L561.1,771.6 L559.9,772.7 L558.6,773.6 L557.8,775.1 L557.3,776.6 L555.8,777.3 L554.3,777.7 L552.8,778.2 L551.3,778.9 L550.0,780.0 L548.2,780.2 L546.5,780.4 L544.8,780.3 L543.7,781.6 L542.2,782.4 L540.5,782.7 L539.1,783.8 L538.2,785.2 L537.8,786.9 L536.9,788.3 L535.7,789.4 L536.0,791.1 L536.5,792.6 L536.5,794.3 L536.7,796.0 L538.6,798.1 L540.7,800.1 L540.7,803.0 L541.6,805.7 L543.3,806.5 L545.1,807.0 L546.9,807.4 L548.8,807.6 L550.7,807.2 L552.5,807.7 L554.4,807.8 L556.2,808.2 L558.5,809.3 L560.9,810.1 L563.5,809.9 L566.0,810.4 L568.4,811.3 L570.9,811.9 L573.3,812.4 L575.8,813.1 L578.2,813.0 L580.6,813.1 L580.8,811.5 L581.3,810.0 L581.7,808.5 L582.4,807.1 L583.1,805.6 L582.7,804.0 L582.9,802.4 L583.1,800.9 L584.9,800.3 L586.7,799.6 L588.5,798.9 L590.4,798.6 L592.1,797.6 L594.1,797.3 L595.9,796.7 L597.7,796.0 L599.7,796.1 L601.5,796.7 L603.4,797.3 L605.0,798.4 L605.9,800.5 L606.8,802.6 L608.7,803.8 L609.9,805.7 L612.6,805.3 L614.8,803.6 L616.9,802.1 L619.2,800.8 L621.9,800.8 L624.4,799.8 L626.9,799.0 L629.4,798.4 L631.0,798.6 L632.6,798.8 L634.2,799.1 L635.7,798.7 L637.0,799.7 L638.4,800.4 L640.0,800.7 L641.5,801.3 L643.3,801.9 L644.6,800.6 L646.1,800.2 L647.6,799.6 L649.2,799.9 L650.7,800.6 L652.3,800.4 L653.9,800.9 L656.3,801.5 L658.7,801.0 L661.2,800.6 L663.6,800.9 L665.9,800.0 L667.4,798.0 L669.3,796.6 L671.6,795.8 L673.7,794.6 L676.1,794.6 L678.4,794.0 L680.7,793.5 L682.5,791.4 L684.0,789.1 L684.6,786.4 L685.6,783.8 M507.4,727.6 L507.9,729.7 L508.1,731.9 L507.5,734.1 L508.0,736.3 L508.8,738.3 L508.6,740.6 L508.6,742.8 L509.8,744.7 L510.7,746.0 L511.7,747.3 L512.9,748.3 L514.3,749.0 L515.3,750.1 L516.7,750.9 L518.2,751.4 L519.6,752.0 M483.0,715.4 L484.9,715.7 L486.8,716.1 L488.4,717.3 L490.3,717.9 L488.3,719.5 L486.5,721.3 L484.2,722.8 L483.0,725.2 M492.8,737.4 L494.0,738.6 L495.5,739.5 L497.0,740.5 L497.6,742.3 L498.6,744.3 L500.2,745.9 L501.4,747.7 L502.5,749.6 L501.4,750.9 L500.1,752.0 L499.7,750.2 L499.4,748.4 L498.1,747.1 L496.9,745.7 L495.3,744.6 L494.7,742.8 L493.7,741.3 L492.8,739.8 M541.6,805.7 L539.2,807.0 L536.5,807.9 L534.2,809.2 L531.8,810.6 L530.2,810.6 L528.7,811.1 L527.2,810.7 L525.7,810.1 L524.1,810.1 L522.7,810.6 L521.2,810.6 L519.6,810.6 L516.9,811.6 L514.1,812.5 L511.3,813.2 L508.7,814.4 L507.2,813.9 L505.6,814.1 L504.4,815.0 L503.0,815.7 L500.4,817.1 L497.6,817.9 L495.2,819.2 L492.8,820.4 L490.9,820.0 L489.2,819.3 L487.5,818.5 L485.9,817.5 L485.0,815.8 L484.6,814.0 L483.9,812.2 L483.0,810.6 M497.6,817.9 L499.1,819.0 L500.1,820.6 L501.0,822.2 L501.4,824.0 L501.9,825.7 L502.9,827.3 L503.9,828.7 L505.0,830.1 L505.8,832.6 L505.4,835.2 L505.7,837.9 L507.4,839.9 L505.2,841.7 L502.4,842.1 L500.3,844.0 L497.6,844.8 L499.2,846.5 L499.7,848.7 L501.4,850.2 L502.5,852.1 L505.4,852.5 L507.4,854.6 L509.6,853.1 L511.7,851.6 L514.3,850.8 L516.9,851.4 L519.4,851.9 L521.9,851.5 L524.4,851.9 L526.9,852.1 L529.1,851.7 L531.2,850.8 L533.5,850.8 L535.4,849.5 L537.6,849.1 L539.9,848.9 L542.0,848.1 L544.0,847.2 L545.1,849.2 L546.1,851.2 L546.8,853.3 L547.3,855.5 L547.3,857.7 L547.0,859.9 L546.4,862.1 L546.5,864.3 L546.5,866.4 L546.9,868.4 L546.2,870.3 L545.4,872.1 L545.0,874.1 L545.2,876.1 L544.8,878.1 L544.0,879.9 M609.9,805.7 L608.6,806.9 L607.5,808.2 L606.6,809.7 L605.4,811.0 L604.2,812.3 L603.3,813.8 L601.7,814.6 L600.2,815.5 L598.7,816.5 L597.5,817.7 L596.4,819.0 L595.3,820.4 L596.8,821.3 L598.4,822.2 L600.3,822.5 L601.6,823.9 L602.1,825.6 L603.0,827.2 L603.8,828.8 L605.0,830.1 L605.3,831.8 L606.0,833.3 L606.8,834.7 L607.7,836.2 L607.9,837.8 L608.9,839.2 L609.2,840.9 L609.9,842.4 L611.2,844.2 L613.0,845.6 L614.2,847.5 L614.8,849.7 L614.3,851.2 L614.3,852.8 L613.8,854.3 L613.0,855.7 L613.1,857.2 L613.1,858.8 L612.8,860.4 L612.4,861.9 L613.0,864.3 L614.8,866.2 L615.9,868.3 L617.3,870.4 L618.4,872.6 L619.4,874.9 L619.4,877.4 L619.7,879.9 M663.6,800.9 L663.9,803.4 L663.1,805.7 L663.4,808.2 L663.6,810.6 L662.4,811.5 L661.3,812.6 L660.2,813.7 L659.0,814.6 L657.7,815.4 L656.4,816.3 L655.2,817.2 L653.9,817.9 L652.0,819.1 L650.0,819.8 L648.9,821.7 L647.3,823.2 L645.2,823.2 L643.1,823.6 L641.2,824.4 L639.2,825.3 L638.7,827.5 L637.6,829.4 L635.9,830.9 L634.3,832.6 L632.0,834.0 L629.3,834.8 L627.1,836.5 L624.6,837.5 L623.0,839.0 L621.6,840.8 L620.7,842.8 L619.7,844.8 L618.2,845.7 L616.7,846.7 L616.0,848.3 L614.8,849.7 M634.3,832.6 L636.2,834.0 L638.4,834.9 L640.8,835.0 L642.9,836.1 L645.0,837.3 L647.1,838.2 L649.5,838.5 L651.4,839.9 M651.4,839.9 L651.5,842.4 L651.6,844.8 L651.4,847.2 L651.7,849.7 L652.1,852.1 L652.1,854.6 L651.7,857.0 L651.4,859.4 L652.9,859.3 L654.5,859.5 L656.0,859.4 L657.5,859.1 L659.1,859.5 L660.6,858.8 L662.1,859.0 L663.6,859.4 L665.3,858.5 L667.2,858.3 L669.1,858.2 L670.9,858.3 L672.8,858.7 L674.6,858.7 L676.5,859.0 L678.3,859.4 L679.5,857.0 L680.3,854.4 L681.9,852.1 L683.1,849.7 L683.8,847.9 L684.2,845.9 L685.0,844.2 L685.6,842.4 L683.4,841.4 L681.1,840.7 L679.0,839.5 L677.5,837.7 L675.2,837.0 L673.0,836.4 L670.8,835.5 L668.5,835.0 L666.5,836.1 L664.3,836.5 L662.2,837.2 L660.1,838.0 L658.0,838.7 L655.8,838.9 L653.6,839.6 L651.4,839.9 M663.6,859.4 L664.3,862.2 L664.5,865.1 L666.7,866.9 L668.5,869.2 L666.2,870.5 L663.6,871.1 L661.2,871.9 L658.6,872.6 L656.0,872.9 L653.3,873.3 L651.2,875.0 L649.0,876.5 L647.5,876.9 L646.3,877.9 L645.1,878.8 L644.1,879.9 M756.4,810.6 L755.1,812.5 L753.6,814.2 L753.1,816.3 L752.1,818.3 L750.2,819.6 L748.6,821.2 L747.3,823.1 L746.6,825.3 L745.4,827.7 L743.5,829.6 L742.7,832.1 L741.3,834.3 L742.4,836.8 L742.5,839.5 L742.2,842.2 L741.7,844.8 L742.0,846.9 L743.7,848.1 L743.7,850.0 L743.8,852.0 L744.2,853.8 L743.9,855.7 L744.0,857.6 L744.2,859.4 L744.8,862.1 L745.4,864.7 L744.8,867.3 L743.7,869.8 L742.9,872.2 L742.3,874.8 L742.3,877.4 L741.7,879.9 M690.5,876.5 L692.4,876.5 L694.0,875.6 L695.7,874.8 L697.4,874.2 L698.4,872.7 L699.6,871.3 L701.2,870.4 L702.7,869.2 L705.1,868.5 L707.5,867.9 L710.0,867.5 L712.4,866.8 L714.4,866.1 L716.2,865.1 L718.0,864.1 L719.9,863.3 L721.4,861.9 L723.3,861.0 L725.2,860.3 L727.1,859.4 L728.7,860.0 L730.4,859.8 L732.0,860.3 L733.7,860.6 L735.3,861.3 L736.9,861.8 L738.5,862.7 L739.3,864.3 M710.0,783.8 L711.2,781.4 L712.7,779.3 L713.6,776.6 L712.4,774.0 L713.3,772.6 L714.3,771.3 L715.5,770.1 L716.4,768.7 L717.1,767.2 L717.3,765.5 L717.7,763.9 L717.6,762.2 L716.6,760.8 L715.9,759.3 L715.7,757.7 L715.6,756.0 L715.5,754.4 L715.2,752.8 L714.9,751.2 L714.9,749.6 L713.9,746.9 L712.8,744.3 L711.6,743.3 L710.7,742.1 L710.8,740.5 L710.5,739.1 L711.0,736.2 L710.7,733.3 L710.6,730.5 L710.0,727.6 L710.3,725.5 L711.0,723.4 L710.9,721.2 L711.3,719.1 L712.4,717.1 L712.7,714.9 L712.7,712.7 L712.4,710.5 L715.1,709.7 L717.7,708.8 L719.9,707.2 L722.2,705.7 L724.0,706.3 L725.6,707.5 L727.5,707.8 L729.4,707.5 L731.3,707.9 L733.1,708.4 L735.0,708.7 L736.8,708.1 L737.9,710.4 L738.7,712.8 L739.5,715.3 L739.3,717.9 M714.9,749.6 L716.4,749.8 L717.9,749.9 L719.4,749.4 L721.0,749.4 L722.5,749.7 L724.0,750.1 L725.6,750.0 L727.1,749.6 L729.5,750.9 L732.3,751.4 L734.7,752.7 L736.8,754.5 L738.5,754.8 L740.2,754.8 L741.7,755.3 L743.4,755.5 L744.6,754.3 L746.3,753.9 L747.7,753.0 L749.0,752.0 L749.6,750.5 L749.4,748.8 L750.2,747.4 L751.2,746.1 L750.8,744.5 L750.8,742.9 L750.9,741.3 L751.5,739.8 L751.3,738.3 L751.7,736.8 L751.5,735.3 L751.5,733.7 L751.6,732.2 L751.5,730.7 L751.5,729.2 L751.5,727.6 L753.5,725.9 L754.7,723.5 L756.5,721.6 L758.8,720.3 L759.8,718.8 L760.4,717.1 L761.7,715.8 L762.8,714.4 L764.1,713.2 L764.8,711.4 L765.2,709.6 L766.1,708.1 L766.0,706.2 L766.5,704.4 L766.6,702.6 L766.1,700.8 L764.3,700.3 L762.4,700.6 L760.5,700.3 L758.6,700.8 L757.0,699.8 L755.0,699.7 L753.3,698.8 L751.5,698.3 L749.2,699.9 L746.5,700.6 L743.9,701.6 L741.7,703.2 L740.4,704.4 L739.6,706.0 L738.2,707.0 L736.8,708.1 M739.3,678.8 L739.3,676.3 L741.5,675.0 L743.0,673.4 L743.9,671.3 L744.8,669.2 L745.4,667.0 L747.4,665.8 L749.0,664.2 L750.5,662.8 L752.4,662.2 L754.2,661.4 L756.1,661.0 L758.0,660.3 L760.0,660.4 L761.8,659.9 L763.7,659.3 L765.6,660.4 L767.3,661.7 L768.8,663.3 L770.7,664.5 L772.7,665.7 L774.7,667.0 L775.1,669.3 L775.9,671.5 L777.6,670.1 L779.5,669.2 L781.3,668.0 L783.0,666.6 M741.7,656.8 L741.8,655.1 L742.1,653.4 L743.1,652.0 L744.2,650.8 L745.1,649.3 L745.4,647.7 L746.1,646.2 L746.6,644.6 L747.7,643.0 L748.0,641.0 L748.3,639.1 L748.9,637.3 L748.9,635.3 L749.8,633.5 L750.2,631.5 L751.5,630.0 M766.1,700.8 L767.6,698.5 L768.7,696.0 L770.7,694.1 L773.5,693.5 L773.3,691.5 L774.1,689.8 L774.8,688.0 L774.9,686.2 L775.4,684.3 L775.2,682.5 L775.7,680.7 L775.9,678.8 L778.1,678.2 L779.4,676.3 L781.1,675.0 L783.0,673.9 M749.0,664.2 L748.2,665.9 L747.3,667.7 L747.7,669.6 L748.2,671.6 L748.3,673.5 L747.6,675.2 L747.2,677.0 L746.6,678.8 L748.0,680.0 L748.8,681.7 L749.9,683.1 L750.8,684.6 L751.0,686.4 L752.2,687.9 L752.8,689.6 L753.9,691.0 L755.9,692.1 L757.8,693.2 L759.2,694.9 L761.3,695.9 M758.8,630.0 L758.5,632.2 L759.7,634.1 L761.4,635.4 L763.0,636.7 L763.3,638.8 L762.8,640.7 L762.9,642.8 L763.7,644.6 L763.5,646.5 L763.4,648.3 L763.5,650.1 L763.2,652.0 L763.7,653.7 L764.1,655.6 L763.5,657.4 L763.7,659.3 M771.0,630.0 L770.7,632.6 L770.3,635.2 L771.9,637.4 L772.4,640.0 L773.3,642.5 L773.4,645.0 L774.4,647.4 L775.9,649.5 L776.2,651.0 L776.9,652.4 L777.5,653.9 L778.6,655.0 L780.0,655.7 L781.4,656.5 L782.3,657.8 L783.0,659.3 M783.0,842.4 L781.2,842.6 L779.7,843.7 L777.9,844.0 L776.4,845.1 L774.7,845.9 L772.9,846.4 L771.8,848.0 L771.0,849.7 L769.2,851.3 L767.5,852.9 L765.9,854.7 L764.2,856.4 L762.9,858.4 L761.4,860.3 L760.2,862.4 L758.8,864.3 L758.7,866.5 L757.5,868.4 L756.3,870.1 L754.9,871.7 L756.6,873.3 L757.0,875.6 L756.9,877.8 L756.4,879.9 M739.6,573.5 L741.5,572.8 L743.2,571.6 L744.6,570.1 L746.8,569.8 L748.8,569.9 L750.8,569.3 L752.5,568.1 L754.3,567.1 L756.4,567.4 L758.5,567.4 L760.6,567.2 L762.7,566.9 L764.6,566.0 L766.3,564.7 L767.6,563.0 L769.6,562.2 L771.6,561.5 L773.6,560.9 L775.6,560.9 L777.7,561.2 L779.5,560.2 L781.3,559.4 L783.2,558.5 L785.2,558.1 L787.2,557.4 L789.0,556.3 L790.6,554.9 L792.3,553.8 L794.5,553.5 L796.5,554.2 L798.6,553.9 L800.7,553.9 L802.5,554.1 L804.1,555.1 L805.9,555.4 L807.6,555.9 L809.5,556.3 L810.8,557.7 L812.6,557.8 L814.4,558.2 L816.2,558.6 L818.0,558.6 L819.8,558.7 L821.6,558.6 L823.4,558.3 L825.2,558.9 L827.0,559.1 L828.8,559.0 L830.6,558.8 L832.3,558.1 L834.0,557.3 L835.2,555.9 L836.8,555.1 L838.1,553.8 L839.8,553.1 L841.4,552.4 L842.8,551.1 L843.8,549.5 L845.3,548.2 L847.2,547.7 L849.0,547.0 L850.8,546.5 L852.7,546.4 L854.6,546.9 M739.6,573.4 L740.8,571.3 L742.8,569.9 L745.2,569.5 L747.2,568.2 L749.5,568.0 L751.8,567.8 L754.1,567.6 L756.4,567.4 L758.3,566.2 L760.5,565.5 L761.9,563.7 L764.2,563.0 L766.0,561.5 L768.4,561.4 L770.6,560.9 L772.5,559.8 L774.6,559.0 L776.7,558.4 L778.7,557.8 L780.8,557.0 L783.0,557.3 L785.1,556.9 L787.3,556.7 L789.4,556.3 L791.6,555.9 L793.8,555.5 L796.0,555.6 L798.1,554.8 L799.7,553.1 L801.0,551.2 L803.3,550.8 L805.4,549.7 L807.7,549.3 L810.0,548.7 L812.4,549.2 L814.7,548.6 L817.1,549.0 L819.4,548.8 L821.8,548.6 L824.1,549.2 L826.0,548.7 L827.9,548.9 L829.9,549.5 L831.8,548.7 L833.6,549.4 L835.6,549.5 L837.5,548.7 L839.4,548.2 L841.4,547.9 L843.3,548.4 L845.4,548.9 L847.1,547.6 L849.0,548.2 L850.7,549.2 L852.6,549.8 L854.6,549.7 M744.4,563.3 L744.9,560.9 L745.7,558.7 L745.5,556.1 L747.1,554.0 L747.3,551.6 L747.5,549.1 L748.4,546.9 L749.1,544.5 L750.5,543.6 L751.4,542.3 L753.0,541.9 L754.4,541.1 L755.9,540.5 L757.5,540.1 L758.8,539.1 L760.4,538.8 L761.9,538.1 L763.2,537.3 L764.7,536.5 L766.3,536.4 L767.8,535.9 L769.4,535.8 L771.1,536.2 L772.5,535.2 L774.1,534.7 L775.5,533.8 L776.7,532.8 L778.1,532.0 L779.7,531.7 L781.2,531.2 L782.8,530.8 L784.5,530.9 L785.8,530.0 L787.2,529.3 L788.5,528.4 L790.1,528.2 L791.6,527.6 L793.0,526.9 L794.6,526.5 L796.0,525.8 L796.8,524.4 L797.9,523.1 L798.8,521.8 L799.7,520.5 L800.4,518.9 L801.3,517.4 L801.0,515.8 L800.7,514.1 L802.3,513.2 L803.3,511.7 L805.0,511.3 L806.6,510.6 L807.3,509.0 L808.1,507.5 L808.8,505.9 L810.1,504.7 L812.3,505.8 L814.9,505.6 L816.5,507.4 L818.3,509.1 L819.7,511.0 L821.4,512.6 L822.6,514.6 L824.1,516.4 L825.3,518.2 L826.4,520.0 L827.2,522.0 L828.8,523.4 L830.2,522.7 L831.6,522.0 L833.2,521.9 L834.7,521.8 L836.1,521.2 L837.6,520.7 L838.9,520.0 L840.5,519.8 L842.1,519.4 L843.5,518.6 L845.1,518.8 L846.7,519.2 L848.3,519.0 L849.5,517.8 L851.1,517.5 L852.3,516.4 L854.2,516.0 L856.1,515.5 L858.0,516.2 L860.0,516.4 M821.8,521.1 L821.8,522.7 L822.3,524.3 L823.5,525.4 L824.8,526.4 L824.9,527.9 L825.5,529.3 L826.3,530.7 L827.0,532.0 L827.9,533.3 L828.5,534.7 L829.6,535.7 L830.4,537.0 L831.1,538.4 L832.2,539.5 L832.4,541.0 L833.5,542.2 L835.2,543.0 L836.9,543.7 L838.7,544.1 L840.6,544.4 L842.3,545.2 L844.1,545.7 L845.7,546.7 L847.6,546.9 L849.2,547.7 L851.1,547.5 L852.9,547.3 L854.6,546.9 M736.5,575.4 L734.8,577.1 L732.7,578.2 L731.6,580.4 L729.7,582.0 L728.5,584.0 L726.6,585.5 L724.6,586.8 L723.0,588.6 L720.7,589.4 L719.1,591.2 L717.2,592.7 L715.3,594.1 L713.3,595.3 L711.1,596.3 L709.1,597.6 L706.9,598.5 L707.7,600.4 L707.2,602.4 L706.1,604.1 L705.1,605.7 L703.8,607.1 L702.6,608.5 L701.1,609.7 L699.6,610.9 L698.5,612.3 L697.4,613.7 L696.6,615.4 L695.8,617.0 L695.3,619.0 L694.4,620.8 L692.4,621.1 L690.5,621.9 L688.6,624.0 L686.8,626.0 L685.4,628.4 L683.5,630.4 L681.0,631.5 L678.7,633.1 L676.5,634.8 L674.1,636.0 L672.2,636.4 L670.5,636.9 L668.9,638.0 L667.0,638.2 L665.0,638.3 L663.6,639.8 L661.8,640.3 L660.0,640.7 M737.6,575.2 L736.0,577.2 L733.6,578.3 L732.3,580.4 L731.7,582.9 L731.4,585.5 L729.6,587.4 L729.7,589.8 L729.7,592.3 L727.5,593.3 L725.4,594.6 L723.7,596.3 L722.5,598.5 L721.3,600.6 L720.5,602.9 L718.1,603.7 L716.3,605.5 L715.4,607.9 L714.8,610.4 L714.6,612.9 L714.6,615.4 L712.3,616.6 L710.2,618.0 L709.0,620.4 L706.9,621.9 L705.6,624.2 L704.3,626.5 L703.5,629.1 L702.9,631.6 L701.5,633.9 L700.3,636.2 L699.2,638.6 L697.5,640.7 L696.0,641.7 L694.5,642.5 L692.9,643.3 L691.3,644.2 L690.2,645.6 L689.1,647.0 L687.6,648.0 L686.2,649.1 L684.8,650.3 L683.9,651.9 L682.2,652.7 L681.2,654.2 L679.9,655.4 L679.1,657.1 L678.0,658.5 L676.4,659.4 L674.2,660.5 L671.8,661.2 L669.5,661.8 L667.0,662.0 L665.3,663.8 L663.2,665.2 L661.4,666.8 L660.0,668.8 M738.1,575.1 L737.0,577.1 L735.8,579.0 L735.1,581.1 L733.9,582.9 L733.6,585.1 L733.4,587.3 L732.3,589.3 L731.9,591.5 L731.9,594.0 L730.1,595.6 L729.9,597.8 L729.6,600.0 L728.7,602.0 L727.8,604.0 L726.9,606.0 L725.7,607.9 L724.4,609.3 L723.7,610.9 L723.3,612.9 L721.9,614.2 L720.5,615.5 L719.4,617.0 L718.7,618.7 L718.2,620.5 L717.2,622.1 L715.8,623.4 L714.9,625.0 L713.8,626.5 L713.5,628.4 L713.2,630.2 L711.8,631.7 L711.6,633.6 L710.6,636.2 L710.6,639.0 L710.5,641.8 L709.4,644.3 L708.3,646.9 L706.3,648.8 L704.6,651.0 L702.2,652.4 L701.2,653.7 L699.9,654.8 L699.2,656.2 L698.7,657.8 L698.8,659.4 L698.6,661.1 L697.9,662.5 L697.5,664.1 L696.3,665.6 L695.2,667.2 L693.5,668.1 L692.1,669.4 L690.3,670.0 L688.7,671.0 L686.9,671.9 L685.8,673.5 L684.4,672.3 L683.2,670.8 L681.9,669.3 L680.1,668.6 L679.0,667.0 L677.6,665.7 L675.8,665.1 L674.1,664.1 M738.3,575.1 L737.5,577.3 L736.0,579.1 L735.5,581.3 L734.7,583.5 L734.2,585.7 L733.6,587.9 L732.8,590.1 L731.7,592.1 L731.6,594.4 L731.8,596.6 L732.1,599.0 L730.9,601.1 L731.6,603.4 L732.1,605.7 L731.5,608.1 L730.3,610.2 L730.1,611.7 L729.1,613.0 L728.5,614.4 L727.9,615.7 L727.1,617.2 L727.5,618.8 L726.9,620.2 L726.2,621.6 L726.7,623.1 L726.5,624.6 L726.7,626.1 L726.4,627.6 L726.5,629.2 L726.3,630.7 L726.0,632.2 L725.7,633.6 L724.6,635.0 L723.8,636.5 L723.1,638.1 L722.5,639.8 L721.5,641.1 L720.6,642.6 L719.6,643.9 L718.6,645.4 L717.7,648.1 L716.9,650.8 L715.5,653.2 L714.7,656.0 L713.1,658.3 L710.9,660.2 L708.7,662.0 L706.9,664.1 L705.7,666.4 L705.9,669.0 L706.3,671.4 L707.4,673.7 L707.3,676.2 L706.5,678.5 L705.8,680.8 L704.5,682.9 L703.8,685.5 L703.1,688.1 L702.9,690.8 L702.1,693.4 L700.8,695.8 L699.3,698.1 L697.1,699.7 L695.2,701.6 L694.4,704.0 L694.4,706.5 L694.3,709.0 L694.6,711.5 L695.7,713.9 L696.0,716.5 L694.9,718.9 L693.9,721.3 L693.1,723.7 L693.1,726.2 L692.2,728.5 L691.8,730.9 L691.3,733.4 L690.5,735.7 L689.4,737.9 L688.1,740.1 M738.5,575.1 L737.8,577.7 L738.6,580.4 L738.6,583.0 L738.9,585.6 L739.9,588.3 L739.6,591.0 L739.0,593.7 L738.1,596.2 L737.5,598.8 L737.6,601.5 L737.9,604.2 L736.9,606.7 L737.3,609.3 L737.1,612.0 L736.8,614.6 L736.2,617.2 L736.5,618.8 L737.2,620.4 L737.9,621.8 L739.1,623.0 L739.9,624.4 L741.1,625.6 L742.1,627.0 L742.1,628.7 L741.7,630.2 L741.2,631.8 L740.4,633.2 L740.0,634.8 L739.7,636.4 L738.9,637.8 L738.0,639.2 L737.4,640.7 L737.0,642.2 L737.1,643.7 L737.1,645.3 L736.8,646.8 L737.8,648.0 L738.2,649.5 L738.7,651.0 L739.2,652.4 L739.5,655.3 L739.7,658.3 L740.2,659.7 L740.9,661.1 L740.6,662.6 L740.9,664.1 M738.8,574.9 L739.1,577.4 L739.7,579.8 L740.9,581.9 L741.3,584.4 L741.2,586.9 L742.3,589.2 L744.0,591.1 L744.7,593.5 L746.5,595.5 L748.1,597.5 L749.5,599.7 L750.4,602.2 L750.4,604.8 L749.9,607.4 L749.9,610.0 L749.1,612.5 L750.3,614.4 L752.3,615.4 L754.3,616.0 L756.1,617.2 L756.0,618.9 L756.4,620.5 L757.3,621.9 L758.2,623.3 L759.3,624.5 L760.0,626.0 L761.7,626.6 L762.5,628.1 L762.4,629.7 L762.8,631.3 L762.9,632.9 L762.5,634.4 L762.5,636.0 L762.7,637.6 L763.0,639.1 L763.2,640.7 L762.9,642.2 L761.9,643.4 L761.7,645.0 L760.8,646.2 L760.9,647.7 L760.5,649.2 L760.3,650.7 L760.3,652.2 L760.5,653.7 L760.3,655.2 L760.4,656.8 L759.7,658.2 L759.5,659.8 L760.0,661.2 L760.3,662.7 L760.8,664.1 L759.7,665.7 L758.3,667.0 L756.5,667.7 L754.8,668.6 L753.4,669.9 L751.7,670.8 L750.4,672.1 L749.1,673.5 M739.6,573.7 L741.5,572.6 L743.8,573.0 L745.8,572.2 L747.8,571.4 L749.9,571.0 L752.0,571.8 L754.1,572.2 L756.2,571.9 L758.4,572.2 L760.5,571.7 L762.6,571.5 L764.8,571.6 L766.7,570.3 L768.1,568.5 L770.4,569.0 L772.5,568.0 L774.0,568.8 L775.5,569.5 L776.8,570.5 L778.3,571.0 L779.6,572.2 L780.9,573.4 L782.7,573.9 L784.4,573.3 L785.3,574.8 L786.7,575.9 L786.8,577.6 L787.4,579.1 L788.2,580.6 L789.5,581.7 L790.5,583.0 L791.3,584.4 L793.8,584.2 L796.2,583.3 L798.7,582.7 L801.1,582.2 L803.2,583.6 L805.2,585.3 L807.8,585.4 L810.1,586.8 M800.7,553.9 L798.4,555.1 L796.6,556.9 L795.0,558.8 L793.6,561.0 L794.2,563.4 L795.3,565.5 L795.5,568.0 L796.0,570.3 L798.0,570.6 L800.0,570.9 L802.0,571.3 L804.0,571.9 L805.9,572.7 L807.4,574.2 L808.6,575.9 L810.1,577.4 L812.6,578.2 L814.7,579.7 L817.1,580.2 L819.4,580.0 L821.8,580.6 L824.1,580.2 L826.6,580.5 L828.9,581.2 L831.6,581.6 L833.5,579.7 L834.7,580.6 L836.1,581.2 L837.5,581.9 L838.5,583.1 M770.2,568.0 L772.8,568.4 L775.2,569.4 L777.4,570.8 L779.6,572.1 L781.4,574.3 L782.0,577.0 L784.3,578.4 L786.6,579.7 L787.9,581.3 L789.6,582.4 L790.2,584.3 L791.4,585.9 L790.9,587.9 L790.8,589.9 L791.1,591.8 L791.3,593.8 L793.8,595.3 L795.8,597.5 L798.1,599.4 L800.7,600.8 L802.5,600.6 L804.3,601.1 L806.0,601.7 L807.7,602.4 L809.5,601.8 L811.0,600.5 L812.8,601.0 L814.7,600.8 L816.6,601.6 L818.5,601.3 L820.5,601.6 L821.8,603.2 L824.7,603.8 L827.7,604.1 L829.2,604.1 L830.7,604.6 L832.0,605.4 L833.5,605.5 L834.9,604.6 L836.4,603.8 L837.4,602.3 L838.2,600.8 M812.4,577.4 L812.4,578.9 L812.6,580.4 L813.5,581.7 L814.1,583.1 L815.0,586.0 L815.5,588.9 L815.7,590.5 L815.2,591.9 L814.9,593.5 L814.1,594.8 L814.4,596.3 L814.7,597.8 L814.5,599.3 L814.7,600.8 M760.8,607.9 L762.1,608.9 L763.3,610.0 L764.7,610.9 L765.9,612.1 L767.3,612.9 L768.8,613.6 L770.3,614.2 L771.9,614.7 L772.2,616.4 L772.3,618.1 L772.5,619.8 L772.8,621.5 L774.0,622.7 L775.0,624.0 L776.0,625.5 L777.2,626.6 L779.1,629.0 L781.5,630.8 L782.3,632.0 L783.3,633.1 L783.7,634.6 L784.3,636.0 L785.5,638.4 L787.2,640.4 L788.2,642.8 L789.0,645.4 L789.8,648.0 L790.7,650.5 L791.7,653.1 L791.6,655.9 L793.7,657.8 L796.4,658.4 L798.5,660.2 L800.7,661.8 L800.9,664.0 L801.0,666.1 L801.5,668.3 L801.3,670.5 L801.9,672.6 L803.3,674.3 L804.5,676.2 L805.4,678.2 L806.5,679.2 L807.6,680.3 L808.7,681.3 L810.2,681.9 L810.4,683.4 L810.8,684.9 L811.6,686.3 L812.4,687.6 M753.8,617.2 L754.6,619.2 L755.8,621.0 L756.5,623.0 L757.6,624.9 L759.2,626.3 L760.4,628.1 L761.4,630.0 L763.2,631.3 L763.5,633.5 L764.7,635.4 L766.0,637.1 L766.8,639.1 L765.4,640.9 L764.9,643.2 L764.7,645.6 L765.7,647.7 L765.4,649.8 L764.9,651.9 L764.7,654.0 L765.1,656.1 L765.3,658.3 L766.2,660.2 L767.4,662.0 L767.9,664.1 L768.4,665.6 L769.0,667.0 L769.6,668.4 L770.4,669.7 L770.9,671.2 L770.7,672.8 L770.2,674.3 L769.8,675.8 L769.4,677.3 L769.4,678.8 L770.0,680.2 L770.5,681.7 L770.5,684.6 L770.2,687.6 L771.2,689.4 L772.6,690.8 L774.0,692.2 L775.1,693.9 L775.9,695.8 L775.9,697.9 L776.2,699.9 L777.2,701.6 M798.3,600.8 L798.6,603.5 L798.3,606.2 L797.6,608.8 L798.5,611.5 L799.1,614.1 L799.6,616.7 L800.2,619.3 L800.7,621.9 L801.9,623.1 L803.4,623.9 L804.8,625.0 L805.2,626.7 L806.5,627.9 L807.2,629.5 L808.6,630.5 L810.1,631.3 L811.3,629.5 L812.1,627.6 L813.6,626.0 L814.1,623.8 L815.6,622.3 L816.5,620.3 L818.0,618.8 L819.4,617.2 L820.6,616.1 L821.8,614.9 L823.0,613.8 L824.1,612.5 L825.8,613.5 L827.1,615.0 L829.0,615.5 L830.6,616.6 L832.5,616.2 L834.5,616.1 L836.3,616.8 L838.2,617.2 M786.6,633.6 L788.0,633.0 L789.3,632.2 L790.9,632.5 L792.4,632.2 L793.9,631.9 L795.4,632.2 L796.8,631.5 L798.3,631.3 L799.0,634.1 L798.5,637.0 L799.2,639.8 L800.9,642.2 L802.5,644.5 L803.4,647.2 L805.2,649.5 L805.4,652.4 L807.0,654.2 L809.0,655.7 L810.8,657.4 L812.1,659.5 L812.3,662.0 L813.8,664.0 L814.6,666.4 L814.7,668.8 L815.5,670.7 L815.7,672.7 L816.9,674.3 L817.4,676.3 L818.8,677.7 L820.0,679.3 L821.5,680.8 L821.8,682.9 M781.9,631.3 L781.7,633.7 L782.5,636.1 L781.7,638.3 L781.3,640.7 L781.4,643.0 L781.3,645.4 L782.1,647.7 L781.9,650.1 L783.5,652.1 L784.3,654.5 L784.9,657.0 L785.6,659.4 L786.4,661.8 L787.6,664.0 L788.3,666.4 L789.0,668.8 L789.9,671.0 L790.6,673.3 L790.9,675.7 L790.9,678.1 L791.1,680.6 L792.2,682.8 L790.9,685.0 L791.3,687.6 M749.1,664.1 L751.9,664.0 L754.7,663.5 L756.9,661.8 L758.5,659.4 L759.8,660.8 L761.5,661.6 L762.9,662.9 L764.3,664.2 L765.8,665.4 L766.9,666.9 L768.5,667.9 L770.2,668.8 L772.0,668.8 L773.7,669.0 L775.5,668.8 L777.2,668.5 L779.0,668.2 L780.8,668.5 L782.5,668.8 L784.3,668.8 L785.5,670.2 L787.0,671.5 L788.7,672.2 L790.3,673.3 L791.2,675.0 L792.6,676.3 L794.0,677.9 L796.0,678.2 L797.1,680.1 L799.3,680.6 L801.3,681.1 L803.3,681.0 L804.2,682.8 L805.4,684.4 L806.8,685.8 L807.7,687.6 L809.1,686.9 L810.6,686.5 L812.0,686.1 L813.6,686.2 L815.1,686.2 L816.5,686.9 L818.0,687.1 L819.4,687.6 M742.1,680.5 L743.8,679.9 L745.6,679.4 L747.4,678.9 L749.1,678.2 L750.5,680.3 L751.8,682.5 L754.1,683.6 L756.1,685.2 L755.9,686.7 L755.9,688.3 L756.3,689.8 L756.8,691.2 L756.9,692.7 L757.5,694.1 L758.1,695.5 L758.5,697.0 L759.6,695.8 L761.1,695.2 L762.6,694.8 L764.0,694.3 L765.7,694.3 L767.1,695.1 L768.6,694.8 L770.2,694.6 L772.1,694.9 L773.9,695.1 L775.7,695.6 L777.4,696.5 L778.7,697.9 L780.5,698.6 L782.3,699.4 L784.3,699.3 L786.7,700.2 L789.1,701.3 L791.2,702.9 L793.6,704.0 M737.4,706.3 L738.9,706.0 L740.5,705.6 L742.1,705.3 L743.4,704.5 L744.9,703.8 L746.4,703.4 L747.8,702.6 L749.1,701.6 L751.3,701.6 L753.5,701.1 L755.6,702.0 L757.8,702.2 L759.8,703.0 L761.7,704.1 L763.6,705.3 L765.5,706.3 L765.5,708.1 L765.6,709.9 L765.7,711.7 L765.0,713.4 L765.8,715.0 L766.1,716.8 L765.5,718.6 L765.5,720.4 L765.0,722.9 L764.3,725.5 L762.9,727.6 L761.6,729.9 L761.0,732.4 L761.4,735.0 L761.1,737.5 L760.8,740.1 M713.9,706.3 L715.7,706.4 L717.5,706.4 L719.2,705.7 L721.0,705.6 L722.9,705.8 L724.7,705.6 L726.4,704.9 L728.0,704.0 L730.4,704.6 L732.9,704.4 L735.0,705.5 L737.4,706.3 M709.2,740.1 L709.3,738.1 L708.7,736.2 L708.0,734.4 L707.2,732.6 L707.5,730.6 L706.9,728.7 L706.7,726.8 L707.3,724.9 L708.1,723.1 L709.1,721.5 L709.8,719.7 L710.5,717.9 L712.0,716.6 L713.2,714.9 L713.9,713.0 L713.9,711.0 L714.1,708.7 L713.9,706.3 M749.1,725.1 L750.1,726.9 L751.2,728.7 L751.2,730.8 L750.8,732.8 L751.4,734.7 L752.1,736.5 L753.2,738.2 L753.8,740.1 M819.4,583.5 L821.3,581.6 L823.2,583.5 L821.3,585.3 L819.4,583.5 M360.0,877.2 L360.8,878.6 L362.1,879.6 L362.8,881.0 L363.6,882.3 L364.1,883.8 L365.0,885.2 L365.4,886.8 L366.8,887.7 L367.4,889.2 L368.0,890.7 L369.0,891.9 L369.7,893.3 L370.4,894.7 L371.1,896.1 L372.2,897.3 L372.9,898.7 L373.7,900.6 L374.9,902.2 L375.1,904.2 L376.4,905.9 L376.8,907.9 L377.5,909.8 L377.6,911.8 L377.2,913.8 L379.6,913.9 L381.9,914.1 L384.0,915.2 L386.3,915.7 L388.5,916.6 L390.4,918.0 L392.0,919.7 L394.4,920.2 L394.3,921.8 L394.8,923.2 L395.4,924.7 L395.1,926.2 L396.0,927.5 L396.6,928.9 L397.7,929.9 L398.7,931.0 L400.4,931.2 L402.0,931.2 L403.7,931.2 L405.3,931.4 L407.0,931.1 L408.6,930.7 L410.2,930.4 L411.9,930.5 L413.4,929.7 L414.8,928.9 L416.6,928.8 L418.0,927.8 L419.5,927.0 L421.2,926.8 L422.9,926.5 L424.5,926.7 M360.0,939.6 L362.0,938.3 L364.0,937.1 L366.3,936.6 L368.6,936.4 L370.7,935.3 L373.0,934.9 L375.1,934.1 L377.2,933.1 L379.9,933.5 L382.6,933.6 L385.4,933.6 L388.1,933.3 L390.7,932.4 L393.4,931.9 L396.0,931.1 L398.7,931.0 M424.5,926.7 L425.8,925.1 L426.3,923.1 L426.2,921.1 L425.5,919.2 L425.2,917.2 L425.6,915.3 L425.0,913.5 L424.5,911.6 L426.4,911.6 L428.1,912.1 L429.9,911.9 L431.5,911.1 L432.7,909.7 L434.4,909.0 L435.7,907.8 L437.5,907.3 L438.8,904.9 L439.5,902.1 L439.5,899.3 L439.5,896.6 L438.9,893.7 L439.9,891.0 L440.9,888.5 L441.8,885.8 L442.8,884.1 L443.5,882.3 L443.2,880.2 L444.0,878.3 L444.4,876.4 L444.5,874.4 L445.0,872.5 L446.1,870.8 L448.2,870.6 L450.4,870.1 L452.5,869.8 L454.7,869.8 L456.9,869.8 L459.1,869.9 L461.1,868.9 L463.3,868.6 L465.8,867.1 L468.8,866.8 L471.7,866.4 L474.5,865.4 L476.0,865.6 L477.5,865.1 L478.9,864.6 L480.3,864.0 L481.1,862.7 L482.2,861.6 L483.6,860.9 L484.8,860.0 M437.5,860.0 L438.7,861.2 L439.5,862.8 L440.9,863.8 L442.2,865.1 L443.1,866.5 L444.1,867.9 L445.3,869.2 L446.1,870.8 M424.5,926.7 L425.2,928.7 L426.3,930.5 L427.1,932.4 L427.8,934.4 L428.9,936.2 L429.5,938.2 L429.4,940.4 L430.5,942.3 L429.6,944.3 L428.5,946.2 L428.0,948.3 L428.1,950.5 L428.1,952.6 L428.2,954.7 L428.8,956.8 L428.8,959.0 L430.2,959.7 L431.6,960.4 L432.8,961.4 L433.8,962.6 L434.7,963.8 L435.6,965.1 L436.6,966.3 L437.5,967.6 L439.3,969.0 L441.6,969.8 L443.2,971.5 L444.5,973.4 L446.2,975.0 L447.4,977.0 L449.4,978.3 L450.4,980.5 L452.1,980.4 L453.8,980.1 L455.5,979.6 L457.2,979.6 L458.8,978.9 L460.3,978.0 L461.7,977.0 L463.3,976.2 L464.9,975.0 L466.2,973.7 L468.0,972.8 L469.4,971.4 L471.3,970.7 L472.7,969.3 L474.6,968.8 L476.2,967.6 L476.9,965.2 L476.8,962.6 L478.4,960.5 L478.3,957.9 L479.5,955.6 L481.5,954.1 L482.9,952.0 L484.8,950.4 L484.5,948.7 L484.3,947.0 L484.6,945.1 L483.6,943.6 L482.6,942.2 L481.8,940.7 L481.2,939.0 L480.5,937.5 L480.2,934.9 L478.9,932.7 L476.8,931.3 L475.2,929.3 L475.0,926.8 L473.6,924.8 L472.5,922.6 L471.9,920.2 L469.6,919.4 L467.4,918.5 L465.3,917.2 L463.3,915.9 L461.5,916.4 L459.8,916.9 L458.1,917.6 L456.5,918.4 L454.9,919.5 L453.4,920.4 L451.9,921.4 L450.4,922.4 L448.3,920.9 L446.0,919.7 L444.0,918.1 L443.0,915.6 L441.7,913.5 L440.0,911.7 L438.8,909.5 L437.5,907.3 M463.3,976.2 L463.9,978.7 L464.5,981.3 L465.7,983.7 L466.4,986.2 M545.0,860.0 L544.3,861.6 L544.0,863.3 L543.2,864.8 L542.2,866.2 L540.8,867.5 L540.5,869.4 L541.0,871.1 L540.7,872.9 L539.9,874.7 L538.8,876.3 L537.8,878.0 L537.2,879.9 L535.6,881.1 L534.3,882.6 L533.5,884.4 L532.1,885.8 L533.0,888.1 L534.3,890.1 L535.7,892.1 L536.4,894.4 L538.3,893.7 L540.2,893.1 L542.2,892.7 L543.9,891.7 L544.7,889.8 L546.1,888.3 L547.4,886.6 L549.3,885.8 L551.1,886.8 L553.1,887.0 L554.6,888.4 L556.4,889.1 L557.9,890.5 L559.0,892.2 L560.7,893.2 L562.2,894.4 L563.9,894.8 L565.5,895.5 L567.1,895.9 L568.7,896.5 L570.3,897.1 L572.0,897.4 L573.5,898.3 L575.1,898.7 L577.5,898.5 L579.5,900.0 L581.5,900.9 L583.5,902.1 L585.7,902.6 L588.0,901.9 L590.2,901.4 L592.4,900.9 L593.9,899.9 L595.7,899.6 L597.6,899.2 L599.1,898.2 L600.3,896.8 L601.7,895.5 L603.5,895.1 L605.3,894.4 L607.7,893.2 L610.3,892.6 L612.9,893.5 L615.6,893.7 L617.1,891.4 L619.2,889.9 L620.5,887.5 L622.5,885.8 L622.1,884.2 L621.7,882.6 L621.2,881.1 L620.8,879.5 L620.4,877.9 L620.2,876.2 L620.7,874.6 L620.4,872.9 L620.6,871.2 L621.0,869.6 L620.3,867.9 L620.8,866.2 L620.0,864.7 L619.4,863.1 L618.7,861.6 L618.2,860.0 M549.3,885.8 L548.9,888.2 L548.1,890.5 L546.2,892.2 L545.4,894.6 L544.0,896.6 L543.4,899.0 L542.2,901.1 L540.7,903.0 L540.5,904.7 L540.1,906.4 L539.1,907.9 L539.3,909.7 L538.5,911.3 L537.4,912.6 L537.3,914.4 L536.4,915.9 L538.1,915.2 L539.6,914.3 L541.3,914.7 L543.1,914.5 L544.8,914.1 L546.4,913.4 L547.8,912.5 L549.3,911.6 L551.0,911.8 L552.7,911.9 L554.3,911.4 L555.8,910.5 L557.4,910.2 L559.1,910.2 L560.7,909.7 L562.2,909.0 L563.9,909.0 L565.5,909.8 L567.2,909.2 L568.7,908.3 L570.4,908.2 L571.9,907.5 L573.5,907.2 L575.1,907.3 L577.7,907.8 L579.9,906.6 L581.3,904.5 L583.4,903.2 L585.2,901.5 L587.5,900.6 L589.9,901.6 L592.4,900.9 M575.1,907.3 L576.1,909.4 L577.1,911.4 L576.8,913.7 L576.6,915.9 L576.5,918.1 L576.3,920.3 L575.8,922.4 L575.1,924.5 L574.3,927.0 L572.9,929.1 L573.1,931.6 L572.9,934.2 L571.5,936.3 L570.6,938.7 L568.6,940.3 L566.5,941.8 L564.7,943.4 L562.7,944.7 L560.5,945.7 L558.2,946.5 L556.1,947.8 L553.7,948.3 L551.5,949.3 L549.3,950.4 L547.9,951.9 L547.0,953.8 L547.3,955.9 L546.6,957.9 L545.2,959.3 L543.9,960.8 L542.4,962.1 L540.7,963.3 L538.6,963.4 L536.4,963.5 L534.3,963.2 L532.1,963.3 L530.5,963.5 L528.8,963.6 L527.3,962.9 L525.7,962.6 L524.1,962.8 L522.4,962.8 L520.8,962.8 L519.2,963.3 L518.2,964.6 L517.6,966.2 L516.6,967.7 L516.7,969.5 L516.4,971.3 L517.5,972.9 L517.2,974.6 L516.7,976.2 L515.6,977.4 L514.6,978.8 L513.1,979.6 L512.0,980.8 L510.6,981.8 L509.4,983.1 L508.8,984.7 L508.1,986.2 M592.4,900.9 L591.8,902.6 L591.7,904.4 L591.3,906.1 L590.4,907.7 L590.5,909.5 L590.3,911.3 L590.6,913.1 L590.6,914.9 L590.4,916.7 L590.9,918.4 L591.9,919.9 L592.1,921.8 L592.4,923.5 L592.4,925.3 L592.1,927.1 L592.4,928.8 L594.1,929.2 L595.7,929.8 L597.4,929.6 L599.1,930.2 L600.7,930.9 L602.3,931.4 L603.9,932.0 L605.3,933.1 L606.8,935.1 L607.3,937.5 L608.8,939.4 L609.6,941.8 L611.0,942.4 L612.0,943.7 L613.3,944.6 L614.7,945.3 L615.9,946.3 L616.7,947.6 L617.2,949.1 L618.2,950.4 L620.4,950.5 L622.7,950.3 L624.8,951.3 L626.9,951.9 L628.6,953.5 L630.8,954.3 L633.1,954.2 L635.4,954.7 L636.8,953.7 L638.1,952.6 L639.8,952.1 L641.6,952.3 L643.2,952.2 L644.8,951.8 L646.5,952.1 L648.2,951.7 L649.8,951.7 L651.4,951.4 L653.1,951.8 L654.7,951.5 L656.3,950.9 L657.9,950.4 L659.5,950.4 L661.2,950.4 L662.4,949.4 L663.6,948.4 L664.5,947.2 L665.8,946.4 L666.9,945.2 L668.2,944.4 L669.2,943.2 L669.8,941.8 L669.9,938.8 L670.8,935.9 L671.8,934.8 L673.0,933.8 L673.7,932.5 L674.1,931.0 L674.8,929.7 L675.6,928.4 L676.7,927.4 L677.7,926.2 L678.2,924.8 L678.4,923.3 L678.6,921.8 L678.4,920.2 L680.5,918.4 L681.8,915.9 L683.8,914.1 L686.0,912.5 L687.6,910.3 L688.7,907.8 L690.3,905.5 L691.3,903.0 L692.3,901.8 L693.0,900.4 L694.0,899.0 L695.6,898.7 M622.5,885.8 L624.0,887.1 L625.4,888.6 L626.7,890.1 L627.8,891.8 L629.8,892.3 L631.8,892.5 L633.7,893.2 L635.4,894.4 L634.9,896.5 L634.8,898.7 L635.8,900.8 L635.4,903.0 L638.1,904.0 L640.3,905.7 L643.2,906.1 L645.7,907.3 L648.5,906.4 L651.3,907.1 L654.1,906.4 L656.9,907.3 L659.3,906.0 L662.1,905.2 L664.8,905.1 L667.6,904.8 L668.9,905.8 L670.2,906.6 L671.8,906.2 L673.3,905.8 L676.1,904.8 L678.4,903.0 L680.2,903.5 L682.0,904.0 L683.9,903.6 L685.8,903.6 L687.2,902.3 L688.6,901.2 L690.1,900.1 L691.3,898.7 L692.5,896.6 L694.0,894.7 L695.4,892.7 L696.2,890.4 L696.3,887.9 L696.5,885.3 L697.7,882.9 L699.9,881.5 L701.7,880.6 L703.1,879.3 L704.8,878.3 L706.1,876.8 L708.0,876.2 L710.0,875.8 L711.4,874.4 L712.8,872.9 L714.7,872.6 L716.3,871.8 L717.8,870.6 L719.3,869.6 L721.3,869.9 L723.3,870.2 L724.8,868.8 L726.2,867.4 L727.6,866.1 L728.6,864.5 L730.5,864.0 L731.8,862.6 L733.3,861.6 L735.2,861.1 L736.9,860.6 L738.7,860.0 M635.4,894.4 L637.2,893.6 L638.9,892.7 L640.8,892.2 L642.3,890.9 L644.4,890.5 L646.4,890.2 L647.5,888.5 L649.3,887.3 L651.4,887.4 L653.3,886.3 L655.4,885.7 L657.1,884.4 L658.8,883.0 L660.5,881.6 L661.0,879.4 L661.2,877.2 L663.6,876.9 L665.8,875.7 L667.9,874.4 L669.8,872.9 L671.5,872.8 L673.1,872.4 L674.5,871.4 L676.1,871.0 L677.8,871.0 L679.4,870.7 L681.1,870.5 L682.7,870.4 L684.4,870.4 L686.1,870.3 L687.7,870.2 L689.4,870.7 L690.8,871.7 L692.1,872.9 L693.9,873.2 L695.6,872.9 L697.7,871.6 L699.6,870.1 L701.8,869.1 L704.2,868.6 M695.6,898.7 L696.5,901.3 L696.7,903.9 L698.9,905.5 L700.6,907.6 L700.3,910.2 L700.0,912.8 L701.0,915.2 L702.0,917.6 L701.9,920.2 L701.2,922.7 L701.4,925.2 L702.1,927.7 L701.8,930.1 L701.3,932.6 L699.8,934.8 L699.9,937.5 L700.7,938.8 L702.1,939.5 L703.6,939.5 L705.1,939.4 L707.9,939.9 L710.4,941.2 L712.9,942.7 L715.9,942.4 L718.7,942.1 L721.4,941.8 L724.1,941.0 L726.5,939.8 L728.9,938.3 L731.0,936.5 L733.4,935.0 L735.9,933.8 L737.2,931.3 L738.7,928.8 M618.2,950.4 L617.7,952.8 L616.6,955.1 L615.2,957.3 L614.7,959.8 L612.3,960.4 L609.9,961.3 L607.6,962.4 L605.3,963.3 L603.6,963.9 L601.8,963.8 L600.0,963.6 L598.2,963.7 L597.1,965.1 L595.6,966.1 L593.8,966.5 L592.4,967.6 L590.2,968.7 L588.1,969.8 L586.1,971.2 L583.8,971.9 L582.1,973.3 L582.6,975.4 L582.5,977.3 L582.4,979.1 L581.5,980.8 L580.8,982.5 L580.0,984.3 L580.3,986.2 M635.4,954.7 L635.9,956.8 L636.8,958.9 L637.2,961.1 L637.8,963.2 L638.3,965.4 L638.5,967.6 L639.0,969.8 L639.7,971.9 L642.1,971.3 L644.6,971.9 L646.2,970.1 L648.0,968.4 L650.2,968.7 L652.5,968.7 L654.7,968.0 L656.9,967.6 L658.5,966.5 L660.3,965.6 L662.3,965.4 L664.0,964.2 L665.0,962.5 L666.3,961.0 L668.3,960.4 L669.8,959.0 L672.0,959.6 L673.9,961.0 L676.1,961.2 L678.4,961.1 L680.4,962.3 L682.5,963.2 L684.7,963.8 L687.0,963.3 L689.2,962.7 L691.2,961.4 L692.7,959.5 L695.1,959.2 L697.4,959.1 L699.7,958.8 L702.0,958.6 L704.2,959.0 L706.3,957.9 L708.4,957.0 L710.7,957.3 L713.0,957.3 L715.1,956.7 L717.2,956.1 L719.2,955.0 L721.4,954.7 M721.4,941.8 L721.3,943.7 L721.1,945.6 L721.2,947.5 L722.0,949.3 L722.4,951.2 L722.0,953.0 L722.3,954.9 L722.3,956.8 L722.2,958.8 L722.5,960.7 L722.0,962.5 L721.2,964.3 L721.3,966.2 L721.2,968.1 L721.4,970.0 L721.4,971.9 L722.6,972.9 L723.5,974.1 L724.5,975.4 L725.8,976.1 L726.3,977.7 L727.4,978.8 L728.7,979.6 L730.1,980.5 M669.8,959.0 L668.6,960.4 L667.5,961.9 L667.5,963.9 L666.6,965.6 L667.0,967.4 L667.3,969.2 L667.4,971.1 L667.3,972.9 L666.0,974.3 L665.3,976.0 L665.2,977.9 L665.2,979.7 L664.5,981.4 L663.7,983.0 L662.9,984.5 L662.2,986.2 M743.0,860.0 L742.8,861.8 L741.9,863.3 L741.7,865.0 L741.2,866.7 L740.3,868.2 L739.1,869.4 L738.0,870.8 L737.2,872.3 L736.8,874.0 L736.7,875.7 L736.2,877.5 L736.6,879.2 L736.9,880.9 L737.3,882.6 L738.2,884.1 L738.7,885.8 L739.3,887.3 L739.3,888.9 L739.1,890.4 L739.1,892.0 L739.1,893.5 L739.2,895.1 L738.8,896.6 L738.9,898.2 L739.7,899.6 L741.0,900.5 L742.0,901.7 L743.3,902.6 L743.8,904.1 L744.9,905.3 L746.3,906.1 L747.3,907.3 L746.5,908.9 L746.2,910.6 L747.6,911.9 L747.6,913.8 L747.5,915.5 L746.6,917.0 L746.9,918.6 L747.3,920.2 L749.0,920.2 L750.4,919.0 L752.0,918.7 L753.5,917.8 L755.2,917.4 L756.4,916.1 L758.1,915.9 L759.7,915.5 L761.5,916.0 L763.3,915.4 L764.8,914.5 L766.5,913.8 L768.1,914.3 L769.7,915.0 L771.4,915.5 L773.1,915.9 L773.9,918.3 L774.5,920.7 L775.9,922.7 L777.1,924.8 L779.4,925.8 L781.4,927.2 L783.8,927.7 L786.0,928.8 L787.6,930.7 L788.4,933.0 L789.8,935.0 L790.5,937.3 L791.6,939.5 L792.8,941.6 L793.6,943.9 L794.6,946.1 L796.9,945.9 L799.0,946.8 L800.9,948.2 L803.1,948.7 L805.2,949.3 L807.4,949.7 L809.6,950.3 L811.8,950.4 L813.2,949.6 L814.5,948.7 L816.0,949.0 L817.6,949.2 L820.0,947.5 L822.4,945.8 L823.6,944.8 L824.6,943.6 L825.9,942.8 L827.3,942.1 L828.7,941.6 L830.3,941.5 L831.8,942.0 L833.3,941.8 M790.3,868.6 L792.2,870.4 L794.6,871.2 L796.5,872.8 L797.9,875.0 L800.2,875.8 L802.6,876.4 L805.1,876.6 L807.5,877.2 L807.5,879.8 L807.2,882.4 L808.4,884.7 L810.3,886.6 L811.6,888.8 L812.2,891.3 L814.3,892.6 L816.1,894.4 L814.8,895.9 L814.0,897.7 L813.0,899.4 L812.4,901.3 L811.0,902.7 L810.0,904.4 L808.7,905.8 L807.5,907.3 L808.0,909.6 L807.4,911.8 L807.0,914.0 L806.3,916.2 L804.9,918.0 L804.6,920.3 L803.6,922.3 L803.2,924.5 L806.0,924.6 L808.6,923.9 L811.2,924.8 L814.0,925.1 L816.6,924.3 L819.3,923.9 L822.1,923.4 L824.7,924.5 M816.1,894.4 L817.5,892.7 L819.7,892.3 L821.7,891.4 L823.8,892.0 L825.2,890.4 L827.0,889.4 L827.7,887.4 L829.0,885.8 M743.0,963.3 L744.6,963.7 L746.3,963.7 L748.1,963.7 L749.7,964.0 L751.5,963.7 L752.9,962.6 L754.5,962.0 L755.8,961.0 L757.3,960.1 L758.8,959.3 L760.5,959.6 L762.2,959.5 L763.9,959.1 L765.5,959.2 L767.1,958.9 L768.8,959.0 L771.5,958.1 L774.4,958.0 L777.1,958.8 L779.9,959.2 L782.7,959.6 L785.5,960.2 L788.3,961.1 L790.3,963.3 L792.9,964.3 L795.6,965.2 L798.1,966.5 L800.6,967.9 L803.4,968.0 L806.2,968.2 L809.0,967.6 L811.8,967.6 L814.5,966.8 L817.2,966.6 L819.8,965.7 L822.4,964.8 L825.2,965.2 L827.9,964.5 L830.6,963.7 L833.3,963.3 L834.9,962.7 L836.5,962.9 L838.1,963.2 L839.7,962.9 L841.3,963.5 L842.8,964.1 L844.3,964.4 L846.0,964.5 L847.6,964.6 L849.2,964.2 L850.8,964.4 L852.4,964.5 L853.9,963.9 L855.5,963.8 L857.1,963.7 L858.6,963.3 M790.3,963.3 L790.3,961.0 L790.9,958.7 L790.4,956.5 L790.5,954.2 L792.0,952.4 L792.8,950.2 L793.7,948.2 L794.6,946.1 M760.2,976.2 L763.0,976.1 L765.6,975.2 L768.3,974.3 L770.7,973.0 L773.5,974.0 L776.4,974.2 L779.1,973.3 L781.7,971.9 L783.5,972.6 L785.2,973.8 L786.8,974.9 L788.6,975.7 L790.6,976.1 L792.6,976.4 L794.4,977.2 L796.3,977.8 L798.2,978.2 L800.2,978.6 L801.9,979.8 L803.9,980.0 L805.8,980.8 L807.8,981.0 L809.8,980.8 L811.8,980.5 L812.1,978.8 L812.6,977.1 L813.7,975.8 L815.0,974.6 L816.8,974.8 L818.3,973.9 L819.9,973.5 L821.6,973.3 L823.0,973.8 L824.3,974.7 L825.9,974.6 L827.4,975.1 L828.9,975.6 L830.4,975.1 L831.8,975.9 L833.3,976.2 M862.4,964.7 L863.7,966.5 L864.6,968.6 L865.9,970.5 L867.7,971.9 M686.6,330.0 L687.1,331.9 L688.1,333.6 L689.7,334.7 L691.2,336.0 L691.6,337.9 L691.8,339.8 L692.3,341.6 L693.3,343.3 L694.3,345.5 L696.0,347.3 L696.8,349.6 L698.3,351.6 L698.7,354.2 L698.8,356.9 L700.4,359.1 L701.6,361.5 L702.1,363.7 L702.4,366.0 L704.1,367.4 L705.2,369.4 L704.2,371.6 L703.4,373.7 L704.6,375.8 L704.9,378.1 L704.6,379.8 L704.1,381.5 L703.6,383.1 L703.2,384.8 L704.1,387.6 L705.0,390.5 L704.4,391.9 L704.4,393.4 L704.8,394.9 L704.9,396.4 L705.9,398.3 L706.7,400.2 L707.9,402.1 L709.9,403.0 L709.9,405.7 L711.0,408.2 L712.3,410.5 L713.2,413.0 L711.8,415.2 L711.2,417.8 L711.6,420.3 L711.5,422.9 L712.3,424.2 L712.8,425.7 L713.3,427.1 L714.1,428.4 L714.7,429.9 L716.0,430.8 L717.2,431.8 L718.2,432.9 M701.6,361.5 L702.9,360.7 L704.3,360.0 L705.9,360.0 L707.4,360.4 L710.3,359.6 L713.2,359.0 L715.4,358.9 L717.5,358.2 L719.5,357.4 L721.5,356.6 M704.9,333.3 L703.1,335.0 L702.2,337.2 L700.2,338.5 L698.3,340.0 L697.8,342.9 L697.6,345.8 L698.3,348.6 L698.3,351.6 M704.9,378.1 L707.9,378.0 L710.9,377.9 L713.7,378.9 L716.5,379.8 L719.5,379.9 L722.3,380.6 L725.2,379.8 L728.1,379.8 L730.0,380.2 L731.8,380.8 L733.4,381.8 L734.8,383.1 L736.3,382.7 L737.7,382.1 L738.6,380.9 L739.8,379.8 M739.8,379.8 L739.5,381.5 L739.1,383.2 L738.8,385.0 L739.3,386.7 L739.0,388.5 L738.4,390.1 L737.5,391.6 L736.4,393.1 L734.9,394.8 L734.1,397.0 L733.7,399.2 L733.1,401.4 L734.6,403.6 L735.9,406.0 L734.1,408.4 L734.8,411.3 L733.5,413.8 L730.9,415.0 L729.5,417.3 L728.1,419.6 L727.4,420.9 L726.6,422.2 L725.1,422.9 L724.4,424.3 L723.7,425.6 L723.0,427.0 L722.4,428.4 L721.5,429.6 L719.3,430.7 L718.2,432.9 M684.2,382.6 L685.4,383.9 L686.9,384.9 L688.4,385.7 L690.0,386.4 L691.6,388.1 L692.4,390.3 L693.1,392.4 L693.3,394.7 L693.1,397.2 L692.7,399.7 L693.0,402.2 L693.3,404.7 L693.4,406.4 L693.8,408.0 L693.8,409.7 L693.5,411.3 L693.4,413.0 L693.4,414.6 L693.2,416.3 L693.3,418.0 L695.0,419.2 L696.5,420.7 L697.7,422.5 L698.3,424.6 L699.9,425.1 L701.6,425.2 L703.2,425.4 L704.9,425.2 L706.6,425.3 L708.2,425.6 L710.0,425.3 L711.5,426.3 L712.1,428.1 L712.6,429.9 L713.8,431.3 L714.9,432.9 L716.6,433.6 L718.2,434.6 M718.2,434.6 L720.3,434.4 L722.3,433.7 L724.4,433.4 L726.5,432.9 L729.0,432.6 L731.4,431.9 L733.9,431.2 L736.4,431.2 L738.4,431.5 L740.1,432.7 L741.9,433.4 L743.7,434.1 L745.7,434.4 L747.7,434.4 L749.5,433.5 L751.4,432.9 L751.5,434.6 L751.0,436.2 L751.5,438.0 L750.6,439.6 L750.3,441.2 L749.7,442.8 L749.3,444.5 L749.7,446.2 L750.5,448.7 L751.4,451.2 L752.9,452.3 L754.8,452.6 L756.5,453.4 L758.0,454.5 L760.3,453.1 L763.0,452.8 L763.3,450.5 L763.7,448.3 L765.1,446.4 L766.3,444.5 L766.2,442.4 L766.3,440.4 L766.4,438.3 L766.3,436.2 L766.4,433.9 L765.4,431.8 L764.0,429.9 L763.0,427.9 L763.7,425.5 L764.6,423.1 L764.3,420.5 L764.6,418.0 L763.7,415.8 L763.4,413.5 L763.2,411.1 L762.2,409.0 L762.3,406.6 L761.7,404.4 L761.2,402.1 L761.3,399.7 L761.9,396.8 L762.0,393.9 L762.6,391.0 L763.0,388.1 L761.6,386.3 L761.6,384.1 L761.9,381.9 L761.3,379.8 L763.4,378.6 L765.3,377.1 L766.8,375.3 L768.0,373.2 L769.3,371.1 L771.3,369.8 L773.7,370.1 L776.0,369.6 L778.2,368.6 L779.6,366.5 L781.7,364.8 L782.8,362.3 L784.1,359.9 L786.2,358.2 L785.9,356.5 L785.2,354.9 L784.9,353.3 L784.6,351.6 L783.6,349.3 L783.0,347.0 M766.0,342.4 L768.0,341.6 M761.3,366.5 L762.9,364.6 L763.6,362.2 L764.6,360.0 L766.3,358.2 L767.8,356.7 L769.7,355.8 L771.4,354.6 L772.9,353.2 L774.3,352.1 L775.4,350.7 L776.8,349.7 L777.9,348.3 L779.9,348.1 L781.6,347.0 M779.6,366.5 L780.4,367.8 L780.9,369.3 L781.4,370.7 L782.0,372.1 L782.2,373.6 L782.8,375.1 L782.7,376.6 L782.9,378.1 L782.1,380.1 L781.6,382.2 L781.1,384.3 L781.2,386.4 L779.0,387.4 L777.0,388.8 L774.9,390.4 L774.6,393.1 L772.7,394.3 L770.6,395.0 L768.4,395.7 L766.3,396.4 L764.9,397.0 L763.3,397.3 L762.4,398.6 L761.3,399.7 M784.6,351.6 L787.5,351.8 L790.4,352.5 L793.2,353.1 L796.2,353.2 L797.7,352.8 L798.9,351.9 L800.1,351.0 L801.2,349.9 L800.2,348.4 L799.6,346.8 L799.9,345.0 L799.5,343.3 L800.5,341.1 L800.7,338.6 M786.2,373.2 L788.6,371.7 L791.0,370.2 L793.5,369.1 L796.2,368.2 L797.9,367.4 L799.5,366.5 L799.9,364.6 L801.2,363.2 L803.9,363.1 L806.1,361.5 L806.8,363.3 L807.8,364.9 L809.3,362.7 L810.8,360.7 L811.4,358.2 L812.2,355.7 L811.6,353.2 L809.9,351.2 L809.4,348.6 L807.8,346.6 L810.3,347.4 L813.0,346.9 L815.4,345.9 L817.8,344.9 L819.2,345.4 L820.6,346.1 L822.1,346.2 L823.6,346.6 L825.0,345.9 L826.5,345.8 L828.1,346.0 L829.4,344.9 M801.2,363.2 L800.9,365.7 L800.5,368.2 L800.7,370.7 L800.6,373.2 L800.8,375.7 L800.4,378.2 L800.6,380.8 L799.5,383.1 M796.2,384.8 L797.4,385.7 L798.4,386.9 L798.6,388.4 L799.5,389.8 L798.5,391.8 L797.5,393.8 L797.0,395.9 L796.2,398.0 L795.5,399.6 L794.6,401.0 L793.8,402.4 L793.0,404.0 L792.3,405.5 L791.8,407.1 L790.2,408.0 L789.5,409.7 L788.8,411.1 L788.1,412.5 L787.5,413.9 L786.8,415.3 L786.7,417.0 L786.5,418.6 L786.0,420.3 L784.6,421.3 L785.0,423.7 L783.9,425.8 L782.9,428.0 L781.2,429.6 L781.7,431.4 L782.8,433.0 L783.5,434.7 L784.6,436.2 L787.4,437.0 L790.3,437.8 L791.8,438.0 L793.2,437.3 L794.6,438.0 L796.2,437.9 L798.7,438.0 L801.3,437.8 L803.7,438.8 L806.1,439.5 L807.3,438.6 L808.4,437.5 L809.9,437.2 L811.1,436.2 L812.0,434.9 L812.9,433.6 L814.1,432.5 L815.6,432.0 L816.9,431.0 L817.9,429.6 L817.7,427.9 L817.8,426.3 L817.0,424.5 L816.9,422.5 L816.6,420.6 L815.9,418.8 L816.5,417.0 L816.7,415.0 L816.8,413.1 L817.8,411.3 L818.8,409.7 L819.9,408.0 L819.9,406.0 L820.0,404.0 L820.5,402.1 L820.2,400.2 L819.6,398.3 L819.4,396.4 L819.0,393.8 L817.8,391.4 L819.4,391.0 L821.0,390.2 L822.6,389.4 L824.4,389.8 L825.4,391.3 L826.2,392.9 L827.7,394.0 L829.4,394.7 L830.5,395.7 L831.3,397.0 L832.3,398.2 L832.7,399.7 L834.0,400.5 L835.4,401.1 L836.1,402.6 L837.7,403.0 L839.6,405.1 L839.2,407.9 L838.8,410.4 L839.3,413.0 L840.1,414.3 L841.0,415.6 L842.1,416.6 L843.2,417.8 L844.7,418.1 L846.2,417.6 L847.8,417.9 L849.3,418.0 M806.1,361.5 L806.0,363.7 L806.6,365.7 L807.0,367.8 L807.3,369.9 L808.5,371.7 L808.7,373.9 L808.7,376.1 L809.5,378.1 L811.5,379.8 L813.7,381.4 L816.1,382.6 L817.8,384.8 L819.6,385.8 L821.4,386.9 L823.2,388.0 L824.4,389.8 M829.4,344.9 L829.2,347.3 L829.6,349.6 L829.9,352.0 L829.3,354.3 L828.4,356.6 L828.3,359.0 L827.4,361.2 L826.1,363.2 L827.3,365.1 L827.5,367.4 L828.9,369.3 L829.3,371.5 L830.5,373.4 L831.6,375.4 L832.9,377.4 L832.7,379.8 L834.2,380.4 L835.0,381.8 L835.4,383.3 L836.1,384.7 L837.6,387.3 L839.3,389.8 L840.1,391.2 L841.2,392.4 L841.5,394.0 L842.1,395.4 L842.0,397.1 L842.3,398.7 L843.2,400.2 L844.3,401.4 L844.7,404.3 L844.4,407.3 L845.5,410.0 L846.0,413.0 M822.7,330.0 L823.7,331.9 L825.1,333.6 L824.9,335.8 L825.1,337.9 L826.0,339.8 L827.4,341.3 L828.0,343.3 L829.4,344.9 M829.4,344.9 L831.0,345.3 L832.3,346.4 L833.5,347.5 L834.9,348.4 L836.2,349.5 L837.7,350.3 L838.6,351.7 L839.3,353.2 L841.6,354.7 L843.4,356.6 L845.6,358.2 L847.6,359.9 L848.7,361.7 L849.9,363.4 L851.4,364.8 L852.6,366.5 L853.9,368.5 L855.8,370.0 L857.7,371.3 L859.3,373.2 L862.2,372.6 L865.0,371.6 L867.9,371.2 L870.9,371.5 M869.2,330.0 L868.5,332.6 L868.8,335.2 L869.7,337.6 L870.9,340.0 L870.1,342.6 L868.5,344.7 L868.1,347.3 L867.6,349.9 L868.1,351.6 L867.7,353.3 L867.2,355.0 L867.8,356.7 L867.1,358.3 L866.6,359.9 L866.2,361.5 L865.9,363.2 L866.6,365.7 L868.7,367.2 L869.2,369.6 L870.9,371.5 L871.7,373.6 L872.6,375.6 L873.0,377.8 L874.2,379.8 L873.0,380.9 L872.3,382.3 L872.4,383.9 L871.6,385.3 L870.7,386.7 L870.7,388.3 L870.6,389.9 L870.9,391.4 L869.9,393.6 L868.7,395.8 L867.4,397.8 L865.9,399.7 L864.3,400.7 L862.7,401.7 L860.9,402.2 L859.3,403.0 M849.3,418.0 L851.0,417.6 L852.5,416.6 L854.2,416.6 L855.9,416.3 L857.2,415.0 L858.5,413.8 L859.9,412.6 L861.1,411.3 L862.9,410.8 L864.8,410.5 L866.2,409.3 L867.6,408.0 L868.5,406.5 L869.8,405.3 L871.6,404.7 L872.5,403.0 L874.3,403.9 L876.3,403.8 L878.1,403.2 L880.0,403.0 M872.5,403.0 L873.7,405.0 L875.0,407.0 L876.2,409.1 L878.1,410.5 L879.0,412.7 L879.8,414.9 L880.0,417.3 L880.0,419.6 M846.0,419.6 L844.4,421.4 L843.3,423.6 L841.3,424.9 L839.3,426.3 L839.3,428.8 L839.3,431.4 L838.3,433.7 L837.7,436.2 L836.7,437.5 L835.7,438.8 L834.7,440.1 L834.0,441.6 L832.8,442.7 L831.7,443.9 L830.5,445.0 L829.4,446.2 L826.9,446.6 L824.4,447.0 L822.0,447.8 L819.4,447.8 L818.2,446.7 L816.8,445.9 L815.9,444.5 L814.5,443.5 L813.5,442.2 L812.8,440.7 L811.7,439.4 L811.1,437.9 M839.3,424.6 L841.2,424.5 L843.1,424.3 L844.9,424.1 L846.8,424.0 L848.5,423.0 L850.4,422.6 L852.4,422.8 L854.3,422.9 L855.3,424.2 L856.6,425.2 L858.2,426.1 L858.6,427.8 L860.0,428.7 L860.7,430.2 L861.6,431.6 L862.6,432.9 L862.8,434.6 L863.3,436.2 L862.6,437.8 L862.4,439.5 L861.9,441.2 L862.2,442.9 L862.2,444.5 L862.6,446.2 L861.2,448.0 L861.5,450.3 L861.5,452.4 L860.8,454.5 L860.3,456.5 L859.9,458.6 L859.9,460.7 L859.3,462.8 L857.9,464.8 L856.4,466.7 L855.6,469.0 L854.3,471.1 L852.3,470.3 L850.1,470.2 L848.0,470.6 L846.0,471.1 L844.2,468.7 L842.4,466.3 L841.6,465.0 L840.5,463.9 L839.1,463.3 L837.7,462.8 L835.8,461.4 L833.9,460.1 L831.7,459.6 L829.4,459.5 L829.2,457.7 L829.1,456.0 L829.7,454.4 L830.3,452.8 L830.1,451.1 L829.6,449.5 L829.5,447.9 L829.4,446.2 M862.6,446.2 L864.3,447.7 L866.5,448.3 L868.6,447.8 L870.9,447.8 L873.2,447.5 L875.5,447.6 L877.9,447.2 L880.0,446.2 M859.3,462.8 L861.3,463.3 L863.4,463.8 L865.5,463.8 L867.6,464.4 L869.1,464.3 L870.7,464.7 L872.2,464.6 L873.8,464.6 L875.3,464.7 L876.9,464.7 L878.5,465.0 L880.0,464.4 M829.4,459.5 L828.9,461.4 L828.1,463.3 L826.8,464.8 L825.2,466.1 L824.2,467.8 L822.8,469.2 L822.0,471.0 L821.1,472.7 L818.5,474.3 L816.1,476.1 L817.2,478.5 L817.6,481.1 L818.7,483.5 L819.4,486.0 L821.0,488.3 L822.6,490.6 L823.6,493.3 L824.4,496.0 M766.3,444.5 L768.8,443.3 L770.5,441.1 L772.2,438.9 L772.9,436.2 L774.7,436.4 L776.5,436.2 L778.1,435.5 L779.6,434.6 L782.2,435.0 L784.6,436.2 M758.0,454.5 L757.7,457.0 L755.8,458.8 L754.1,460.6 L753.0,462.8 L753.3,464.5 L753.6,466.2 L753.0,467.8 L753.2,469.5 L752.8,471.2 L753.0,473.0 L752.4,474.7 L751.4,476.1 L752.6,478.4 L753.0,481.0 L753.7,483.6 L754.7,486.0 L756.6,484.8 L758.9,484.4 L761.1,483.9 L763.0,482.7 L764.6,482.2 L766.3,481.9 L768.1,481.8 L769.6,481.0 L772.0,480.2 L774.6,480.1 L777.1,479.6 L779.6,479.4 L781.4,479.7 L783.1,479.2 L784.8,479.9 L786.6,479.5 L788.0,480.6 L789.5,481.6 L791.1,482.4 L792.9,482.7 L794.4,482.0 L796.1,481.7 L797.8,481.2 L799.5,481.0 L800.9,482.3 L802.6,483.2 L804.4,483.8 L806.1,484.4 L807.4,483.3 L808.5,482.1 L809.9,481.3 L810.9,480.0 L812.1,478.9 L813.4,477.9 L814.8,477.1 L816.1,476.1 M758.0,454.5 L760.4,456.2 L762.5,458.3 L763.7,459.2 L764.9,460.1 L765.6,461.4 L766.3,462.8 L766.2,464.3 L766.4,465.9 L766.5,467.4 L767.0,468.9 L767.8,470.2 L768.0,471.8 L768.9,473.1 L769.6,474.4 L769.8,476.1 L770.0,477.7 L769.8,479.4 L769.6,481.0 M718.2,434.6 L718.2,436.1 L718.2,437.6 L718.8,438.9 L719.3,440.4 L718.7,443.3 L718.2,446.2 L716.6,447.6 L715.7,449.5 L714.5,451.2 L713.2,452.8 L712.6,455.7 L711.8,458.5 M713.4,461.7 L715.0,463.7 L716.3,465.8 L717.5,468.2 L719.8,469.4 L720.9,471.9 L722.7,473.8 L724.1,476.0 L725.7,478.2 M736.4,431.2 L735.5,432.4 L734.2,433.2 L732.8,433.9 L731.5,434.6 L730.1,435.2 L728.6,435.7 L727.8,437.0 L726.5,437.9 L727.9,439.2 L728.8,440.9 L729.2,442.7 L729.8,444.5 L728.4,446.5 L727.5,448.8 L725.8,450.6 L724.8,452.8 L724.5,455.5 L726.0,457.7 L725.8,460.3 L726.5,462.8 L727.5,464.0 L727.6,465.7 L728.8,466.7 L730.0,467.6 L730.9,468.8 L731.9,470.0 L732.5,471.3 L733.1,472.7 L734.6,474.6 L736.4,476.1 L737.9,477.9 L739.8,479.4 M680.0,452.8 L682.0,450.9 L684.7,450.2 L687.3,449.4 L690.0,449.5 L692.6,449.0 L694.9,447.9 L697.5,447.2 L699.9,446.2 L701.5,446.6 L703.2,446.6 L704.9,446.4 L706.6,446.2 L707.9,447.7 L708.9,449.6 L710.6,450.9 L711.5,452.8 M844.3,472.7 L844.3,474.5 L844.3,476.2 L845.2,477.8 L846.1,479.3 L845.5,480.9 L845.5,482.6 L846.1,484.3 L846.0,486.0 L844.7,487.4 L844.2,489.2 L843.7,491.0 L843.7,492.9 L843.6,494.7 L842.8,496.3 L842.4,498.1 L842.7,500.0 M852.6,471.1 L853.2,473.3 L853.4,475.7 L854.0,477.9 L854.7,480.1 L855.4,482.4 L855.9,484.7 L855.9,487.0 L855.9,489.3 L855.8,492.2 L856.2,495.1 L857.9,497.4 L859.3,500.0 M752.8,494.3 L753.8,495.7 L754.6,497.2 L755.4,498.6 L756.3,500.0" fill="none" stroke="#9c9c9c" stroke-width="0.75" stroke-linejoin="round"/>
<path fill-rule="evenodd" fill="#e0f1fc" d="M83.5,36 L1172.5,36 L1172.5,987 L83.5,987Z M83.5,422.0 L85.0,422.4 L86.5,423.0 L88.1,423.3 L89.6,423.8 L92.0,423.5 L94.4,424.1 L96.6,425.0 L99.0,425.4 L100.6,425.7 L102.2,426.0 L103.8,426.6 L105.4,426.8 L107.0,427.2 L108.7,427.2 L110.3,427.6 L111.9,427.8 L114.3,428.2 L116.7,428.6 L114.6,429.6 L112.7,431.0 L113.4,432.6 L114.3,434.2 L115.6,434.3 L116.9,434.6 L118.3,434.8 L119.6,434.8 L120.9,435.1 L122.2,435.3 L123.5,435.9 L124.6,436.6 L127.0,437.2 L129.5,437.6 L131.8,438.4 L134.2,439.0 L135.8,439.0 L137.4,439.0 L139.0,438.9 L140.6,438.6 L142.2,438.2 L143.8,438.2 L145.5,438.2 L146.9,437.4 L148.5,437.4 L150.2,437.3 L151.8,437.0 L153.4,436.8 L154.9,436.1 L156.5,435.6 L158.1,435.3 L159.7,435.0 L162.0,434.0 L164.4,433.6 L166.8,433.1 L169.2,432.6 L170.4,432.3 L171.7,432.0 L172.9,431.6 L174.2,431.5 L175.3,430.8 L176.5,430.4 L177.5,429.7 L178.8,429.4 L180.0,429.0 L181.4,428.9 L182.6,428.5 L183.9,428.4 L185.1,427.9 L186.4,427.5 L187.5,426.8 L188.5,426.1 L189.7,425.5 L190.9,425.0 L192.0,424.4 L193.2,423.9 L194.4,423.4 L195.5,422.8 L196.8,422.5 L197.9,421.8 L199.8,420.5 L201.8,419.3 L204.1,419.0 L206.3,418.4 L208.2,417.1 L210.2,416.1 L212.1,414.8 L213.9,413.5 L215.6,412.1 L217.6,411.1 L219.5,410.0 L221.2,408.5 L222.9,407.1 L224.6,405.7 L226.2,404.2 L228.2,403.1 L229.5,402.5 L230.9,402.1 L232.3,401.6 L233.7,401.5 L235.1,401.2 L236.5,400.9 L238.0,400.9 L239.4,400.7 L241.8,400.2 L244.2,400.7 L246.5,401.3 L248.9,401.5 L250.5,401.2 L252.1,400.6 L253.7,400.2 L255.3,399.9 L256.4,399.2 L257.6,398.6 L258.7,397.9 L259.8,397.3 L261.1,397.0 L262.4,396.8 L263.6,396.3 L264.9,395.9 L267.0,396.4 L269.0,397.2 L271.1,397.6 L273.2,398.2 L274.8,399.9 L276.8,401.0 L278.5,402.6 L279.6,404.6 L281.5,405.8 L283.4,407.1 L285.5,408.0 L287.5,409.1 L289.9,408.9 L292.4,408.9 L294.6,407.9 L297.1,407.8 L298.3,408.2 L299.4,408.8 L300.7,409.1 L301.9,409.4 L303.1,409.9 L304.2,410.6 L305.4,410.8 L306.7,411.0 L308.7,410.8 L310.7,410.8 L312.6,410.0 L314.6,410.2 L315.9,409.3 L317.2,408.5 L318.5,407.6 L319.9,406.7 L320.9,405.5 L322.1,404.4 L323.5,403.5 L325.0,403.0 L325.7,404.1 L326.6,405.1 L327.8,405.5 L329.1,405.9 L330.3,406.3 L331.3,407.0 L332.5,407.6 L333.7,407.8 L335.7,407.8 L337.7,408.0 L339.7,407.8 L341.7,407.8 L343.2,407.9 L344.7,408.2 L346.2,408.3 L347.6,408.9 L349.0,409.6 L350.0,410.7 L351.5,411.3 L352.9,411.8 L354.5,412.2 L356.0,412.7 L357.6,413.3 L359.2,413.5 L360.7,414.2 L362.3,414.7 L363.9,414.9 L365.6,415.0 L367.6,415.0 L369.6,415.4 L371.6,415.3 L373.6,414.9 L375.6,414.9 L377.6,414.3 L379.6,414.4 L381.6,414.2 L383.6,414.0 L385.6,414.1 L387.6,414.1 L389.6,414.4 L391.6,414.7 L393.5,415.2 L395.5,415.5 L397.5,415.8 L399.1,415.7 L400.7,415.3 L402.3,415.0 L403.9,414.6 L405.4,414.3 L407.0,414.0 L408.7,413.9 L410.2,413.4 L411.5,413.2 L412.7,413.1 L413.9,412.5 L415.1,412.0 L416.3,411.6 L417.5,411.3 L418.7,410.7 L419.8,410.2 L422.2,410.3 L424.6,410.8 L427.1,410.9 L429.4,411.8 L431.2,411.6 L433.1,411.6 L435.0,411.6 L436.8,411.2 L438.4,410.3 L440.3,409.9 L441.9,409.2 L443.7,408.6 L444.8,407.9 L445.9,407.4 L446.9,406.6 L448.1,406.1 L449.0,405.1 L449.7,404.0 L450.6,403.2 L451.7,402.5 L453.3,401.6 L454.5,400.2 L456.2,399.5 L457.8,398.5 L459.5,398.0 L461.1,397.1 L462.8,396.6 L464.4,395.7 L466.3,396.0 L468.2,396.5 L469.9,397.3 L471.8,397.8 L473.8,398.0 L475.4,399.1 L477.2,399.8 L479.0,400.6 L481.5,400.6 L484.0,400.5 L486.4,400.2 L488.9,399.8 L490.1,399.6 L491.4,399.5 L492.5,398.8 L493.7,398.6 L496.2,398.2 L498.6,397.7 L500.6,397.3 L502.7,397.2 L504.7,396.9 L506.7,396.3 L508.5,395.2 L510.3,394.3 L512.3,393.6 L514.2,392.8 L515.4,391.8 L516.6,390.7 L517.9,389.9 L519.3,389.2 L520.5,388.2 L521.7,387.2 L522.9,386.1 L524.0,385.0 L526.2,385.1 L528.4,385.4 L530.6,384.9 L532.8,385.0 L534.9,384.2 L537.2,384.2 L539.4,384.0 L541.6,384.0 L542.8,383.3 L543.9,382.4 L545.1,381.8 L546.0,380.8 L547.3,380.2 L548.6,379.6 L549.9,379.2 L551.3,379.1 L553.0,378.5 L554.7,378.3 L556.4,377.8 L558.1,377.5 L559.9,377.4 L561.6,377.2 L563.3,376.7 L565.0,376.2 L566.2,375.8 L567.3,375.3 L568.2,374.4 L569.2,373.7 L571.0,371.9 L572.8,370.3 L573.7,369.3 L574.4,368.2 L575.5,367.4 L576.2,366.3 L577.3,365.4 L578.1,364.4 L579.2,363.6 L580.0,362.5 L581.8,361.1 L583.3,359.5 L584.8,357.8 L586.4,356.1 L588.1,354.5 L589.5,352.8 L590.7,350.9 L591.7,348.8 L592.5,347.7 L593.6,346.9 L594.4,345.9 L595.3,344.8 L595.6,343.5 L595.9,342.2 L596.6,341.0 L597.2,339.8 L598.1,338.9 L599.2,338.2 L600.2,337.2 L601.2,336.4 L601.7,335.2 L602.4,334.0 L603.4,333.1 L604.4,332.2 L605.7,330.5 L607.0,328.7 L608.2,326.9 L609.7,325.3 L611.5,324.1 L613.4,323.0 L614.6,321.1 L616.1,319.5 L618.0,320.5 L619.8,321.8 L622.0,322.2 L623.9,323.4 L625.4,323.7 L626.9,324.1 L628.5,324.4 L629.9,324.9 L631.4,325.5 L632.9,326.0 L634.2,326.8 L635.7,327.3 L637.3,327.0 L638.9,326.6 L640.3,325.9 L641.9,325.4 L643.5,325.5 L645.2,325.4 L646.8,325.4 L648.4,325.4 L650.3,325.2 L652.1,324.4 L653.8,323.5 L655.4,322.5 L657.3,322.0 L659.2,321.5 L661.1,321.6 L663.0,321.5 L664.6,320.3 L666.4,319.3 L668.3,318.4 L669.8,317.1 L671.7,316.5 L673.3,315.5 L675.2,315.4 L677.0,314.8 L678.9,314.3 L680.9,314.4 L682.7,313.8 L684.5,313.2 L686.2,311.9 L687.8,310.6 L689.4,309.3 L691.0,307.9 L692.9,307.0 L694.5,305.6 L696.4,304.6 L698.1,303.4 L700.0,303.9 L702.0,304.3 L704.0,304.9 L705.9,305.4 L707.6,306.9 L709.3,308.5 L710.5,310.4 L711.8,312.2 L713.5,313.8 L714.8,315.6 L716.4,317.2 L717.7,319.1 L719.1,320.0 L720.4,321.0 L721.8,321.9 L723.0,323.0 L724.0,324.3 L724.9,325.7 L726.3,326.7 L727.4,327.9 L728.6,327.4 L729.8,327.2 L731.1,327.3 L732.4,327.5 L733.6,327.7 L734.8,328.1 L736.0,328.6 L737.2,328.8 L739.7,328.7 L742.1,328.4 L744.5,328.5 L747.0,328.8 L749.4,328.5 L751.8,328.6 L754.3,328.3 L756.7,328.8 L758.0,329.3 L759.0,330.0 L760.2,330.8 L761.4,331.2 L762.7,331.7 L764.0,331.8 L765.2,332.4 L766.5,332.7 L767.3,333.9 L767.9,335.2 L768.5,336.5 L769.1,337.8 L769.6,339.2 L770.0,340.6 L771.2,341.5 L772.3,342.5 L773.6,342.9 L774.7,343.7 L775.8,344.4 L777.0,345.0 L778.2,345.4 L779.6,345.7 L780.8,346.1 L782.1,346.4 L783.8,346.0 L785.6,345.5 L787.2,344.9 L788.9,344.3 L790.5,343.4 L792.2,342.9 L794.0,342.4 L795.8,342.5 L796.7,341.2 L797.7,340.1 L798.9,339.1 L800.0,338.1 L802.0,337.1 L804.0,336.2 L805.9,335.1 L807.6,333.7 L809.5,332.5 L811.4,331.5 L813.4,330.6 L815.2,329.2 L816.3,328.3 L817.3,327.4 L818.2,326.3 L819.0,325.2 L820.2,324.4 L821.3,323.7 L822.6,323.0 L823.8,322.4 L825.0,321.8 L826.1,320.9 L827.2,320.1 L828.4,319.5 L829.7,318.9 L830.7,317.9 L831.9,317.3 L833.0,316.5 L834.7,315.0 L836.7,313.9 L838.3,312.3 L840.1,310.9 L841.5,309.1 L843.3,307.7 L844.4,305.6 L845.7,303.8 L846.9,302.0 L847.7,300.0 L849.1,298.4 L850.0,296.4 L850.6,294.4 L851.6,292.5 L852.7,290.7 L853.3,288.6 L853.6,286.3 L853.9,284.0 L854.9,281.9 L856.3,279.9 L856.6,277.7 L856.8,275.4 L856.8,273.1 L857.1,270.8 L856.7,269.5 L856.3,268.3 L856.1,267.0 L855.5,265.8 L855.1,264.5 L854.7,263.2 L854.6,261.9 L854.6,260.6 L853.6,259.6 L852.3,258.8 L850.9,258.4 L849.5,258.1 L848.4,256.7 L847.0,255.6 L849.3,255.5 L851.5,255.0 L853.7,254.8 L855.9,254.3 L856.6,255.4 L857.3,256.4 L858.1,257.5 L858.7,258.6 L859.3,259.7 L860.0,260.8 L860.3,262.0 L860.9,263.2 L861.3,264.4 L861.7,265.7 L861.9,267.0 L862.3,268.2 L862.7,269.5 L863.1,270.7 L863.2,272.0 L863.5,273.3 L862.6,275.1 L861.8,276.9 L861.4,278.9 L860.6,280.7 L860.3,282.7 L859.7,284.6 L859.9,286.6 L859.7,288.6 L860.6,289.9 L861.4,291.2 L862.4,292.5 L863.5,293.6 L865.3,294.3 L867.2,294.7 L869.1,294.1 L871.1,294.2 L873.0,294.4 L874.9,294.8 L876.8,294.8 L878.7,294.9 L880.9,294.4 L883.2,294.3 L885.5,294.1 L887.8,293.9 L889.8,292.8 L892.1,292.5 L894.3,291.7 L896.5,291.1 L898.2,291.0 L899.9,291.1 L901.5,290.8 L903.1,290.2 L904.8,289.9 L906.4,289.2 L907.8,288.4 L909.3,287.5 L910.9,287.2 L912.6,286.9 L914.2,286.3 L915.5,285.1 L916.9,284.3 L918.5,283.6 L920.2,283.8 L921.9,283.5 L923.3,283.4 L924.5,282.9 L925.9,282.8 L927.2,282.3 L928.5,282.0 L929.7,281.4 L930.9,280.9 L932.2,280.4 L933.3,279.5 L934.6,279.1 L935.9,278.7 L937.1,278.2 L938.4,277.8 L939.7,277.3 L940.8,276.5 L942.0,275.9 L943.7,275.0 L945.3,273.9 L947.0,273.0 L948.8,272.4 L950.4,271.3 L952.0,270.2 L953.8,269.5 L955.7,269.1 L957.7,268.3 L959.5,267.2 L961.3,266.1 L963.0,264.8 L964.8,263.7 L966.4,262.3 L967.8,260.7 L969.4,259.3 L971.5,258.3 L973.4,256.8 L975.0,255.1 L977.0,253.8 L978.6,252.1 L980.0,250.2 L981.7,248.6 L983.0,246.6 L984.4,245.9 L985.6,244.8 L986.9,243.9 L988.3,243.2 L989.4,242.1 L990.4,240.9 L991.6,239.9 L992.8,238.8 L994.5,238.5 L996.2,238.1 L997.9,237.5 L999.5,236.8 L1001.2,237.5 L1003.0,237.1 L1004.7,236.9 L1006.5,236.8 L1008.1,238.2 L1010.0,239.0 L1011.2,240.7 L1012.8,242.1 L1014.3,243.5 L1016.3,244.3 L1018.2,245.1 L1020.2,245.6 L1022.1,246.6 L1024.0,247.7 L1025.9,248.8 L1027.8,249.9 L1029.6,251.1 L1031.7,251.8 L1033.7,252.8 L1035.8,253.4 L1037.9,253.7 L1039.9,253.9 L1041.9,253.3 L1044.0,252.8 L1045.9,253.4 L1048.0,253.6 L1050.0,254.0 L1052.0,254.4 L1051.7,256.1 L1051.4,257.8 L1052.0,259.5 L1052.0,261.2 L1050.0,261.5 L1047.9,261.6 L1045.9,262.1 L1043.8,262.3 L1041.9,263.0 L1039.9,263.8 L1037.9,263.9 L1035.8,264.2 L1034.3,264.8 L1033.0,265.8 L1031.8,266.9 L1030.4,267.6 L1028.8,268.1 L1027.2,268.2 L1025.7,268.8 L1024.1,269.1 L1023.2,270.2 L1022.6,271.6 L1022.7,273.1 L1021.8,274.4 L1021.1,275.6 L1020.1,276.6 L1019.3,277.8 L1018.2,278.8 L1017.8,280.6 L1017.6,282.4 L1017.6,284.2 L1017.3,286.0 L1017.1,287.8 L1016.4,289.5 L1015.3,291.0 L1014.3,292.5 L1013.6,294.3 L1013.0,296.1 L1012.9,298.1 L1013.0,300.0 L1014.6,299.8 L1016.3,299.9 L1017.9,299.5 L1019.5,299.5 L1020.2,301.5 L1019.5,302.9 L1018.6,304.1 L1017.2,305.0 L1016.2,306.2 L1015.3,307.6 L1014.2,308.8 L1013.2,310.1 L1012.3,311.5 L1011.8,313.1 L1011.1,314.6 L1010.3,316.0 L1009.8,317.6 L1008.9,319.1 L1008.7,320.7 L1008.2,322.3 L1007.4,323.7 L1007.1,325.4 L1006.4,326.9 L1005.2,328.1 L1004.5,329.6 L1003.4,330.7 L1002.5,331.9 L1001.4,333.1 L1000.5,334.4 L1000.0,335.9 L999.9,337.5 L999.1,338.8 L998.3,340.2 L997.5,341.5 L996.6,342.7 L995.9,344.1 L994.9,345.3 L994.2,346.7 L993.5,348.1 L993.4,349.6 L992.8,351.1 L992.1,352.3 L991.1,353.3 L990.3,354.4 L989.4,355.4 L988.6,356.6 L987.6,357.6 L987.2,359.0 L986.9,360.4 L986.3,361.6 L985.3,362.7 L985.2,364.1 L984.7,365.4 L984.4,366.7 L984.0,368.0 L983.5,369.3 L983.0,370.6 L982.3,371.7 L981.6,372.9 L980.8,373.9 L979.9,374.9 L978.9,375.8 L978.1,376.8 L977.5,378.0 L977.0,379.3 L976.4,380.5 L976.1,381.8 L975.3,382.9 L974.8,384.2 L974.0,385.3 L973.4,386.5 L972.3,387.3 L971.3,388.2 L970.2,389.5 L969.5,391.0 L969.0,392.5 L968.5,394.1 L967.3,395.2 L966.4,396.6 L965.1,397.6 L963.9,398.8 L963.1,400.1 L961.9,401.3 L961.0,402.7 L960.2,404.1 L959.1,405.3 L957.8,406.4 L956.4,407.2 L954.9,407.9 L954.2,410.1 L953.3,412.3 L951.8,414.1 L949.8,415.5 L948.4,417.3 L946.7,418.9 L945.8,421.1 L944.7,423.1 L943.5,424.5 L942.5,426.0 L941.2,427.3 L940.1,428.8 L939.6,430.5 L938.7,432.1 L937.7,433.7 L936.7,435.2 L935.2,436.3 L934.1,437.8 L932.6,438.9 L931.2,440.1 L929.7,441.2 L929.0,442.9 L927.8,444.4 L927.0,446.0 L925.8,447.9 L924.9,450.0 L923.7,451.9 L922.4,453.7 L920.7,455.3 L918.9,456.6 L917.4,458.3 L916.0,460.0 L914.8,462.0 L914.2,464.3 L913.1,466.3 L911.8,468.2 L910.9,470.3 L909.8,472.3 L908.8,474.4 L907.7,476.4 L906.5,478.3 L904.9,479.9 L903.2,481.2 L901.4,482.6 L899.9,484.2 L898.6,486.0 L897.6,488.0 L896.8,490.1 L895.6,492.1 L894.4,494.2 L893.2,496.2 L892.1,498.4 L891.1,500.5 L890.1,502.7 L888.6,504.6 L887.2,506.5 L886.5,508.5 L885.5,510.4 L885.7,512.6 L885.9,514.7 L883.9,515.8 L881.7,516.7 L879.6,517.5 L877.6,518.8 L877.6,520.4 L877.4,522.0 L876.7,523.4 L875.9,524.8 L875.2,526.2 L874.3,527.5 L873.2,528.6 L872.2,529.8 L870.9,530.8 L869.6,531.6 L868.6,532.9 L867.8,534.3 L866.8,535.5 L865.8,536.8 L864.9,538.0 L864.0,539.3 L863.3,540.3 L862.6,541.4 L861.6,542.2 L860.7,543.1 L860.0,544.1 L859.5,545.3 L859.0,546.4 L858.5,547.5 L857.0,549.6 L855.8,551.7 L855.2,552.8 L854.8,554.0 L853.7,554.8 L853.0,555.8 L851.4,557.1 L850.1,558.6 L848.7,560.1 L848.0,562.0 L847.6,564.0 L846.8,565.9 L845.9,567.7 L844.8,569.4 L843.9,571.0 L843.2,572.7 L842.2,574.3 L841.3,575.9 L840.5,577.7 L840.1,579.5 L839.6,581.3 L839.3,583.1 L840.7,584.5 L841.4,586.3 L842.3,588.0 L843.6,589.5 L844.1,591.4 L845.1,593.1 L845.7,594.9 L846.2,596.8 L845.9,598.9 L845.5,601.0 L845.6,603.1 L845.1,605.2 L844.5,607.3 L843.4,609.2 L842.9,611.2 L842.1,613.2 L841.6,614.4 L841.5,615.7 L841.0,616.9 L840.5,618.1 L840.1,619.3 L839.6,620.5 L839.4,621.7 L839.1,623.0 L839.1,624.3 L838.8,625.6 L838.4,626.8 L837.7,627.9 L837.3,629.1 L836.5,630.2 L835.7,631.2 L835.2,632.4 L834.3,634.6 L833.3,636.7 L832.3,638.9 L830.9,640.9 L830.1,643.1 L828.8,645.2 L827.0,646.8 L825.7,648.8 L825.6,651.2 L825.2,653.6 L824.4,655.9 L824.0,658.3 L824.5,660.7 L824.9,663.1 L824.6,665.5 L824.3,667.9 L824.8,669.2 L825.2,670.6 L825.4,671.9 L825.5,673.3 L825.4,674.8 L825.8,676.1 L825.6,677.5 L825.7,678.9 L824.9,680.2 L824.2,681.6 L823.5,682.9 L823.0,684.4 L822.5,685.9 L821.5,687.0 L821.1,688.5 L820.2,689.8 L818.5,691.3 L816.6,692.4 L814.8,693.7 L812.8,694.6 L811.2,696.1 L809.5,697.6 L808.1,699.3 L806.5,700.8 L804.8,701.3 L803.3,702.1 L802.0,703.3 L800.8,704.6 L799.6,705.8 L798.1,706.6 L796.9,707.9 L795.6,709.0 L795.2,710.5 L794.4,711.8 L793.9,713.3 L793.1,714.6 L792.0,715.8 L791.1,717.0 L790.5,718.5 L790.1,720.0 L789.0,722.1 L787.3,723.9 L786.1,725.9 L784.8,727.9 L783.9,729.8 L783.3,731.8 L782.9,733.8 L782.2,735.8 L782.2,738.1 L782.3,740.4 L782.4,742.7 L782.4,745.0 L782.5,747.4 L782.2,749.7 L782.4,752.1 L783.3,754.2 L783.4,756.6 L783.0,758.9 L782.2,761.1 L781.7,763.4 L781.8,765.8 L782.4,768.0 L782.2,770.4 L782.2,772.7 L782.5,774.7 L782.6,776.6 L782.9,778.6 L782.7,780.6 L783.0,782.6 L783.4,784.5 L783.6,786.5 L783.5,788.5 L783.2,790.0 L782.8,791.5 L783.0,793.0 L783.3,794.4 L783.3,795.9 L783.0,797.4 L782.9,798.9 L782.7,800.4 L782.7,801.9 L782.9,803.3 L783.5,804.7 L783.7,806.2 L783.4,807.7 L783.3,809.2 L783.5,810.7 L783.5,812.2 L784.0,814.5 L784.9,816.7 L785.1,819.1 L785.9,821.4 L786.3,823.7 L786.4,826.1 L787.1,828.3 L787.4,830.7 L787.9,832.3 L788.4,833.8 L788.8,835.4 L789.5,836.9 L790.5,838.1 L791.4,839.5 L792.2,841.0 L792.7,842.5 L794.7,842.9 L796.7,843.2 L798.6,843.6 L800.6,844.0 L802.6,844.3 L804.5,844.5 L806.6,844.5 L808.5,845.2 L809.6,846.6 L810.9,847.8 L812.3,848.8 L813.6,850.0 L814.8,851.3 L816.1,852.4 L817.4,853.6 L819.0,854.4 L820.5,854.8 L822.0,855.3 L823.6,855.5 L825.0,856.1 L826.4,856.9 L827.9,857.3 L829.5,857.6 L830.9,858.3 L832.9,857.0 L834.9,855.7 L836.9,854.5 L838.8,853.1 L839.5,854.5 L840.4,855.8 L841.6,856.9 L842.6,858.1 L843.6,859.2 L844.4,860.6 L844.9,862.1 L845.4,863.6 L847.5,864.9 L849.2,866.7 L850.6,868.8 L852.6,870.3 L854.0,872.3 L855.5,874.3 L856.9,876.3 L858.6,878.1 L860.3,879.7 L861.9,881.4 L863.5,883.1 L865.2,884.7 L864.1,886.6 L863.2,888.6 L862.5,890.8 L861.2,892.6 L859.9,890.6 L858.3,888.8 L857.1,886.8 L855.9,884.7 L854.6,884.4 L853.2,884.4 L851.9,884.0 L850.7,883.4 L850.1,884.7 L849.4,886.0 L849.0,887.5 L848.0,888.6 L848.3,890.0 L848.3,891.3 L848.9,892.6 L849.5,893.8 L849.2,895.1 L849.3,896.5 L849.4,897.8 L849.4,899.2 L847.5,897.7 L845.4,896.6 L845.1,895.0 L845.1,893.3 L845.1,891.6 L845.4,889.9 L844.9,888.3 L844.8,886.7 L844.5,885.0 L844.1,883.4 L842.5,884.0 L840.8,884.1 L839.1,884.2 L837.5,884.7 L837.0,886.1 L835.9,887.0 L835.3,888.3 L834.6,889.6 L833.8,890.7 L832.8,891.8 L831.8,892.8 L830.9,893.9 L830.9,895.3 L830.7,896.6 L830.0,897.8 L829.9,899.2 L830.0,900.5 L829.6,901.8 L829.6,903.2 L829.6,904.5 L829.9,906.8 L830.1,909.1 L830.3,911.4 L830.4,913.8 L830.5,916.1 L830.7,918.5 L831.5,920.7 L832.2,922.9 L833.7,924.6 L834.5,926.7 L835.3,928.8 L835.7,931.0 L836.5,933.1 L837.7,935.0 L839.0,936.8 L840.1,938.7 L842.0,939.3 L844.0,939.8 L846.0,939.8 L848.0,940.0 L849.4,938.8 L850.8,937.6 L852.0,936.1 L853.3,934.8 L854.5,936.5 L855.8,938.2 L857.1,939.8 L858.6,941.3 L856.8,942.6 L855.0,943.6 L852.8,943.6 L850.7,944.0 L850.3,946.0 L850.4,948.0 L850.2,950.0 L849.4,951.9 L850.7,953.2 L852.3,954.0 L853.1,955.6 L854.2,957.0 L855.3,958.4 L856.4,959.7 L857.7,960.9 L858.6,962.4 L859.9,962.9 L861.2,963.6 L862.4,964.3 L863.6,964.9 L865.0,965.3 L866.4,965.5 L867.8,965.9 L869.1,966.4 L870.8,966.7 L872.4,966.7 L874.1,966.5 L875.8,966.2 L877.2,965.3 L878.9,965.1 L880.6,965.1 L882.3,965.0 L883.2,967.0 L884.0,969.1 L885.0,971.1 L886.2,973.0 L886.7,975.2 L886.0,977.3 L885.7,979.4 L885.2,981.5 L885.7,983.6 L886.1,985.7 L886.1,987.9 L886.2,990.0 L360.9,990.0 L359.5,988.5 L358.0,987.1 L356.4,985.8 L354.5,985.1 L352.6,984.4 L350.8,983.3 L349.3,981.9 L347.7,980.7 L346.5,980.4 L345.2,980.0 L344.0,979.7 L342.7,979.5 L341.5,979.1 L340.3,978.6 L339.1,978.4 L337.9,977.9 L336.7,977.4 L335.5,976.9 L334.6,975.9 L333.4,975.3 L332.2,974.9 L331.0,974.6 L329.8,974.0 L328.6,973.6 L327.3,973.3 L326.4,972.4 L325.2,971.9 L324.0,971.5 L322.8,971.2 L321.5,971.1 L320.3,970.7 L319.1,970.5 L317.8,970.4 L316.5,970.3 L315.6,969.4 L314.3,968.9 L313.1,968.8 L311.9,968.4 L310.7,968.1 L309.5,967.6 L307.1,967.1 L304.7,966.7 L302.3,966.4 L299.8,966.4 L297.5,965.8 L295.3,964.6 L292.8,964.7 L290.4,964.0 L288.6,963.6 L286.8,963.5 L285.0,963.7 L283.2,963.8 L281.4,963.4 L279.6,963.9 L277.8,963.4 L276.0,963.7 L274.2,963.8 L272.4,964.2 L270.7,964.5 L268.9,964.6 L267.1,964.6 L265.3,965.1 L263.5,965.1 L261.7,965.2 L259.3,965.3 L256.9,965.2 L254.5,965.0 L252.1,964.6 L249.8,964.3 L247.4,964.6 L245.0,964.8 L242.6,965.2 L241.3,965.4 L240.1,965.7 L238.8,966.0 L237.5,966.3 L236.5,967.1 L235.4,967.8 L234.1,968.1 L233.0,968.8 L231.8,969.9 L230.8,971.1 L229.3,971.8 L228.0,972.8 L227.1,974.0 L225.9,975.1 L224.9,976.4 L223.4,977.1 L222.9,975.6 L222.2,974.2 L221.4,972.7 L221.0,971.2 L219.5,971.2 L218.0,971.6 L216.5,971.5 L215.0,971.3 L213.5,971.5 L212.0,971.6 L210.6,972.0 L209.1,972.4 L207.0,971.8 L204.8,971.5 L202.8,970.7 L200.7,970.2 L198.6,969.5 L196.5,969.2 L194.5,968.2 L192.4,967.6 L191.4,966.8 L190.3,966.1 L189.5,965.1 L188.7,964.1 L187.8,963.2 L187.0,962.2 L186.1,961.3 L185.2,960.4 L183.8,959.1 L182.5,957.6 L181.7,955.8 L180.1,954.7 L179.3,952.9 L178.2,951.3 L177.1,949.8 L175.6,948.5 L174.4,948.0 L173.1,947.6 L171.9,947.0 L170.8,946.2 L169.6,945.5 L168.6,944.6 L167.4,944.1 L166.1,943.7 L163.7,943.3 L161.3,943.1 L158.9,942.9 L156.5,942.8 L154.2,942.2 L151.7,942.2 L149.3,942.0 L146.9,942.5 L145.5,941.8 L144.0,941.4 L142.6,940.6 L141.2,939.9 L139.6,939.6 L138.1,939.4 L136.5,939.2 L135.0,938.9 L133.4,937.8 L131.7,936.8 L130.2,935.7 L128.9,934.2 L127.6,932.8 L125.9,931.9 L124.3,930.7 L123.0,929.3 L121.2,928.4 L119.5,927.3 L118.1,925.8 L116.3,924.8 L114.4,924.0 L112.5,923.7 L110.7,922.7 L108.7,922.2 L106.9,921.3 L105.2,920.2 L103.2,919.7 L101.3,919.1 L99.5,918.2 L97.7,917.1 L95.8,916.4 L94.3,915.0 L93.0,914.2 L91.8,913.4 L90.7,912.4 L89.6,911.4 L88.6,909.5 L88.5,907.4 L87.9,905.4 L86.9,903.6 L86.3,901.5 L85.5,899.6 L84.7,897.7 L83.6,895.9 L80.0,895.9 L80.0,422.0Z M1175.0,150.8 L1173.3,150.7 L1171.7,150.8 L1171.3,152.0 L1170.9,153.2 L1170.5,154.4 L1170.0,155.5 L1169.3,156.5 L1168.4,157.4 L1167.8,158.5 L1167.2,159.6 L1166.0,161.8 L1164.4,163.7 L1163.1,165.8 L1161.9,168.0 L1161.8,169.3 L1161.5,170.5 L1161.7,171.8 L1161.7,173.1 L1161.4,174.3 L1160.7,175.4 L1160.5,176.7 L1160.1,177.9 L1159.7,179.1 L1159.5,180.4 L1159.0,181.5 L1158.4,182.7 L1158.2,183.9 L1157.7,185.1 L1157.5,186.3 L1157.0,187.5 L1156.4,188.8 L1156.0,190.1 L1155.9,191.5 L1156.2,192.9 L1155.5,194.0 L1155.1,195.4 L1154.7,196.6 L1154.3,197.9 L1153.9,199.3 L1153.9,200.6 L1153.8,202.0 L1153.7,203.3 L1153.3,204.6 L1153.2,206.0 L1152.7,207.3 L1152.4,208.6 L1152.5,209.9 L1152.7,211.3 L1152.4,212.6 L1152.1,214.0 L1151.9,215.3 L1151.6,216.6 L1151.2,217.9 L1151.0,219.3 L1151.0,220.6 L1150.8,222.0 L1150.9,223.3 L1150.8,224.7 L1150.8,226.0 L1150.4,227.3 L1150.3,228.7 L1150.0,230.0 L1148.6,231.3 L1147.0,232.2 L1145.2,232.9 L1143.5,233.6 L1141.7,234.2 L1139.9,234.8 L1138.5,236.2 L1137.2,237.6 L1135.7,238.8 L1134.6,240.3 L1133.1,241.4 L1131.5,242.4 L1130.0,243.4 L1128.4,244.4 L1126.7,245.3 L1125.6,246.9 L1124.1,248.1 L1122.5,249.0 L1120.9,250.1 L1119.4,251.2 L1117.5,251.5 L1115.7,251.9 L1113.9,252.5 L1112.2,253.5 L1110.7,254.6 L1109.2,255.6 L1107.6,256.6 L1106.0,257.6 L1104.4,258.6 L1102.6,259.3 L1101.8,261.1 L1100.0,262.0 L1098.9,262.8 L1097.6,263.1 L1096.5,263.8 L1095.3,264.2 L1093.9,264.2 L1092.6,264.1 L1091.4,264.6 L1090.1,264.7 L1088.8,265.0 L1087.5,265.2 L1086.3,265.6 L1085.0,265.7 L1083.7,266.1 L1082.5,266.3 L1081.2,266.5 L1079.9,266.7 L1078.8,267.4 L1077.4,267.6 L1076.1,267.5 L1074.8,267.5 L1073.7,268.2 L1072.6,269.0 L1071.3,269.2 L1069.9,269.2 L1068.7,269.6 L1067.4,270.0 L1066.3,270.6 L1065.1,271.3 L1063.8,271.3 L1062.5,271.4 L1061.2,271.6 L1060.0,272.0 L1058.1,273.2 L1055.9,273.8 L1053.8,274.6 L1052.0,276.0 L1050.4,277.3 L1048.7,278.3 L1048.4,279.7 L1048.1,281.0 L1047.6,282.3 L1047.3,283.7 L1047.6,285.2 L1047.5,286.8 L1047.9,288.3 L1048.3,289.8 L1047.8,291.3 L1047.9,292.9 L1047.7,294.5 L1047.9,296.0 L1048.3,297.5 L1048.1,299.1 L1048.1,300.6 L1048.2,302.2 L1047.9,303.7 L1047.9,305.3 L1047.5,306.8 L1047.3,308.3 L1047.9,310.4 L1048.6,312.4 L1049.6,314.4 L1050.0,316.5 L1051.4,318.4 L1053.0,320.0 L1052.6,322.0 L1052.4,324.1 L1053.1,326.0 L1053.5,328.1 L1053.6,330.1 L1053.4,332.2 L1052.8,334.1 L1052.0,336.0 L1051.7,338.0 L1051.3,340.0 L1051.7,342.0 L1051.4,344.1 L1051.6,346.1 L1051.7,348.1 L1052.2,350.1 L1053.0,352.0 L1051.4,353.2 L1050.1,354.7 L1048.7,356.1 L1047.3,357.5 L1047.1,358.9 L1047.4,360.3 L1047.4,361.7 L1047.6,363.1 L1047.2,364.4 L1046.7,365.7 L1046.2,367.0 L1046.0,368.4 L1047.3,370.3 L1048.0,372.5 L1049.3,374.4 L1050.0,376.6 L1051.8,378.1 L1053.0,380.0 L1052.9,382.0 L1052.5,384.0 L1052.2,386.0 L1051.9,388.0 L1052.2,390.0 L1052.0,392.1 L1052.4,394.1 L1053.0,396.0 L1051.9,397.3 L1050.4,398.2 L1049.6,399.7 L1048.7,401.2 L1048.3,403.2 L1047.7,405.2 L1047.3,407.3 L1047.3,409.4 L1047.9,410.8 L1048.3,412.3 L1049.0,413.7 L1050.0,414.9 L1050.8,416.1 L1051.7,417.3 L1052.3,418.7 L1053.0,420.0 L1054.7,421.3 L1056.1,422.8 L1057.9,424.0 L1059.2,425.7 L1060.4,427.6 L1061.8,429.2 L1063.9,430.0 L1065.8,430.9 L1067.6,432.1 L1069.2,433.4 L1071.2,434.2 L1072.9,435.5 L1074.8,436.5 L1076.3,438.0 L1078.0,439.3 L1080.0,440.0 L1081.3,440.5 L1082.6,440.9 L1083.9,441.2 L1085.3,441.3 L1086.4,442.1 L1087.6,442.9 L1088.6,443.8 L1089.7,444.6 L1090.9,445.2 L1092.1,445.9 L1093.4,446.1 L1094.7,446.4 L1095.8,447.2 L1097.1,447.7 L1098.5,447.9 L1099.9,447.9 L1101.2,448.1 L1102.3,448.9 L1103.6,449.3 L1104.8,449.9 L1106.0,450.6 L1107.2,451.1 L1108.5,451.5 L1109.7,452.0 L1111.0,452.4 L1112.2,452.9 L1113.5,453.4 L1114.7,454.0 L1116.0,454.3 L1117.4,454.4 L1118.7,454.8 L1120.0,455.0 L1122.3,455.7 L1124.6,455.8 L1126.9,456.3 L1129.2,457.0 L1131.5,457.6 L1133.6,458.7 L1135.7,459.8 L1137.7,461.0 L1139.7,462.3 L1141.9,463.5 L1144.2,464.0 L1146.6,464.1 L1148.7,465.3 L1150.6,466.6 L1152.7,467.7 L1154.6,469.1 L1156.7,468.5 L1158.9,468.2 L1161.0,467.5 L1163.2,467.3 L1165.3,466.5 L1167.5,466.7 L1169.5,465.9 L1171.7,465.5 L1173.3,465.6 L1175.0,465.5Z M1140.0,33.0 L1140.6,35.0 L1141.5,36.9 L1141.4,39.0 L1142.4,40.9 L1143.3,42.1 L1144.3,43.1 L1145.3,44.3 L1146.5,45.2 L1147.9,45.8 L1148.8,47.0 L1150.0,47.9 L1151.0,49.0 L1152.1,50.4 L1153.5,51.6 L1155.0,52.5 L1156.3,53.6 L1157.8,54.7 L1159.1,55.8 L1160.8,56.6 L1161.9,58.0 L1163.6,58.9 L1165.5,59.4 L1167.2,60.4 L1168.7,61.6 L1170.2,62.8 L1171.7,64.0 L1173.4,64.9 L1175.0,66.0 L1175.0,33.0Z M426.1,80.0 L428.6,80.2 L431.0,80.5 L432.4,82.1 L433.5,84.0 L433.3,85.5 L432.9,87.0 L433.2,88.5 L433.0,90.0 L432.1,92.3 L431.0,94.5 L429.7,94.6 L428.4,94.6 L427.1,94.9 L426.0,95.6 L423.6,95.3 L421.5,94.0 L420.5,92.9 L419.8,91.7 L419.2,90.4 L418.8,89.0 L419.0,87.7 L419.4,86.5 L419.5,85.3 L419.5,84.0 L420.9,82.6 L422.0,81.0 L424.0,80.5Z M519.2,59.1 L520.8,59.8 L522.5,60.3 L524.2,60.5 L526.0,60.5 L528.1,60.8 L529.9,62.0 L531.9,62.3 L533.9,62.9 L535.6,64.1 L537.0,65.5 L537.1,67.3 L536.9,69.1 L537.1,70.9 L537.2,72.8 L537.7,74.5 L537.6,76.4 L537.4,78.2 L537.0,80.0 L535.2,80.2 L533.5,80.3 L531.7,80.1 L530.0,79.5 L528.7,79.2 L527.4,79.0 L526.1,78.7 L524.9,78.2 L524.1,77.2 L523.2,76.2 L522.1,75.7 L521.0,75.0 L519.5,73.7 L518.6,71.9 L517.9,70.7 L517.1,69.6 L516.4,68.4 L516.2,67.0 L516.1,65.0 L516.0,63.0 L516.7,61.9 L517.4,60.9 L518.3,60.0Z M693.2,104.0 L693.6,105.3 L693.3,106.7 L693.3,108.0 L693.2,109.3 L692.8,110.5 L692.5,111.8 L692.3,113.1 L692.0,114.4 L691.8,115.6 L691.6,116.9 L691.4,118.2 L691.2,119.5 L691.2,121.0 L691.2,122.5 L690.7,124.0 L690.3,125.4 L691.1,127.6 L692.3,129.6 L693.6,131.5 L695.2,133.2 L696.6,134.3 L698.1,135.1 L699.6,136.1 L701.0,137.1 L702.8,137.7 L704.5,138.4 L706.2,139.1 L707.9,140.0 L708.9,141.3 L709.6,142.8 L709.9,144.5 L710.8,145.9 L711.9,147.8 L712.7,149.8 L714.1,150.4 L715.5,151.0 L717.1,151.0 L718.6,151.3 L719.8,149.9 L720.2,148.2 L720.9,146.6 L721.5,144.9 L721.2,142.9 L720.8,140.9 L720.6,138.9 L719.6,137.1 L719.4,135.6 L719.3,134.1 L719.0,132.7 L718.6,131.2 L720.0,129.7 L721.5,128.3 L723.5,128.2 L725.4,127.9 L727.4,127.6 L729.3,127.3 L730.2,125.4 L730.3,123.4 L728.6,121.9 L726.4,121.5 L724.5,120.5 L722.5,119.5 L721.7,117.6 L721.5,115.6 L722.0,114.0 L722.2,112.4 L722.6,110.9 L723.0,109.3 L723.1,108.0 L723.2,106.7 L723.3,105.3 L723.0,104.0 L721.1,103.8 L719.3,103.3 L717.4,103.6 L715.5,103.9 L713.8,104.8 L711.9,105.2 L710.0,105.0 L708.1,104.9 L706.2,104.7 L704.4,104.4 L702.6,103.7 L700.7,103.4 L698.8,103.6 L697.0,104.4 L695.1,104.5Z M718.6,156.6 L719.8,157.1 L721.2,157.3 L722.3,158.0 L723.5,158.6 L723.2,160.1 L722.8,161.5 L722.6,163.0 L722.5,164.5 L723.9,165.6 L725.2,166.9 L727.0,167.3 L728.4,168.4 L729.8,169.3 L730.9,170.6 L732.6,170.8 L734.2,171.3 L735.5,173.2 L736.9,174.9 L738.6,176.4 L740.1,178.1 L740.3,180.1 L740.5,182.1 L741.0,184.1 L741.5,186.0 L742.1,187.5 L742.9,188.8 L743.4,190.3 L744.0,191.8 L742.5,192.7 L740.9,193.5 L739.5,194.6 L738.1,195.7 L736.5,195.1 L734.7,195.1 L733.0,194.9 L731.3,194.7 L730.4,193.6 L729.5,192.5 L728.4,191.7 L727.2,190.9 L726.0,190.2 L724.8,189.4 L723.7,188.6 L722.5,187.9 L721.0,186.6 L719.3,185.7 L717.5,184.8 L715.7,184.0 L714.7,182.9 L713.7,181.9 L713.4,180.5 L712.5,179.3 L711.9,178.0 L711.3,176.6 L710.5,175.5 L709.8,174.2 L709.9,172.2 L710.4,170.3 L710.3,168.3 L710.8,166.4 L712.3,165.7 L713.7,165.0 L715.1,164.1 L716.6,163.5 L717.0,162.3 L717.1,161.0 L717.1,159.8 L717.6,158.6Z M507.5,62.5 L510.5,62.5 L509.0,65.0Z"/>
<polygon points="83.5,422.0 85.0,422.4 86.5,423.0 88.1,423.3 89.6,423.8 92.0,423.5 94.4,424.1 96.6,425.0 99.0,425.4 100.6,425.7 102.2,426.0 103.8,426.6 105.4,426.8 107.0,427.2 108.7,427.2 110.3,427.6 111.9,427.8 114.3,428.2 116.7,428.6 114.6,429.6 112.7,431.0 113.4,432.6 114.3,434.2 115.6,434.3 116.9,434.6 118.3,434.8 119.6,434.8 120.9,435.1 122.2,435.3 123.5,435.9 124.6,436.6 127.0,437.2 129.5,437.6 131.8,438.4 134.2,439.0 135.8,439.0 137.4,439.0 139.0,438.9 140.6,438.6 142.2,438.2 143.8,438.2 145.5,438.2 146.9,437.4 148.5,437.4 150.2,437.3 151.8,437.0 153.4,436.8 154.9,436.1 156.5,435.6 158.1,435.3 159.7,435.0 162.0,434.0 164.4,433.6 166.8,433.1 169.2,432.6 170.4,432.3 171.7,432.0 172.9,431.6 174.2,431.5 175.3,430.8 176.5,430.4 177.5,429.7 178.8,429.4 180.0,429.0 181.4,428.9 182.6,428.5 183.9,428.4 185.1,427.9 186.4,427.5 187.5,426.8 188.5,426.1 189.7,425.5 190.9,425.0 192.0,424.4 193.2,423.9 194.4,423.4 195.5,422.8 196.8,422.5 197.9,421.8 199.8,420.5 201.8,419.3 204.1,419.0 206.3,418.4 208.2,417.1 210.2,416.1 212.1,414.8 213.9,413.5 215.6,412.1 217.6,411.1 219.5,410.0 221.2,408.5 222.9,407.1 224.6,405.7 226.2,404.2 228.2,403.1 229.5,402.5 230.9,402.1 232.3,401.6 233.7,401.5 235.1,401.2 236.5,400.9 238.0,400.9 239.4,400.7 241.8,400.2 244.2,400.7 246.5,401.3 248.9,401.5 250.5,401.2 252.1,400.6 253.7,400.2 255.3,399.9 256.4,399.2 257.6,398.6 258.7,397.9 259.8,397.3 261.1,397.0 262.4,396.8 263.6,396.3 264.9,395.9 267.0,396.4 269.0,397.2 271.1,397.6 273.2,398.2 274.8,399.9 276.8,401.0 278.5,402.6 279.6,404.6 281.5,405.8 283.4,407.1 285.5,408.0 287.5,409.1 289.9,408.9 292.4,408.9 294.6,407.9 297.1,407.8 298.3,408.2 299.4,408.8 300.7,409.1 301.9,409.4 303.1,409.9 304.2,410.6 305.4,410.8 306.7,411.0 308.7,410.8 310.7,410.8 312.6,410.0 314.6,410.2 315.9,409.3 317.2,408.5 318.5,407.6 319.9,406.7 320.9,405.5 322.1,404.4 323.5,403.5 325.0,403.0 325.7,404.1 326.6,405.1 327.8,405.5 329.1,405.9 330.3,406.3 331.3,407.0 332.5,407.6 333.7,407.8 335.7,407.8 337.7,408.0 339.7,407.8 341.7,407.8 343.2,407.9 344.7,408.2 346.2,408.3 347.6,408.9 349.0,409.6 350.0,410.7 351.5,411.3 352.9,411.8 354.5,412.2 356.0,412.7 357.6,413.3 359.2,413.5 360.7,414.2 362.3,414.7 363.9,414.9 365.6,415.0 367.6,415.0 369.6,415.4 371.6,415.3 373.6,414.9 375.6,414.9 377.6,414.3 379.6,414.4 381.6,414.2 383.6,414.0 385.6,414.1 387.6,414.1 389.6,414.4 391.6,414.7 393.5,415.2 395.5,415.5 397.5,415.8 399.1,415.7 400.7,415.3 402.3,415.0 403.9,414.6 405.4,414.3 407.0,414.0 408.7,413.9 410.2,413.4 411.5,413.2 412.7,413.1 413.9,412.5 415.1,412.0 416.3,411.6 417.5,411.3 418.7,410.7 419.8,410.2 422.2,410.3 424.6,410.8 427.1,410.9 429.4,411.8 431.2,411.6 433.1,411.6 435.0,411.6 436.8,411.2 438.4,410.3 440.3,409.9 441.9,409.2 443.7,408.6 444.8,407.9 445.9,407.4 446.9,406.6 448.1,406.1 449.0,405.1 449.7,404.0 450.6,403.2 451.7,402.5 453.3,401.6 454.5,400.2 456.2,399.5 457.8,398.5 459.5,398.0 461.1,397.1 462.8,396.6 464.4,395.7 466.3,396.0 468.2,396.5 469.9,397.3 471.8,397.8 473.8,398.0 475.4,399.1 477.2,399.8 479.0,400.6 481.5,400.6 484.0,400.5 486.4,400.2 488.9,399.8 490.1,399.6 491.4,399.5 492.5,398.8 493.7,398.6 496.2,398.2 498.6,397.7 500.6,397.3 502.7,397.2 504.7,396.9 506.7,396.3 508.5,395.2 510.3,394.3 512.3,393.6 514.2,392.8 515.4,391.8 516.6,390.7 517.9,389.9 519.3,389.2 520.5,388.2 521.7,387.2 522.9,386.1 524.0,385.0 526.2,385.1 528.4,385.4 530.6,384.9 532.8,385.0 534.9,384.2 537.2,384.2 539.4,384.0 541.6,384.0 542.8,383.3 543.9,382.4 545.1,381.8 546.0,380.8 547.3,380.2 548.6,379.6 549.9,379.2 551.3,379.1 553.0,378.5 554.7,378.3 556.4,377.8 558.1,377.5 559.9,377.4 561.6,377.2 563.3,376.7 565.0,376.2 566.2,375.8 567.3,375.3 568.2,374.4 569.2,373.7 571.0,371.9 572.8,370.3 573.7,369.3 574.4,368.2 575.5,367.4 576.2,366.3 577.3,365.4 578.1,364.4 579.2,363.6 580.0,362.5 581.8,361.1 583.3,359.5 584.8,357.8 586.4,356.1 588.1,354.5 589.5,352.8 590.7,350.9 591.7,348.8 592.5,347.7 593.6,346.9 594.4,345.9 595.3,344.8 595.6,343.5 595.9,342.2 596.6,341.0 597.2,339.8 598.1,338.9 599.2,338.2 600.2,337.2 601.2,336.4 601.7,335.2 602.4,334.0 603.4,333.1 604.4,332.2 605.7,330.5 607.0,328.7 608.2,326.9 609.7,325.3 611.5,324.1 613.4,323.0 614.6,321.1 616.1,319.5 618.0,320.5 619.8,321.8 622.0,322.2 623.9,323.4 625.4,323.7 626.9,324.1 628.5,324.4 629.9,324.9 631.4,325.5 632.9,326.0 634.2,326.8 635.7,327.3 637.3,327.0 638.9,326.6 640.3,325.9 641.9,325.4 643.5,325.5 645.2,325.4 646.8,325.4 648.4,325.4 650.3,325.2 652.1,324.4 653.8,323.5 655.4,322.5 657.3,322.0 659.2,321.5 661.1,321.6 663.0,321.5 664.6,320.3 666.4,319.3 668.3,318.4 669.8,317.1 671.7,316.5 673.3,315.5 675.2,315.4 677.0,314.8 678.9,314.3 680.9,314.4 682.7,313.8 684.5,313.2 686.2,311.9 687.8,310.6 689.4,309.3 691.0,307.9 692.9,307.0 694.5,305.6 696.4,304.6 698.1,303.4 700.0,303.9 702.0,304.3 704.0,304.9 705.9,305.4 707.6,306.9 709.3,308.5 710.5,310.4 711.8,312.2 713.5,313.8 714.8,315.6 716.4,317.2 717.7,319.1 719.1,320.0 720.4,321.0 721.8,321.9 723.0,323.0 724.0,324.3 724.9,325.7 726.3,326.7 727.4,327.9 728.6,327.4 729.8,327.2 731.1,327.3 732.4,327.5 733.6,327.7 734.8,328.1 736.0,328.6 737.2,328.8 739.7,328.7 742.1,328.4 744.5,328.5 747.0,328.8 749.4,328.5 751.8,328.6 754.3,328.3 756.7,328.8 758.0,329.3 759.0,330.0 760.2,330.8 761.4,331.2 762.7,331.7 764.0,331.8 765.2,332.4 766.5,332.7 767.3,333.9 767.9,335.2 768.5,336.5 769.1,337.8 769.6,339.2 770.0,340.6 771.2,341.5 772.3,342.5 773.6,342.9 774.7,343.7 775.8,344.4 777.0,345.0 778.2,345.4 779.6,345.7 780.8,346.1 782.1,346.4 783.8,346.0 785.6,345.5 787.2,344.9 788.9,344.3 790.5,343.4 792.2,342.9 794.0,342.4 795.8,342.5 796.7,341.2 797.7,340.1 798.9,339.1 800.0,338.1 802.0,337.1 804.0,336.2 805.9,335.1 807.6,333.7 809.5,332.5 811.4,331.5 813.4,330.6 815.2,329.2 816.3,328.3 817.3,327.4 818.2,326.3 819.0,325.2 820.2,324.4 821.3,323.7 822.6,323.0 823.8,322.4 825.0,321.8 826.1,320.9 827.2,320.1 828.4,319.5 829.7,318.9 830.7,317.9 831.9,317.3 833.0,316.5 834.7,315.0 836.7,313.9 838.3,312.3 840.1,310.9 841.5,309.1 843.3,307.7 844.4,305.6 845.7,303.8 846.9,302.0 847.7,300.0 849.1,298.4 850.0,296.4 850.6,294.4 851.6,292.5 852.7,290.7 853.3,288.6 853.6,286.3 853.9,284.0 854.9,281.9 856.3,279.9 856.6,277.7 856.8,275.4 856.8,273.1 857.1,270.8 856.7,269.5 856.3,268.3 856.1,267.0 855.5,265.8 855.1,264.5 854.7,263.2 854.6,261.9 854.6,260.6 853.6,259.6 852.3,258.8 850.9,258.4 849.5,258.1 848.4,256.7 847.0,255.6 849.3,255.5 851.5,255.0 853.7,254.8 855.9,254.3 856.6,255.4 857.3,256.4 858.1,257.5 858.7,258.6 859.3,259.7 860.0,260.8 860.3,262.0 860.9,263.2 861.3,264.4 861.7,265.7 861.9,267.0 862.3,268.2 862.7,269.5 863.1,270.7 863.2,272.0 863.5,273.3 862.6,275.1 861.8,276.9 861.4,278.9 860.6,280.7 860.3,282.7 859.7,284.6 859.9,286.6 859.7,288.6 860.6,289.9 861.4,291.2 862.4,292.5 863.5,293.6 865.3,294.3 867.2,294.7 869.1,294.1 871.1,294.2 873.0,294.4 874.9,294.8 876.8,294.8 878.7,294.9 880.9,294.4 883.2,294.3 885.5,294.1 887.8,293.9 889.8,292.8 892.1,292.5 894.3,291.7 896.5,291.1 898.2,291.0 899.9,291.1 901.5,290.8 903.1,290.2 904.8,289.9 906.4,289.2 907.8,288.4 909.3,287.5 910.9,287.2 912.6,286.9 914.2,286.3 915.5,285.1 916.9,284.3 918.5,283.6 920.2,283.8 921.9,283.5 923.3,283.4 924.5,282.9 925.9,282.8 927.2,282.3 928.5,282.0 929.7,281.4 930.9,280.9 932.2,280.4 933.3,279.5 934.6,279.1 935.9,278.7 937.1,278.2 938.4,277.8 939.7,277.3 940.8,276.5 942.0,275.9 943.7,275.0 945.3,273.9 947.0,273.0 948.8,272.4 950.4,271.3 952.0,270.2 953.8,269.5 955.7,269.1 957.7,268.3 959.5,267.2 961.3,266.1 963.0,264.8 964.8,263.7 966.4,262.3 967.8,260.7 969.4,259.3 971.5,258.3 973.4,256.8 975.0,255.1 977.0,253.8 978.6,252.1 980.0,250.2 981.7,248.6 983.0,246.6 984.4,245.9 985.6,244.8 986.9,243.9 988.3,243.2 989.4,242.1 990.4,240.9 991.6,239.9 992.8,238.8 994.5,238.5 996.2,238.1 997.9,237.5 999.5,236.8 1001.2,237.5 1003.0,237.1 1004.7,236.9 1006.5,236.8 1008.1,238.2 1010.0,239.0 1011.2,240.7 1012.8,242.1 1014.3,243.5 1016.3,244.3 1018.2,245.1 1020.2,245.6 1022.1,246.6 1024.0,247.7 1025.9,248.8 1027.8,249.9 1029.6,251.1 1031.7,251.8 1033.7,252.8 1035.8,253.4 1037.9,253.7 1039.9,253.9 1041.9,253.3 1044.0,252.8 1045.9,253.4 1048.0,253.6 1050.0,254.0 1052.0,254.4 1051.7,256.1 1051.4,257.8 1052.0,259.5 1052.0,261.2 1050.0,261.5 1047.9,261.6 1045.9,262.1 1043.8,262.3 1041.9,263.0 1039.9,263.8 1037.9,263.9 1035.8,264.2 1034.3,264.8 1033.0,265.8 1031.8,266.9 1030.4,267.6 1028.8,268.1 1027.2,268.2 1025.7,268.8 1024.1,269.1 1023.2,270.2 1022.6,271.6 1022.7,273.1 1021.8,274.4 1021.1,275.6 1020.1,276.6 1019.3,277.8 1018.2,278.8 1017.8,280.6 1017.6,282.4 1017.6,284.2 1017.3,286.0 1017.1,287.8 1016.4,289.5 1015.3,291.0 1014.3,292.5 1013.6,294.3 1013.0,296.1 1012.9,298.1 1013.0,300.0 1014.6,299.8 1016.3,299.9 1017.9,299.5 1019.5,299.5 1020.2,301.5 1019.5,302.9 1018.6,304.1 1017.2,305.0 1016.2,306.2 1015.3,307.6 1014.2,308.8 1013.2,310.1 1012.3,311.5 1011.8,313.1 1011.1,314.6 1010.3,316.0 1009.8,317.6 1008.9,319.1 1008.7,320.7 1008.2,322.3 1007.4,323.7 1007.1,325.4 1006.4,326.9 1005.2,328.1 1004.5,329.6 1003.4,330.7 1002.5,331.9 1001.4,333.1 1000.5,334.4 1000.0,335.9 999.9,337.5 999.1,338.8 998.3,340.2 997.5,341.5 996.6,342.7 995.9,344.1 994.9,345.3 994.2,346.7 993.5,348.1 993.4,349.6 992.8,351.1 992.1,352.3 991.1,353.3 990.3,354.4 989.4,355.4 988.6,356.6 987.6,357.6 987.2,359.0 986.9,360.4 986.3,361.6 985.3,362.7 985.2,364.1 984.7,365.4 984.4,366.7 984.0,368.0 983.5,369.3 983.0,370.6 982.3,371.7 981.6,372.9 980.8,373.9 979.9,374.9 978.9,375.8 978.1,376.8 977.5,378.0 977.0,379.3 976.4,380.5 976.1,381.8 975.3,382.9 974.8,384.2 974.0,385.3 973.4,386.5 972.3,387.3 971.3,388.2 970.2,389.5 969.5,391.0 969.0,392.5 968.5,394.1 967.3,395.2 966.4,396.6 965.1,397.6 963.9,398.8 963.1,400.1 961.9,401.3 961.0,402.7 960.2,404.1 959.1,405.3 957.8,406.4 956.4,407.2 954.9,407.9 954.2,410.1 953.3,412.3 951.8,414.1 949.8,415.5 948.4,417.3 946.7,418.9 945.8,421.1 944.7,423.1 943.5,424.5 942.5,426.0 941.2,427.3 940.1,428.8 939.6,430.5 938.7,432.1 937.7,433.7 936.7,435.2 935.2,436.3 934.1,437.8 932.6,438.9 931.2,440.1 929.7,441.2 929.0,442.9 927.8,444.4 927.0,446.0 925.8,447.9 924.9,450.0 923.7,451.9 922.4,453.7 920.7,455.3 918.9,456.6 917.4,458.3 916.0,460.0 914.8,462.0 914.2,464.3 913.1,466.3 911.8,468.2 910.9,470.3 909.8,472.3 908.8,474.4 907.7,476.4 906.5,478.3 904.9,479.9 903.2,481.2 901.4,482.6 899.9,484.2 898.6,486.0 897.6,488.0 896.8,490.1 895.6,492.1 894.4,494.2 893.2,496.2 892.1,498.4 891.1,500.5 890.1,502.7 888.6,504.6 887.2,506.5 886.5,508.5 885.5,510.4 885.7,512.6 885.9,514.7 883.9,515.8 881.7,516.7 879.6,517.5 877.6,518.8 877.6,520.4 877.4,522.0 876.7,523.4 875.9,524.8 875.2,526.2 874.3,527.5 873.2,528.6 872.2,529.8 870.9,530.8 869.6,531.6 868.6,532.9 867.8,534.3 866.8,535.5 865.8,536.8 864.9,538.0 864.0,539.3 863.3,540.3 862.6,541.4 861.6,542.2 860.7,543.1 860.0,544.1 859.5,545.3 859.0,546.4 858.5,547.5 857.0,549.6 855.8,551.7 855.2,552.8 854.8,554.0 853.7,554.8 853.0,555.8 851.4,557.1 850.1,558.6 848.7,560.1 848.0,562.0 847.6,564.0 846.8,565.9 845.9,567.7 844.8,569.4 843.9,571.0 843.2,572.7 842.2,574.3 841.3,575.9 840.5,577.7 840.1,579.5 839.6,581.3 839.3,583.1 840.7,584.5 841.4,586.3 842.3,588.0 843.6,589.5 844.1,591.4 845.1,593.1 845.7,594.9 846.2,596.8 845.9,598.9 845.5,601.0 845.6,603.1 845.1,605.2 844.5,607.3 843.4,609.2 842.9,611.2 842.1,613.2 841.6,614.4 841.5,615.7 841.0,616.9 840.5,618.1 840.1,619.3 839.6,620.5 839.4,621.7 839.1,623.0 839.1,624.3 838.8,625.6 838.4,626.8 837.7,627.9 837.3,629.1 836.5,630.2 835.7,631.2 835.2,632.4 834.3,634.6 833.3,636.7 832.3,638.9 830.9,640.9 830.1,643.1 828.8,645.2 827.0,646.8 825.7,648.8 825.6,651.2 825.2,653.6 824.4,655.9 824.0,658.3 824.5,660.7 824.9,663.1 824.6,665.5 824.3,667.9 824.8,669.2 825.2,670.6 825.4,671.9 825.5,673.3 825.4,674.8 825.8,676.1 825.6,677.5 825.7,678.9 824.9,680.2 824.2,681.6 823.5,682.9 823.0,684.4 822.5,685.9 821.5,687.0 821.1,688.5 820.2,689.8 818.5,691.3 816.6,692.4 814.8,693.7 812.8,694.6 811.2,696.1 809.5,697.6 808.1,699.3 806.5,700.8 804.8,701.3 803.3,702.1 802.0,703.3 800.8,704.6 799.6,705.8 798.1,706.6 796.9,707.9 795.6,709.0 795.2,710.5 794.4,711.8 793.9,713.3 793.1,714.6 792.0,715.8 791.1,717.0 790.5,718.5 790.1,720.0 789.0,722.1 787.3,723.9 786.1,725.9 784.8,727.9 783.9,729.8 783.3,731.8 782.9,733.8 782.2,735.8 782.2,738.1 782.3,740.4 782.4,742.7 782.4,745.0 782.5,747.4 782.2,749.7 782.4,752.1 783.3,754.2 783.4,756.6 783.0,758.9 782.2,761.1 781.7,763.4 781.8,765.8 782.4,768.0 782.2,770.4 782.2,772.7 782.5,774.7 782.6,776.6 782.9,778.6 782.7,780.6 783.0,782.6 783.4,784.5 783.6,786.5 783.5,788.5 783.2,790.0 782.8,791.5 783.0,793.0 783.3,794.4 783.3,795.9 783.0,797.4 782.9,798.9 782.7,800.4 782.7,801.9 782.9,803.3 783.5,804.7 783.7,806.2 783.4,807.7 783.3,809.2 783.5,810.7 783.5,812.2 784.0,814.5 784.9,816.7 785.1,819.1 785.9,821.4 786.3,823.7 786.4,826.1 787.1,828.3 787.4,830.7 787.9,832.3 788.4,833.8 788.8,835.4 789.5,836.9 790.5,838.1 791.4,839.5 792.2,841.0 792.7,842.5 794.7,842.9 796.7,843.2 798.6,843.6 800.6,844.0 802.6,844.3 804.5,844.5 806.6,844.5 808.5,845.2 809.6,846.6 810.9,847.8 812.3,848.8 813.6,850.0 814.8,851.3 816.1,852.4 817.4,853.6 819.0,854.4 820.5,854.8 822.0,855.3 823.6,855.5 825.0,856.1 826.4,856.9 827.9,857.3 829.5,857.6 830.9,858.3 832.9,857.0 834.9,855.7 836.9,854.5 838.8,853.1 839.5,854.5 840.4,855.8 841.6,856.9 842.6,858.1 843.6,859.2 844.4,860.6 844.9,862.1 845.4,863.6 847.5,864.9 849.2,866.7 850.6,868.8 852.6,870.3 854.0,872.3 855.5,874.3 856.9,876.3 858.6,878.1 860.3,879.7 861.9,881.4 863.5,883.1 865.2,884.7 864.1,886.6 863.2,888.6 862.5,890.8 861.2,892.6 859.9,890.6 858.3,888.8 857.1,886.8 855.9,884.7 854.6,884.4 853.2,884.4 851.9,884.0 850.7,883.4 850.1,884.7 849.4,886.0 849.0,887.5 848.0,888.6 848.3,890.0 848.3,891.3 848.9,892.6 849.5,893.8 849.2,895.1 849.3,896.5 849.4,897.8 849.4,899.2 847.5,897.7 845.4,896.6 845.1,895.0 845.1,893.3 845.1,891.6 845.4,889.9 844.9,888.3 844.8,886.7 844.5,885.0 844.1,883.4 842.5,884.0 840.8,884.1 839.1,884.2 837.5,884.7 837.0,886.1 835.9,887.0 835.3,888.3 834.6,889.6 833.8,890.7 832.8,891.8 831.8,892.8 830.9,893.9 830.9,895.3 830.7,896.6 830.0,897.8 829.9,899.2 830.0,900.5 829.6,901.8 829.6,903.2 829.6,904.5 829.9,906.8 830.1,909.1 830.3,911.4 830.4,913.8 830.5,916.1 830.7,918.5 831.5,920.7 832.2,922.9 833.7,924.6 834.5,926.7 835.3,928.8 835.7,931.0 836.5,933.1 837.7,935.0 839.0,936.8 840.1,938.7 842.0,939.3 844.0,939.8 846.0,939.8 848.0,940.0 849.4,938.8 850.8,937.6 852.0,936.1 853.3,934.8 854.5,936.5 855.8,938.2 857.1,939.8 858.6,941.3 856.8,942.6 855.0,943.6 852.8,943.6 850.7,944.0 850.3,946.0 850.4,948.0 850.2,950.0 849.4,951.9 850.7,953.2 852.3,954.0 853.1,955.6 854.2,957.0 855.3,958.4 856.4,959.7 857.7,960.9 858.6,962.4 859.9,962.9 861.2,963.6 862.4,964.3 863.6,964.9 865.0,965.3 866.4,965.5 867.8,965.9 869.1,966.4 870.8,966.7 872.4,966.7 874.1,966.5 875.8,966.2 877.2,965.3 878.9,965.1 880.6,965.1 882.3,965.0 883.2,967.0 884.0,969.1 885.0,971.1 886.2,973.0 886.7,975.2 886.0,977.3 885.7,979.4 885.2,981.5 885.7,983.6 886.1,985.7 886.1,987.9 886.2,990.0 360.9,990.0 359.5,988.5 358.0,987.1 356.4,985.8 354.5,985.1 352.6,984.4 350.8,983.3 349.3,981.9 347.7,980.7 346.5,980.4 345.2,980.0 344.0,979.7 342.7,979.5 341.5,979.1 340.3,978.6 339.1,978.4 337.9,977.9 336.7,977.4 335.5,976.9 334.6,975.9 333.4,975.3 332.2,974.9 331.0,974.6 329.8,974.0 328.6,973.6 327.3,973.3 326.4,972.4 325.2,971.9 324.0,971.5 322.8,971.2 321.5,971.1 320.3,970.7 319.1,970.5 317.8,970.4 316.5,970.3 315.6,969.4 314.3,968.9 313.1,968.8 311.9,968.4 310.7,968.1 309.5,967.6 307.1,967.1 304.7,966.7 302.3,966.4 299.8,966.4 297.5,965.8 295.3,964.6 292.8,964.7 290.4,964.0 288.6,963.6 286.8,963.5 285.0,963.7 283.2,963.8 281.4,963.4 279.6,963.9 277.8,963.4 276.0,963.7 274.2,963.8 272.4,964.2 270.7,964.5 268.9,964.6 267.1,964.6 265.3,965.1 263.5,965.1 261.7,965.2 259.3,965.3 256.9,965.2 254.5,965.0 252.1,964.6 249.8,964.3 247.4,964.6 245.0,964.8 242.6,965.2 241.3,965.4 240.1,965.7 238.8,966.0 237.5,966.3 236.5,967.1 235.4,967.8 234.1,968.1 233.0,968.8 231.8,969.9 230.8,971.1 229.3,971.8 228.0,972.8 227.1,974.0 225.9,975.1 224.9,976.4 223.4,977.1 222.9,975.6 222.2,974.2 221.4,972.7 221.0,971.2 219.5,971.2 218.0,971.6 216.5,971.5 215.0,971.3 213.5,971.5 212.0,971.6 210.6,972.0 209.1,972.4 207.0,971.8 204.8,971.5 202.8,970.7 200.7,970.2 198.6,969.5 196.5,969.2 194.5,968.2 192.4,967.6 191.4,966.8 190.3,966.1 189.5,965.1 188.7,964.1 187.8,963.2 187.0,962.2 186.1,961.3 185.2,960.4 183.8,959.1 182.5,957.6 181.7,955.8 180.1,954.7 179.3,952.9 178.2,951.3 177.1,949.8 175.6,948.5 174.4,948.0 173.1,947.6 171.9,947.0 170.8,946.2 169.6,945.5 168.6,944.6 167.4,944.1 166.1,943.7 163.7,943.3 161.3,943.1 158.9,942.9 156.5,942.8 154.2,942.2 151.7,942.2 149.3,942.0 146.9,942.5 145.5,941.8 144.0,941.4 142.6,940.6 141.2,939.9 139.6,939.6 138.1,939.4 136.5,939.2 135.0,938.9 133.4,937.8 131.7,936.8 130.2,935.7 128.9,934.2 127.6,932.8 125.9,931.9 124.3,930.7 123.0,929.3 121.2,928.4 119.5,927.3 118.1,925.8 116.3,924.8 114.4,924.0 112.5,923.7 110.7,922.7 108.7,922.2 106.9,921.3 105.2,920.2 103.2,919.7 101.3,919.1 99.5,918.2 97.7,917.1 95.8,916.4 94.3,915.0 93.0,914.2 91.8,913.4 90.7,912.4 89.6,911.4 88.6,909.5 88.5,907.4 87.9,905.4 86.9,903.6 86.3,901.5 85.5,899.6 84.7,897.7 83.6,895.9 80.0,895.9 80.0,422.0" fill="none" stroke="#505a62" stroke-width="1.35" stroke-linejoin="round"/>
<polygon points="1175.0,150.8 1173.3,150.7 1171.7,150.8 1171.3,152.0 1170.9,153.2 1170.5,154.4 1170.0,155.5 1169.3,156.5 1168.4,157.4 1167.8,158.5 1167.2,159.6 1166.0,161.8 1164.4,163.7 1163.1,165.8 1161.9,168.0 1161.8,169.3 1161.5,170.5 1161.7,171.8 1161.7,173.1 1161.4,174.3 1160.7,175.4 1160.5,176.7 1160.1,177.9 1159.7,179.1 1159.5,180.4 1159.0,181.5 1158.4,182.7 1158.2,183.9 1157.7,185.1 1157.5,186.3 1157.0,187.5 1156.4,188.8 1156.0,190.1 1155.9,191.5 1156.2,192.9 1155.5,194.0 1155.1,195.4 1154.7,196.6 1154.3,197.9 1153.9,199.3 1153.9,200.6 1153.8,202.0 1153.7,203.3 1153.3,204.6 1153.2,206.0 1152.7,207.3 1152.4,208.6 1152.5,209.9 1152.7,211.3 1152.4,212.6 1152.1,214.0 1151.9,215.3 1151.6,216.6 1151.2,217.9 1151.0,219.3 1151.0,220.6 1150.8,222.0 1150.9,223.3 1150.8,224.7 1150.8,226.0 1150.4,227.3 1150.3,228.7 1150.0,230.0 1148.6,231.3 1147.0,232.2 1145.2,232.9 1143.5,233.6 1141.7,234.2 1139.9,234.8 1138.5,236.2 1137.2,237.6 1135.7,238.8 1134.6,240.3 1133.1,241.4 1131.5,242.4 1130.0,243.4 1128.4,244.4 1126.7,245.3 1125.6,246.9 1124.1,248.1 1122.5,249.0 1120.9,250.1 1119.4,251.2 1117.5,251.5 1115.7,251.9 1113.9,252.5 1112.2,253.5 1110.7,254.6 1109.2,255.6 1107.6,256.6 1106.0,257.6 1104.4,258.6 1102.6,259.3 1101.8,261.1 1100.0,262.0 1098.9,262.8 1097.6,263.1 1096.5,263.8 1095.3,264.2 1093.9,264.2 1092.6,264.1 1091.4,264.6 1090.1,264.7 1088.8,265.0 1087.5,265.2 1086.3,265.6 1085.0,265.7 1083.7,266.1 1082.5,266.3 1081.2,266.5 1079.9,266.7 1078.8,267.4 1077.4,267.6 1076.1,267.5 1074.8,267.5 1073.7,268.2 1072.6,269.0 1071.3,269.2 1069.9,269.2 1068.7,269.6 1067.4,270.0 1066.3,270.6 1065.1,271.3 1063.8,271.3 1062.5,271.4 1061.2,271.6 1060.0,272.0 1058.1,273.2 1055.9,273.8 1053.8,274.6 1052.0,276.0 1050.4,277.3 1048.7,278.3 1048.4,279.7 1048.1,281.0 1047.6,282.3 1047.3,283.7 1047.6,285.2 1047.5,286.8 1047.9,288.3 1048.3,289.8 1047.8,291.3 1047.9,292.9 1047.7,294.5 1047.9,296.0 1048.3,297.5 1048.1,299.1 1048.1,300.6 1048.2,302.2 1047.9,303.7 1047.9,305.3 1047.5,306.8 1047.3,308.3 1047.9,310.4 1048.6,312.4 1049.6,314.4 1050.0,316.5 1051.4,318.4 1053.0,320.0 1052.6,322.0 1052.4,324.1 1053.1,326.0 1053.5,328.1 1053.6,330.1 1053.4,332.2 1052.8,334.1 1052.0,336.0 1051.7,338.0 1051.3,340.0 1051.7,342.0 1051.4,344.1 1051.6,346.1 1051.7,348.1 1052.2,350.1 1053.0,352.0 1051.4,353.2 1050.1,354.7 1048.7,356.1 1047.3,357.5 1047.1,358.9 1047.4,360.3 1047.4,361.7 1047.6,363.1 1047.2,364.4 1046.7,365.7 1046.2,367.0 1046.0,368.4 1047.3,370.3 1048.0,372.5 1049.3,374.4 1050.0,376.6 1051.8,378.1 1053.0,380.0 1052.9,382.0 1052.5,384.0 1052.2,386.0 1051.9,388.0 1052.2,390.0 1052.0,392.1 1052.4,394.1 1053.0,396.0 1051.9,397.3 1050.4,398.2 1049.6,399.7 1048.7,401.2 1048.3,403.2 1047.7,405.2 1047.3,407.3 1047.3,409.4 1047.9,410.8 1048.3,412.3 1049.0,413.7 1050.0,414.9 1050.8,416.1 1051.7,417.3 1052.3,418.7 1053.0,420.0 1054.7,421.3 1056.1,422.8 1057.9,424.0 1059.2,425.7 1060.4,427.6 1061.8,429.2 1063.9,430.0 1065.8,430.9 1067.6,432.1 1069.2,433.4 1071.2,434.2 1072.9,435.5 1074.8,436.5 1076.3,438.0 1078.0,439.3 1080.0,440.0 1081.3,440.5 1082.6,440.9 1083.9,441.2 1085.3,441.3 1086.4,442.1 1087.6,442.9 1088.6,443.8 1089.7,444.6 1090.9,445.2 1092.1,445.9 1093.4,446.1 1094.7,446.4 1095.8,447.2 1097.1,447.7 1098.5,447.9 1099.9,447.9 1101.2,448.1 1102.3,448.9 1103.6,449.3 1104.8,449.9 1106.0,450.6 1107.2,451.1 1108.5,451.5 1109.7,452.0 1111.0,452.4 1112.2,452.9 1113.5,453.4 1114.7,454.0 1116.0,454.3 1117.4,454.4 1118.7,454.8 1120.0,455.0 1122.3,455.7 1124.6,455.8 1126.9,456.3 1129.2,457.0 1131.5,457.6 1133.6,458.7 1135.7,459.8 1137.7,461.0 1139.7,462.3 1141.9,463.5 1144.2,464.0 1146.6,464.1 1148.7,465.3 1150.6,466.6 1152.7,467.7 1154.6,469.1 1156.7,468.5 1158.9,468.2 1161.0,467.5 1163.2,467.3 1165.3,466.5 1167.5,466.7 1169.5,465.9 1171.7,465.5 1173.3,465.6 1175.0,465.5" fill="none" stroke="#505a62" stroke-width="1.35" stroke-linejoin="round"/>
<polygon points="1140.0,33.0 1140.6,35.0 1141.5,36.9 1141.4,39.0 1142.4,40.9 1143.3,42.1 1144.3,43.1 1145.3,44.3 1146.5,45.2 1147.9,45.8 1148.8,47.0 1150.0,47.9 1151.0,49.0 1152.1,50.4 1153.5,51.6 1155.0,52.5 1156.3,53.6 1157.8,54.7 1159.1,55.8 1160.8,56.6 1161.9,58.0 1163.6,58.9 1165.5,59.4 1167.2,60.4 1168.7,61.6 1170.2,62.8 1171.7,64.0 1173.4,64.9 1175.0,66.0 1175.0,33.0" fill="none" stroke="#505a62" stroke-width="1.35" stroke-linejoin="round"/>
<polygon points="426.1,80.0 428.6,80.2 431.0,80.5 432.4,82.1 433.5,84.0 433.3,85.5 432.9,87.0 433.2,88.5 433.0,90.0 432.1,92.3 431.0,94.5 429.7,94.6 428.4,94.6 427.1,94.9 426.0,95.6 423.6,95.3 421.5,94.0 420.5,92.9 419.8,91.7 419.2,90.4 418.8,89.0 419.0,87.7 419.4,86.5 419.5,85.3 419.5,84.0 420.9,82.6 422.0,81.0 424.0,80.5" fill="none" stroke="#505a62" stroke-width="1.35" stroke-linejoin="round"/>
<polygon points="519.2,59.1 520.8,59.8 522.5,60.3 524.2,60.5 526.0,60.5 528.1,60.8 529.9,62.0 531.9,62.3 533.9,62.9 535.6,64.1 537.0,65.5 537.1,67.3 536.9,69.1 537.1,70.9 537.2,72.8 537.7,74.5 537.6,76.4 537.4,78.2 537.0,80.0 535.2,80.2 533.5,80.3 531.7,80.1 530.0,79.5 528.7,79.2 527.4,79.0 526.1,78.7 524.9,78.2 524.1,77.2 523.2,76.2 522.1,75.7 521.0,75.0 519.5,73.7 518.6,71.9 517.9,70.7 517.1,69.6 516.4,68.4 516.2,67.0 516.1,65.0 516.0,63.0 516.7,61.9 517.4,60.9 518.3,60.0" fill="none" stroke="#505a62" stroke-width="1.35" stroke-linejoin="round"/>
<polygon points="693.2,104.0 693.6,105.3 693.3,106.7 693.3,108.0 693.2,109.3 692.8,110.5 692.5,111.8 692.3,113.1 692.0,114.4 691.8,115.6 691.6,116.9 691.4,118.2 691.2,119.5 691.2,121.0 691.2,122.5 690.7,124.0 690.3,125.4 691.1,127.6 692.3,129.6 693.6,131.5 695.2,133.2 696.6,134.3 698.1,135.1 699.6,136.1 701.0,137.1 702.8,137.7 704.5,138.4 706.2,139.1 707.9,140.0 708.9,141.3 709.6,142.8 709.9,144.5 710.8,145.9 711.9,147.8 712.7,149.8 714.1,150.4 715.5,151.0 717.1,151.0 718.6,151.3 719.8,149.9 720.2,148.2 720.9,146.6 721.5,144.9 721.2,142.9 720.8,140.9 720.6,138.9 719.6,137.1 719.4,135.6 719.3,134.1 719.0,132.7 718.6,131.2 720.0,129.7 721.5,128.3 723.5,128.2 725.4,127.9 727.4,127.6 729.3,127.3 730.2,125.4 730.3,123.4 728.6,121.9 726.4,121.5 724.5,120.5 722.5,119.5 721.7,117.6 721.5,115.6 722.0,114.0 722.2,112.4 722.6,110.9 723.0,109.3 723.1,108.0 723.2,106.7 723.3,105.3 723.0,104.0 721.1,103.8 719.3,103.3 717.4,103.6 715.5,103.9 713.8,104.8 711.9,105.2 710.0,105.0 708.1,104.9 706.2,104.7 704.4,104.4 702.6,103.7 700.7,103.4 698.8,103.6 697.0,104.4 695.1,104.5" fill="none" stroke="#505a62" stroke-width="1.35" stroke-linejoin="round"/>
<polygon points="718.6,156.6 719.8,157.1 721.2,157.3 722.3,158.0 723.5,158.6 723.2,160.1 722.8,161.5 722.6,163.0 722.5,164.5 723.9,165.6 725.2,166.9 727.0,167.3 728.4,168.4 729.8,169.3 730.9,170.6 732.6,170.8 734.2,171.3 735.5,173.2 736.9,174.9 738.6,176.4 740.1,178.1 740.3,180.1 740.5,182.1 741.0,184.1 741.5,186.0 742.1,187.5 742.9,188.8 743.4,190.3 744.0,191.8 742.5,192.7 740.9,193.5 739.5,194.6 738.1,195.7 736.5,195.1 734.7,195.1 733.0,194.9 731.3,194.7 730.4,193.6 729.5,192.5 728.4,191.7 727.2,190.9 726.0,190.2 724.8,189.4 723.7,188.6 722.5,187.9 721.0,186.6 719.3,185.7 717.5,184.8 715.7,184.0 714.7,182.9 713.7,181.9 713.4,180.5 712.5,179.3 711.9,178.0 711.3,176.6 710.5,175.5 709.8,174.2 709.9,172.2 710.4,170.3 710.3,168.3 710.8,166.4 712.3,165.7 713.7,165.0 715.1,164.1 716.6,163.5 717.0,162.3 717.1,161.0 717.1,159.8 717.6,158.6" fill="none" stroke="#505a62" stroke-width="1.35" stroke-linejoin="round"/>
<polygon points="507.5,62.5 510.5,62.5 509.0,65.0" fill="none" stroke="#505a62" stroke-width="1.35" stroke-linejoin="round"/>
</g>
<clipPath id="gc"><circle cx="132.05" cy="78.05" r="29.85"/></clipPath>
<radialGradient id="gb2" cx="0.3" cy="0.2" r="0.9"><stop offset="0" stop-color="#33a8d2"/><stop offset="0.55" stop-color="#167eae"/><stop offset="1" stop-color="#0a5683"/></radialGradient>
<g clip-path="url(#gc)">
<rect x="100" y="46" width="66" height="66" fill="url(#gb2)"/>
<polygon points="135.6,61.0 141.2,49.1 148.8,52.2 151.9,57.2 143.8,57.9" fill="#1f9a3c"/>
<polygon points="136.2,61.0 143.8,57.9 151.9,57.2 152.2,64.8 143.8,62.9 137.5,62.2" fill="#e1101f"/>
<polygon points="148.8,52.2 157.5,59.8 161.9,71.0 159.4,74.1 152.2,64.8 151.9,57.2" fill="#d9c7d8"/>
<polygon points="137.5,62.2 143.8,62.9 152.2,64.8 145.6,72.9" fill="#1f9a3c"/>
<polygon points="135.0,61.0 140.6,66.6 145.6,72.9 134.1,74.8" fill="#f2e31c"/>
<polygon points="145.6,72.9 152.2,64.8 159.4,74.1 149.4,83.5" fill="#f2e31c"/>
<polygon points="159.4,71.0 163.1,71.0 163.1,77.2 159.4,74.1" fill="#1f9a3c"/>
<polygon points="134.1,74.8 145.6,72.9 149.4,83.5 150.9,86.6 134.1,89.8" fill="#e1101f"/>
<polygon points="149.4,83.5 159.4,74.1 163.1,77.2 162.5,89.8 154.4,97.2" fill="#d9c7d8"/>
<polygon points="134.1,89.8 150.9,86.6 154.4,97.2 157.5,111.6 131.2,111.6" fill="#1f9a3c"/>
<polygon points="153.8,95.4 159.4,89.1 160.0,92.2 155.3,97.9" fill="#e1101f"/>
<path d="M135.00,61.00 C134.84,63.71 134.38,72.46 134.06,77.25 C133.75,82.04 133.49,84.54 133.12,89.75 C132.76,94.96 132.08,105.38 131.88,108.50" fill="none" stroke="#fff" stroke-width="1.0" stroke-linecap="round"/>
<path d="M135.00,61.00 L141.25,49.12" fill="none" stroke="#fff" stroke-width="1.0" stroke-linecap="round"/>
<path d="M135.00,61.00 L128.12,48.50" fill="none" stroke="#fff" stroke-width="1.0" stroke-linecap="round"/>
<path d="M135.00,61.00 C135.94,61.94 138.85,64.65 140.62,66.62 C142.40,68.60 144.17,70.48 145.62,72.88 C147.08,75.27 148.44,78.71 149.38,81.00 C150.31,83.29 150.42,83.71 151.25,86.62 C152.08,89.54 153.85,96.52 154.38,98.50" fill="none" stroke="#fff" stroke-width="1.0" stroke-linecap="round"/>
<path d="M135.00,61.00 C133.33,62.88 127.81,68.50 125.00,72.25 C122.19,76.00 119.90,79.96 118.12,83.50 C116.35,87.04 115.42,90.58 114.38,93.50 C113.33,96.42 112.29,99.75 111.88,101.00" fill="none" stroke="#fff" stroke-width="1.0" stroke-linecap="round"/>
<path d="M128.12,49.12 C126.98,49.85 122.76,51.73 121.25,53.50 C119.74,55.27 119.27,57.67 119.06,59.75 C118.85,61.83 119.01,63.92 120.00,66.00 C120.99,68.08 122.66,70.79 125.00,72.25 C127.34,73.71 130.62,74.65 134.06,74.75 C137.50,74.85 142.60,74.54 145.62,72.88 C148.65,71.21 151.15,67.35 152.19,64.75 C153.23,62.15 151.93,58.50 151.88,57.25" fill="none" stroke="#fff" stroke-width="1.0" stroke-linecap="round"/>
<path d="M101.88,78.50 C103.02,77.25 106.04,73.29 108.75,71.00 C111.46,68.71 115.10,66.26 118.12,64.75 C121.15,63.24 124.06,62.56 126.88,61.94 C129.69,61.31 132.19,60.84 135.00,61.00 C137.81,61.16 140.89,62.25 143.75,62.88 C146.61,63.50 149.58,62.88 152.19,64.75 C154.79,66.62 158.18,72.56 159.38,74.12" fill="none" stroke="#fff" stroke-width="1.0" stroke-linecap="round"/>
<path d="M108.12,55.38 C108.18,56.94 108.23,61.94 108.44,64.75 C108.65,67.56 108.49,69.65 109.38,72.25 C110.26,74.85 112.29,78.50 113.75,80.38 C115.21,82.25 117.40,82.98 118.12,83.50" fill="none" stroke="#fff" stroke-width="1.0" stroke-linecap="round"/>
<path d="M102.50,79.75 L109.38,71.00" fill="none" stroke="#fff" stroke-width="1.0" stroke-linecap="round"/>
<path d="M106.25,72.25 C107.08,73.71 109.27,79.12 111.25,81.00 C113.23,82.88 114.32,82.04 118.12,83.50 C121.93,84.96 128.75,89.33 134.06,89.75 C139.38,90.17 145.78,88.40 150.00,86.00 C154.22,83.60 157.81,77.15 159.38,75.38" fill="none" stroke="#fff" stroke-width="1.0" stroke-linecap="round"/>
<path d="M102.50,83.50 C104.17,85.90 107.50,94.65 112.50,97.88 C117.50,101.10 125.52,102.98 132.50,102.88 C139.48,102.77 150.73,98.19 154.38,97.25" fill="none" stroke="#fff" stroke-width="1.0" stroke-linecap="round"/>
<path d="M109.38,56.00 C111.15,56.10 116.88,56.21 120.00,56.62 C123.12,57.04 125.62,57.77 128.12,58.50 C130.62,59.23 133.85,60.58 135.00,61.00" fill="none" stroke="#fff" stroke-width="1.0" stroke-linecap="round"/>
<path d="M135.62,61.00 C136.98,60.48 141.04,58.50 143.75,57.88 C146.46,57.25 149.58,56.94 151.88,57.25 C154.17,57.56 156.56,59.33 157.50,59.75" fill="none" stroke="#fff" stroke-width="1.0" stroke-linecap="round"/>
<path d="M149.38,83.50 L159.38,74.12" fill="none" stroke="#fff" stroke-width="1.0" stroke-linecap="round"/>
</g>
<text x="169.9" y="75" font-size="13.2" font-weight="bold" fill="#3d3e45" textLength="89" lengthAdjust="spacingAndGlyphs">ISTITUTO NAZIONALE</text>
<text x="169.9" y="89.2" font-size="13.2" font-weight="bold" fill="#3d3e45" textLength="135.5" lengthAdjust="spacingAndGlyphs">DI GEOFISICA E VULCANOLOGIA</text>
<line x1="255.0" y1="36" x2="255.0" y2="987" stroke="#3a3a3a" stroke-width="1.2"/>
<line x1="497.5" y1="36" x2="497.5" y2="987" stroke="#3a3a3a" stroke-width="1.2"/>
<line x1="740.1" y1="36" x2="740.1" y2="987" stroke="#3a3a3a" stroke-width="1.2"/>
<line x1="982.5" y1="36" x2="982.5" y2="987" stroke="#3a3a3a" stroke-width="1.2"/>
<line x1="83.5" y1="114.4" x2="1172.5" y2="114.4" stroke="#3a3a3a" stroke-width="1.2"/>
<line x1="83.5" y1="421.8" x2="1172.5" y2="421.8" stroke="#3a3a3a" stroke-width="1.2"/>
<line x1="83.5" y1="726.8" x2="1172.5" y2="726.8" stroke="#3a3a3a" stroke-width="1.2"/>
<rect x="536.5" y="46.5" width="618" height="62" fill="#fff" stroke="#000" stroke-width="1"/>
<text x="542" y="60.4" font-size="12.4" fill="#111" textLength="360.4" lengthAdjust="spacingAndGlyphs">Terremoto del 18-01-2026 14:54:16 (ora locale) Mw=4.1 Prof=8 km</text>
<text x="542" y="74.9" font-size="12.4" fill="#111" textLength="170.3" lengthAdjust="spacingAndGlyphs">Effetto acustico (rombo sismico)</text>
<text x="542" y="89.7" font-size="12.4" fill="#111" textLength="610.6" lengthAdjust="spacingAndGlyphs">Dati non verificati estratti da 101 questionari compilati tramite Internet, relativi a comuni con almeno 3 questionari.</text>
<text x="542" y="104.3" font-size="12.4" fill="#111" textLength="235.8" lengthAdjust="spacingAndGlyphs">Aggiornato il: 22-01-2026 09:33 (ora locale)</text>
<rect x="1052.5" y="171.5" width="101" height="332" fill="#fff" stroke="#000" stroke-width="1"/>
<text x="1060.7" y="193.1" font-size="13.6" font-weight="bold" fill="#000" textLength="85.5" lengthAdjust="spacingAndGlyphs">Percentuale</text>
<text x="1055.6" y="208.7" font-size="13.6" font-weight="bold" fill="#000" textLength="96.4" lengthAdjust="spacingAndGlyphs">di percezione</text>
<text x="1064.2" y="224.6" font-size="13.6" font-weight="bold" fill="#000" textLength="79.6" lengthAdjust="spacingAndGlyphs">dell'effetto</text>
<text x="1074.4" y="240" font-size="13.6" font-weight="bold" fill="#000" textLength="59.1" lengthAdjust="spacingAndGlyphs">acustico</text>
<rect x="1061" y="255.2" width="80.2" height="36.8" fill="#e2f1fd"/>
<text x="1074.4" y="278.0" font-size="13.6" font-weight="bold" fill="#000" textLength="53.0" lengthAdjust="spacingAndGlyphs">0 - 24%</text>
<rect x="1061" y="299.3" width="80.2" height="36.8" fill="#c7e1f9"/>
<text x="1070.3" y="322.1" font-size="13.6" font-weight="bold" fill="#000" textLength="62.2" lengthAdjust="spacingAndGlyphs">25 - 49%</text>
<rect x="1061" y="344" width="80.2" height="36.8" fill="#6cb0f7"/>
<text x="1070.3" y="366.8" font-size="13.6" font-weight="bold" fill="#000" textLength="62.2" lengthAdjust="spacingAndGlyphs">50 - 74%</text>
<rect x="1061" y="386.8" width="80.2" height="36.8" fill="#0a60c8"/>
<text x="1065.2" y="409.6" font-size="13.6" font-weight="bold" fill="#fff" textLength="71.4" lengthAdjust="spacingAndGlyphs">75 - 100%</text>
<line x1="1053" y1="435.4" x2="1153" y2="435.4" stroke="#000" stroke-width="1" stroke-dasharray="2,2"/>
<text x="1068.3" y="452" font-size="13.6" font-weight="bold" fill="#000" textLength="68.3" lengthAdjust="spacingAndGlyphs">Epicentro</text>
<text x="1058.4" y="467.9" font-size="13.6" font-weight="bold" fill="#000" textLength="87.8" lengthAdjust="spacingAndGlyphs">strumentale</text>
<polygon points="1100.9,480.7 1102.9,486.7 1109.2,486.7 1104.1,490.4 1106.0,496.4 1100.9,492.7 1095.8,496.4 1097.7,490.4 1092.6,486.7 1098.9,486.7" fill="#fff" stroke="#000" stroke-width="1.2" stroke-linejoin="miter"/>
<polygon points="577.3,383.0 581.5,395.9 595.0,395.9 584.1,403.8 588.2,416.6 577.3,408.7 566.4,416.6 570.5,403.8 559.6,395.9 573.1,395.9" fill="#6cb0f7" stroke="#000" stroke-width="3.9" stroke-linejoin="miter" stroke-miterlimit="10"/>
<text x="246" y="916.2" font-size="30" text-anchor="middle" fill="#000">km</text>
<rect x="191.2" y="930.5" width="27.5" height="6" fill="#000"/>
<rect x="218.7" y="930.5" width="27.4" height="6" fill="#fff" stroke="#000" stroke-width="1"/>
<rect x="246.1" y="930.5" width="28.7" height="6" fill="#000"/>
<rect x="274.8" y="930.5" width="27.5" height="6" fill="#fff" stroke="#000" stroke-width="1"/>
<line x1="191.2" y1="930" x2="191.2" y2="940" stroke="#000" stroke-width="1.2"/>
<line x1="246.1" y1="930" x2="246.1" y2="940" stroke="#000" stroke-width="1.2"/>
<line x1="302.3" y1="930" x2="302.3" y2="940" stroke="#000" stroke-width="1.2"/>
<line x1="218.7" y1="930" x2="218.7" y2="937" stroke="#000" stroke-width="1"/>
<line x1="274.8" y1="930" x2="274.8" y2="937" stroke="#000" stroke-width="1"/>
<text x="191.2" y="965.2" font-size="22.3" text-anchor="middle" fill="#000">0</text>
<text x="246.5" y="965.2" font-size="22.3" text-anchor="middle" fill="#000">10</text>
<text x="301.5" y="965.2" font-size="22.3" text-anchor="middle" fill="#000">20</text>
<circle cx="1094.1" cy="916.2" r="32" fill="#231f20"/>
<circle cx="1094.8999999999999" cy="916.2" r="18.2" fill="none" stroke="#e31b23" stroke-width="5.5"/>
<circle cx="1095.8999999999999" cy="916.2" r="8" fill="#e31b23"/>
<polygon points="1100,910.5 1127,900.8 1131.5,902.5 1131.5,932.5 1127,934 1100,923" fill="url(#cone)"/>
<circle cx="1144.5" cy="916.2" r="10" fill="#e31b23"/>
<text x="1144.5" y="921" font-size="13" font-weight="bold" text-anchor="middle" fill="#fff">?</text>
<path id="tp" d="M 1128.82,937.06 A 40.5,40.5 0 1,1 1128.07,894.14" fill="none"/>
<text font-size="20" font-weight="bold" fill="#231f20"><textPath href="#tp" textLength="209.2" lengthAdjust="spacingAndGlyphs"><tspan fill="#e31b23">www.</tspan><tspan font-weight="normal">hai</tspan>sentito<tspan font-weight="normal">il</tspan>terremoto<tspan fill="#e31b23">.it</tspan></textPath></text>
<g>
<rect x="255" y="25.6" width="242.5" height="10.2" fill="#000"/>
<rect x="255" y="987.2" width="242.5" height="10" fill="#000"/>
<rect x="740.1" y="25.6" width="242.4" height="10.2" fill="#000"/>
<rect x="740.1" y="987.2" width="242.4" height="10" fill="#000"/>
<rect x="73.5" y="114.4" width="10" height="307.4" fill="#000"/>
<rect x="1172.5" y="114.4" width="9.5" height="307.4" fill="#000"/>
<rect x="73.5" y="726.8" width="10" height="260.4" fill="#000"/>
<rect x="1172.5" y="726.8" width="9.5" height="260.4" fill="#000"/>
<rect x="73.5" y="25.6" width="1108.5" height="971.6" fill="none" stroke="#222" stroke-width="1.2"/>
<line x1="83.5" y1="25.6" x2="83.5" y2="997.2" stroke="#222" stroke-width="1.2"/>
<line x1="1172.5" y1="25.6" x2="1172.5" y2="997.2" stroke="#222" stroke-width="1.2"/>
<line x1="73.5" y1="35.8" x2="1182" y2="35.8" stroke="#222" stroke-width="1.2"/>
<line x1="73.5" y1="987.2" x2="1182" y2="987.2" stroke="#222" stroke-width="1.2"/>
</g>
<text x="255.5" y="16.7" font-size="23" text-anchor="middle" fill="#000">14°00'</text>
<text x="255.5" y="1023" font-size="23" text-anchor="middle" fill="#000">14°00'</text>
<text x="498.0" y="16.7" font-size="23" text-anchor="middle" fill="#000">14°30'</text>
<text x="498.0" y="1023" font-size="23" text-anchor="middle" fill="#000">14°30'</text>
<text x="740.6" y="16.7" font-size="23" text-anchor="middle" fill="#000">15°00'</text>
<text x="740.6" y="1023" font-size="23" text-anchor="middle" fill="#000">15°00'</text>
<text x="983.0" y="16.7" font-size="23" text-anchor="middle" fill="#000">15°30'</text>
<text x="983.0" y="1023" font-size="23" text-anchor="middle" fill="#000">15°30'</text>
<text x="63.5" y="123.10000000000001" font-size="23" text-anchor="end" fill="#000">38°30'</text>
<text x="1192" y="123.10000000000001" font-size="23" fill="#000">38°30'</text>
<text x="63.5" y="430.5" font-size="23" text-anchor="end" fill="#000">38°00'</text>
<text x="1192" y="430.5" font-size="23" fill="#000">38°00'</text>
<text x="63.5" y="735.5" font-size="23" text-anchor="end" fill="#000">37°30'</text>
<text x="1192" y="735.5" font-size="23" fill="#000">37°30'</text>
</svg></body></html>
